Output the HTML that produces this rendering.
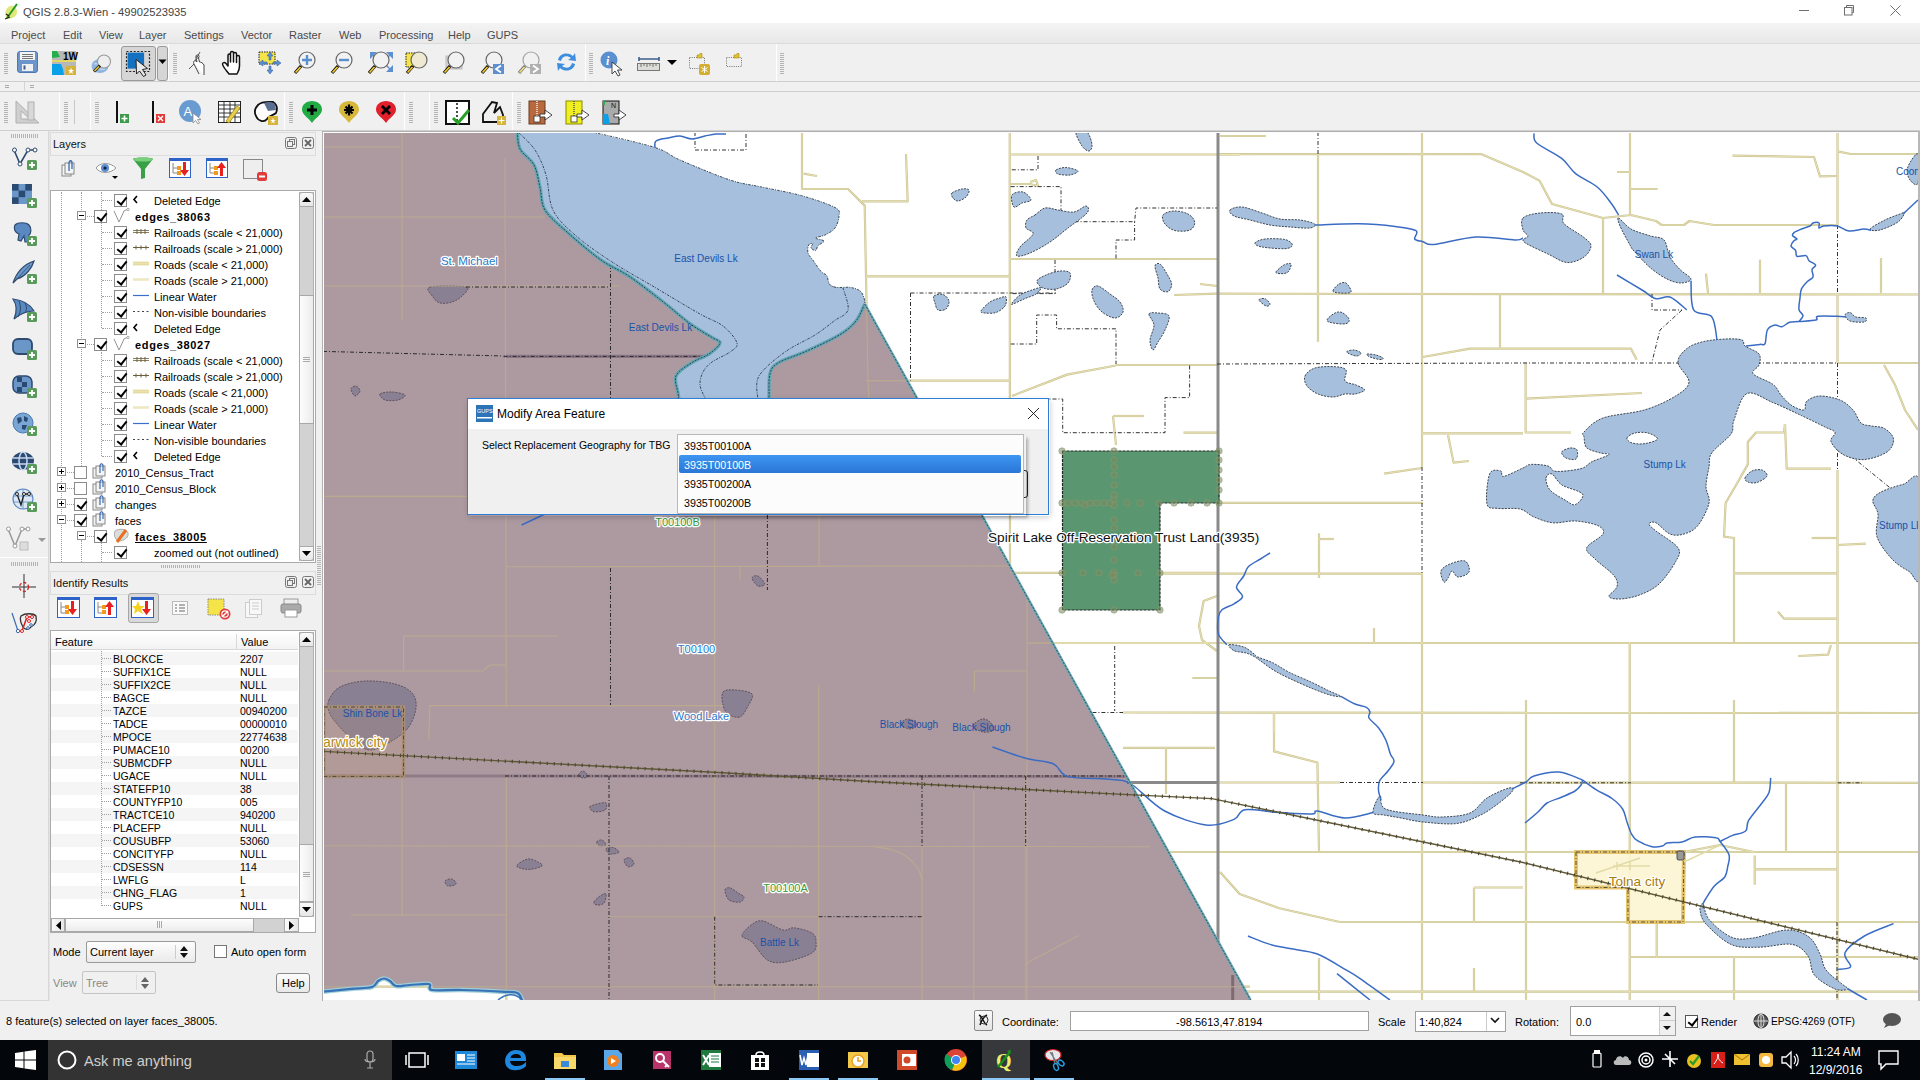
<!DOCTYPE html><html><head><meta charset="utf-8"><title>QGIS</title><style>
*{margin:0;padding:0;box-sizing:border-box}
html,body{width:1920px;height:1080px;overflow:hidden;background:#f0f0f0;font-family:"Liberation Sans",sans-serif;font-size:11px;color:#000}
.a{position:absolute}
.t{position:absolute;white-space:nowrap;line-height:12px}
.grip{position:absolute;width:4px;background:repeating-linear-gradient(to bottom,#b4b4b4 0,#b4b4b4 1px,transparent 1px,transparent 2px)}
.hgrip{position:absolute;height:4px;background:repeating-linear-gradient(to right,#b4b4b4 0,#b4b4b4 1px,transparent 1px,transparent 2px)}
.cb{position:absolute;width:13px;height:13px;border:1px solid #333;background:#fff}
.cb.k::after{content:"";position:absolute;left:3.5px;top:0px;width:4px;height:8px;border:solid #000;border-width:0 2.3px 2.3px 0;transform:rotate(38deg)}
.exp{position:absolute;width:9px;height:9px;border:1px solid #919191;background:#fff}
.exp::before{content:"";position:absolute;left:1px;top:3px;width:5px;height:1px;background:#000}
.exp.p::after{content:"";position:absolute;left:3px;top:1px;width:1px;height:5px;background:#000}
.dv{position:absolute;border-left:1px dotted #a0a0a0;width:0}
.dh{position:absolute;border-top:1px dotted #a0a0a0;height:0}
svg{position:absolute;overflow:visible}
</style></head><body><div class="a" style="left:0px;top:0px;width:1920px;height:23px;background:#fff"></div>
<svg style="left:3px;top:2px;" width="17" height="19" viewBox="0 0 17 19"><path d="M4 17 C1 12 2 6 7 4 C11 3 14 6 14 10 C14 14 10 17 4 17Z" fill="#dfe97a"/><path d="M4 16 L14 2" stroke="#229a22" stroke-width="2"/><path d="M2 17 L7 15 M3 12 L6 14" stroke="#222" stroke-width="1.3"/></svg>
<div class="t" style="left:23px;top:6px;font-size:11.2px;color:#444;">QGIS 2.8.3-Wien - 49902523935</div>
<div class="a" style="left:1799px;top:10px;width:10px;height:1px;background:#6e6e6e"></div>
<svg style="left:1844px;top:5px;" width="11" height="11" viewBox="0 0 11 11"><rect x="0.5" y="2.5" width="7.5" height="7.5" fill="none" stroke="#6e6e6e"/><path d="M2.5 2.5 V0.5 H9.5 V7.5 H8" fill="none" stroke="#6e6e6e"/></svg>
<svg style="left:1890px;top:5px;" width="11" height="11" viewBox="0 0 11 11"><path d="M0.5 0.5 L10.5 10.5 M10.5 0.5 L0.5 10.5" stroke="#6e6e6e" stroke-width="1"/></svg>
<div class="a" style="left:0px;top:23px;width:1920px;height:21px;background:linear-gradient(#f4f4f4,#e8e8e8);border-bottom:1px solid #dadada"></div>
<div class="t" style="left:11px;top:29px;font-size:11px;color:#4a4a4a;">Project</div>
<div class="t" style="left:63px;top:29px;font-size:11px;color:#4a4a4a;">Edit</div>
<div class="t" style="left:99px;top:29px;font-size:11px;color:#4a4a4a;">View</div>
<div class="t" style="left:139px;top:29px;font-size:11px;color:#4a4a4a;">Layer</div>
<div class="t" style="left:184px;top:29px;font-size:11px;color:#4a4a4a;">Settings</div>
<div class="t" style="left:241px;top:29px;font-size:11px;color:#4a4a4a;">Vector</div>
<div class="t" style="left:289px;top:29px;font-size:11px;color:#4a4a4a;">Raster</div>
<div class="t" style="left:339px;top:29px;font-size:11px;color:#4a4a4a;">Web</div>
<div class="t" style="left:379px;top:29px;font-size:11px;color:#4a4a4a;">Processing</div>
<div class="t" style="left:448px;top:29px;font-size:11px;color:#4a4a4a;">Help</div>
<div class="t" style="left:487px;top:29px;font-size:11px;color:#4a4a4a;">GUPS</div>
<div class="a" style="left:0px;top:44px;width:1920px;height:38px;background:#f0f0f0;border-bottom:1px solid #cfcfcf"></div>
<div class="a" style="left:0px;top:82px;width:1920px;height:10px;background:#f0f0f0;border-bottom:1px solid #cfcfcf"></div>
<div class="a" style="left:24px;top:82px;width:1px;height:10px;background:#d4d4d4"></div>
<div class="a" style="left:5px;top:85px;width:4px;height:1px;background:#aaa"></div>
<div class="a" style="left:5px;top:87px;width:4px;height:1px;background:#aaa"></div>
<div class="a" style="left:30px;top:85px;width:4px;height:1px;background:#aaa"></div>
<div class="a" style="left:30px;top:87px;width:4px;height:1px;background:#aaa"></div>
<div class="a" style="left:0px;top:92px;width:1920px;height:39px;background:#f0f0f0;border-bottom:1px solid #cfcfcf"></div>
<div class="grip" style="left:4px;top:53px;height:21px"></div>
<div class="a" style="left:168px;top:44px;width:1px;height:37px;background:#d6d6d6;border-right:1px solid #fff"></div>
<div class="grip" style="left:173px;top:53px;height:21px"></div>
<div class="a" style="left:585px;top:44px;width:1px;height:37px;background:#d6d6d6;border-right:1px solid #fff"></div>
<div class="grip" style="left:589px;top:53px;height:21px"></div>
<div class="a" style="left:776px;top:44px;width:1px;height:37px;background:#d6d6d6;border-right:1px solid #fff"></div>
<div class="grip" style="left:780px;top:53px;height:21px"></div>
<div class="grip" style="left:4px;top:102px;height:22px"></div>
<div class="a" style="left:59px;top:92px;width:1px;height:38px;background:#d6d6d6;border-right:1px solid #fff"></div>
<div class="grip" style="left:64px;top:102px;height:22px"></div>
<div class="a" style="left:74px;top:100px;width:1px;height:24px;background:#c8c8c8"></div>
<div class="a" style="left:90px;top:92px;width:1px;height:38px;background:#d6d6d6;border-right:1px solid #fff"></div>
<div class="grip" style="left:95px;top:102px;height:22px"></div>
<div class="a" style="left:284px;top:92px;width:1px;height:38px;background:#d6d6d6;border-right:1px solid #fff"></div>
<div class="grip" style="left:289px;top:102px;height:22px"></div>
<div class="a" style="left:404px;top:92px;width:1px;height:38px;background:#d6d6d6;border-right:1px solid #fff"></div>
<div class="grip" style="left:409px;top:102px;height:22px"></div>
<div class="a" style="left:429px;top:92px;width:1px;height:38px;background:#d6d6d6;border-right:1px solid #fff"></div>
<div class="grip" style="left:434px;top:102px;height:22px"></div>
<div class="a" style="left:512px;top:92px;width:1px;height:38px;background:#d6d6d6;border-right:1px solid #fff"></div>
<div class="grip" style="left:517px;top:102px;height:22px"></div>
<svg style="left:17px;top:51px;" width="21" height="22" viewBox="0 0 21 22"><rect x="0.5" y="0.5" width="20" height="21" rx="2.5" fill="#6a96cc" stroke="#4e78b0"/><rect x="3" y="1" width="15" height="8" fill="#f4f4f4"/><path d="M5 3.5H16M5 5.5H16M5 7.5H16" stroke="#555" stroke-width="0.8"/><rect x="5" y="13" width="11" height="7" fill="#f0f0f0"/><rect x="6.5" y="14.5" width="2" height="4" fill="#3a5f90"/></svg>
<svg style="left:52px;top:51px;" width="24" height="24" viewBox="0 0 24 24"><rect x="0" y="0" width="24" height="24" fill="#b8b8b8"/><path d="M0 0H5L8 6L0 7Z" fill="#23b04a"/><path d="M0 13H9L11 18L12 24H0Z" fill="#0aa0e8"/><path d="M0 10H24" stroke="#f2e24a" stroke-width="1.5"/><text x="11" y="9" font-size="10" font-family="Liberation Sans" font-weight="bold">1W</text><rect x="14" y="15" width="10" height="9" fill="#d4b33a"/><path d="M19 16.5L19.8 19H22L20.2 20.4L21 23L19 21.5L17 23L17.8 20.4L16 19H18.2Z" fill="#fff"/></svg>
<svg style="left:91px;top:54px;" width="22" height="20" viewBox="0 0 22 20"><ellipse cx="9" cy="12" rx="8.5" ry="7" fill="#8fb4e0"/><path d="M3 10C6 9 9 11 12 10M4 15C7 14 10 16 14 15" stroke="#d8e6f6" stroke-width="1" fill="none"/><circle cx="13" cy="7.5" r="6.5" fill="#eeeeee" stroke="#9a9a9a" stroke-width="1.1"/><path d="M9 11.5L3 17.5" stroke="#222" stroke-width="3"/><path d="M8 12.5L3.5 17" stroke="#f0c828" stroke-width="1.6"/></svg>
<div class="a" style="left:121px;top:46px;width:35px;height:35px;background:#d6d6d6;border:1px solid #9a9a9a;border-radius:3px"></div>
<div class="a" style="left:157px;top:46px;width:11px;height:35px;background:#d6d6d6;border:1px solid #9a9a9a;border-radius:3px"></div>
<svg style="left:158px;top:59px;" width="9" height="6" viewBox="0 0 9 6"><path d="M0.5 0.5H8.5L4.5 5Z" fill="#000"/></svg>
<svg style="left:125px;top:50px;" width="28" height="28" viewBox="0 0 28 28"><rect x="1.5" y="1.5" width="23" height="20" fill="#d4d4d4" stroke="#222" stroke-width="1.2" stroke-dasharray="2 1.6"/><rect x="2.6" y="2.6" width="16.5" height="16" fill="#1470c0"/><path d="M11 9.5L11.5 24L14.5 21L18.5 26.5L21 25L17.5 19.5L22.5 18.5Z" fill="#e8e8e8" stroke="#222" stroke-width="1"/></svg>
<svg style="left:187px;top:50px;" width="20" height="26" viewBox="0 0 20 26"><path d="M13 2L8 11" stroke="#555" stroke-width="1"/><path d="M2 19L7 14" stroke="#555" stroke-width="1"/><path d="M7 14C6 12 7 10 9 11L10 12L9 8C9 6 11 6 11.5 8L12.5 12C14 12 16 13 17 15L17 25" fill="#fff" stroke="#444" stroke-width="1"/><path d="M7 14L12 24" stroke="#444" stroke-width="1"/><circle cx="10.5" cy="6.5" r="1.6" fill="none" stroke="#444" stroke-width="0.9"/></svg>
<svg style="left:221px;top:50px;" width="24" height="26" viewBox="0 0 24 26"><path d="M8 24C5 20 2 17 1.5 14C1.5 12.5 3.5 12 5 13.5L7 16V5.5C7 3.5 9.5 3.5 9.5 5.5V12V3C9.5 1 12.5 1 12.5 3V12V4C12.5 2 15.5 2 15.5 4V12.5V7C15.5 5 18.5 5 18.5 7V16C18.5 20 17 22 16 24Z" fill="#fff" stroke="#111" stroke-width="1.5" stroke-linejoin="round"/></svg>
<svg style="left:258px;top:51px;" width="24" height="24" viewBox="0 0 24 24"><rect x="1" y="1" width="16" height="12" fill="#f4e44a" stroke="#222" stroke-dasharray="1.5 1"/><path d="M12 1L15 5H13V9H11V5H9Z M12 23L15 19H13V15H11V19H9Z M1 12L5 9V11H9V13H5V15Z M23 12L19 9V11H15V13H19V15Z" fill="#5a8ed0" stroke="#3d6aa8" stroke-width="0.6"/></svg>
<svg style="left:293px;top:51px;" width="26" height="25" viewBox="0 0 26 25"><circle cx="14" cy="9" r="8" fill="#f2f2f2" stroke="#666" stroke-width="1.2"/><path d="M14 4V14M9 9H19" stroke="#5b8fd0" stroke-width="2.4"/><path d="M8 15 L2 22" stroke="#111" stroke-width="3.2"/><path d="M7.5 16 L2.5 21.5" stroke="#f0c828" stroke-width="1.8"/></svg>
<svg style="left:330px;top:51px;" width="26" height="25" viewBox="0 0 26 25"><circle cx="14" cy="9" r="8" fill="#f2f2f2" stroke="#666" stroke-width="1.2"/><path d="M9 9H19" stroke="#5b8fd0" stroke-width="2.4"/><path d="M8 15 L2 22" stroke="#111" stroke-width="3.2"/><path d="M7.5 16 L2.5 21.5" stroke="#f0c828" stroke-width="1.8"/></svg>
<svg style="left:369px;top:51px;" width="25" height="25" viewBox="0 0 25 25"><path d="M1 1H8L5 4L8 7L7 8L4 5L1 8Z M24 1H17L20 4L17 7L18 8L21 5L24 8Z M24 21H17L20 18L17 15L18 14L21 17L24 14Z" fill="#5b8fd0"/><circle cx="12" cy="9" r="8" fill="#f2f2f2" stroke="#666" stroke-width="1.2"/><path d="M6 15 L0 22" stroke="#111" stroke-width="3.2"/><path d="M5.5 16 L0.5 21.5" stroke="#f0c828" stroke-width="1.8"/></svg>
<svg style="left:405px;top:51px;" width="26" height="25" viewBox="0 0 26 25"><rect x="1" y="2" width="12" height="14" fill="#f4e44a" stroke="#222" stroke-dasharray="1.5 1"/><circle cx="14" cy="9" r="8" fill="#efe9d2" stroke="#666" stroke-width="1.2"/><path d="M8 15 L2 22" stroke="#111" stroke-width="3.2"/><path d="M7.5 16 L2.5 21.5" stroke="#f0c828" stroke-width="1.8"/></svg>
<svg style="left:442px;top:51px;" width="26" height="25" viewBox="0 0 26 25"><rect x="4" y="5" width="16" height="13" fill="#d9d0dc" stroke="#bbb"/><circle cx="14" cy="9" r="8" fill="#f2f2f2" stroke="#666" stroke-width="1.2"/><path d="M8 15 L2 22" stroke="#111" stroke-width="3.2"/><path d="M7.5 16 L2.5 21.5" stroke="#f0c828" stroke-width="1.8"/></svg>
<svg style="left:480px;top:51px;" width="25" height="25" viewBox="0 0 25 25"><circle cx="14" cy="9" r="8" fill="#f2f2f2" stroke="#666" stroke-width="1.2"/><path d="M8 15 L2 22" stroke="#111" stroke-width="3.2"/><path d="M7.5 16 L2.5 21.5" stroke="#f0c828" stroke-width="1.8"/><rect x="13" y="13" width="11" height="10" fill="#5b8fd0"/><path d="M21 14.5L16 18L21 21.5" fill="none" stroke="#fff" stroke-width="1.8"/></svg>
<svg style="left:517px;top:51px;" width="25" height="25" viewBox="0 0 25 25"><g opacity="0.55"><circle cx="14" cy="9" r="8" fill="#f2f2f2" stroke="#666" stroke-width="1.2"/><path d="M8 15 L2 22" stroke="#111" stroke-width="3.2"/><path d="M7.5 16 L2.5 21.5" stroke="#f0c828" stroke-width="1.8"/></g><rect x="13" y="13" width="11" height="10" fill="#b0b0b0"/><path d="M16 14.5L21 18L16 21.5" fill="none" stroke="#fff" stroke-width="1.8"/></svg>
<svg style="left:555px;top:51px;" width="23" height="22" viewBox="0 0 23 22"><path d="M3 9 C4 3 12 0 18 5 L20 2 L21 10 L13 9 L16 7 C12 4 7 5 6 10Z M20 13 C19 19 11 22 5 17 L3 20 L2 12 L10 13 L7 15 C11 18 16 17 17 12Z" fill="#3d8ede"/></svg>
<svg style="left:600px;top:51px;" width="25" height="25" viewBox="0 0 25 25"><circle cx="9" cy="9" r="8.5" fill="#5a8fd0"/><text x="6" y="14" font-size="12" font-style="italic" font-weight="bold" fill="#fff" font-family="Liberation Serif">i</text><path d="M12 11L12 23L15 20L18 25L20 24L17.5 19L22 19Z" fill="#fff" stroke="#333" stroke-width="0.9"/></svg>
<svg style="left:637px;top:55px;" width="24" height="16" viewBox="0 0 24 16"><path d="M2 2V6M22 2V6M2 4H22" stroke="#3c5f8a" stroke-width="1.6"/><rect x="0.5" y="8.5" width="22" height="7" fill="#dcdcd8" stroke="#777"/><path d="M4 9V12M7 9V11M10 9V12M13 9V11M16 9V12M19 9V11" stroke="#555" stroke-width="0.8"/></svg>
<svg style="left:667px;top:60px;" width="10" height="6" viewBox="0 0 10 6"><path d="M0 0H10L5 5Z" fill="#000"/></svg>
<svg style="left:688px;top:52px;" width="22" height="24" viewBox="0 0 22 24"><rect x="1.5" y="5.5" width="15" height="11" fill="none" stroke="#777" stroke-dasharray="1 1.2"/><path d="M9 3H11L12 1.5H14V6H9Z" fill="#e2c230" stroke="#a88a10" stroke-width="0.6"/><rect x="11" y="12" width="11" height="11" rx="2" fill="#d4ae2e"/><path d="M16.5 14V21M13.5 15.5L19.5 19.5M19.5 15.5L13.5 19.5" stroke="#fff" stroke-width="1"/></svg>
<svg style="left:725px;top:52px;" width="20" height="16" viewBox="0 0 20 16"><rect x="1.5" y="5.5" width="15" height="9" fill="none" stroke="#777" stroke-dasharray="1 1.2"/><path d="M9 3H11L12 1.5H14V6H9Z" fill="#e2c230" stroke="#a88a10" stroke-width="0.6"/></svg>
<svg style="left:15px;top:100px;" width="25" height="25" viewBox="0 0 25 25"><path d="M1 1L24 23H1Z" fill="#cfcfcf" stroke="#b0b0b0"/><path d="M6 11L15 19H6Z" fill="#f0f0f0" stroke="#b0b0b0"/><rect x="13" y="2" width="6" height="18" fill="#d8d8d8" stroke="#b0b0b0"/></svg>
<svg style="left:115px;top:100px;" width="16" height="25" viewBox="0 0 16 25"><path d="M2 1V23" stroke="#111" stroke-width="2"/><rect x="5" y="14" width="9" height="9" fill="#3c9a4a"/><path d="M9.5 15.5V21.5M6.5 18.5H12.5" stroke="#fff" stroke-width="1.6"/></svg>
<svg style="left:151px;top:100px;" width="16" height="25" viewBox="0 0 16 25"><path d="M2 1V23" stroke="#111" stroke-width="2"/><rect x="5" y="14" width="9" height="9" fill="#e03a3a"/><path d="M7 16L12 21M12 16L7 21" stroke="#fff" stroke-width="1.4"/></svg>
<svg style="left:179px;top:99px;" width="25" height="25" viewBox="0 0 25 25"><circle cx="11" cy="12" r="11" fill="#6a9bd0"/><text x="4.5" y="17" font-size="13" fill="#fff" font-family="Liberation Sans">A</text><path d="M14 14L14 24L16.5 21.5L19 25L20.5 24L18.5 20.5L22 20.5Z" fill="#fff" stroke="#888" stroke-width="0.8"/></svg>
<svg style="left:218px;top:101px;" width="24" height="23" viewBox="0 0 24 23"><rect x="0.5" y="0.5" width="22" height="21" fill="#fff" stroke="#222"/><path d="M1 4H22M1 8H22M1 12H22M1 16H22M6 1V22M12 1V22M17 1V22" stroke="#222" stroke-width="0.9"/><path d="M8 20L19 5L22 7L11 22Z" fill="#e8d048" stroke="#9a8420" stroke-width="0.8"/></svg>
<svg style="left:254px;top:100px;" width="25" height="25" viewBox="0 0 25 25"><path d="M4 5C8 1 14 2 19 2C22 4 24 8 22 13C19 16 15 15 13 19C10 23 4 21 2 16C0 12 1 8 4 5Z" fill="#fff" stroke="#111" stroke-width="1.8"/><path d="M10 3C14 1 19 2 21 4L22 10L14 11Z" fill="#5a6e94"/><rect x="14" y="16" width="10" height="9" fill="#d6b43a"/><path d="M19 17.5L19.7 20H22L20 21.2L20.8 23.5L19 22.2L17.2 23.5L18 21.2L16 20H18.3Z" fill="#fff"/></svg>
<svg style="left:302px;top:101px;" width="20" height="22" viewBox="0 0 20 22"><path d="M10 22 C7 17 0 14 0 8.5 C0 3.5 4.5 0 10 0 C15.5 0 20 3.5 20 8.5 C20 14 13 17 10 22Z" fill="#22aa44"/><path d="M10 4V14M5 9H15" stroke="#000" stroke-width="3"/></svg>
<svg style="left:339px;top:101px;" width="20" height="22" viewBox="0 0 20 22"><path d="M10 22 C7 17 0 14 0 8.5 C0 3.5 4.5 0 10 0 C15.5 0 20 3.5 20 8.5 C20 14 13 17 10 22Z" fill="#d8b83a"/><path d="M10 3.5V14.5M5 9H15M6.5 5.5L13.5 12.5M13.5 5.5L6.5 12.5" stroke="#000" stroke-width="2.2"/></svg>
<svg style="left:376px;top:101px;" width="20" height="22" viewBox="0 0 20 22"><path d="M10 22 C7 17 0 14 0 8.5 C0 3.5 4.5 0 10 0 C15.5 0 20 3.5 20 8.5 C20 14 13 17 10 22Z" fill="#e0202a"/><path d="M6 5L14 13M14 5L6 13" stroke="#000" stroke-width="2.8"/></svg>
<svg style="left:445px;top:100px;" width="25" height="25" viewBox="0 0 25 25"><rect x="1" y="1" width="23" height="23" fill="#fff" stroke="#111" stroke-width="2"/><path d="M12 3V23" stroke="#111" stroke-width="1.5" stroke-dasharray="2 2"/><path d="M8 18L13 23L24 10" fill="none" stroke="#28a028" stroke-width="3"/></svg>
<svg style="left:481px;top:100px;" width="26" height="25" viewBox="0 0 26 25"><path d="M2 22L2 14L11 2L16 3L13 13L19 7L22 15L22 22Z" fill="none" stroke="#111" stroke-width="1.8"/><rect x="16" y="16" width="9" height="9" fill="#d6b43a"/><path d="M20.5 17.5V23.5M17.5 20.5H23.5" stroke="#fff" stroke-width="1.2"/></svg>
<svg style="left:528px;top:100px;" width="25" height="25" viewBox="0 0 25 25"><rect x="1" y="1" width="16" height="23" fill="#b86a3e" stroke="#6a3a20"/><path d="M9 1V16" stroke="#eee" stroke-width="1.5" stroke-dasharray="1 1"/><rect x="6" y="16" width="6" height="6" fill="#fff" stroke="#333" stroke-width="0.8"/><path d="M12 14H17V10L24 15L17 20V17H12Z" fill="#fff" stroke="#333" stroke-width="0.9"/></svg>
<svg style="left:565px;top:100px;" width="25" height="25" viewBox="0 0 25 25"><rect x="1" y="1" width="16" height="23" fill="#f0f020" stroke="#8a8a00"/><path d="M9 1V16" stroke="#555" stroke-width="1.5" stroke-dasharray="1 1"/><rect x="6" y="16" width="6" height="6" fill="#fff" stroke="#333" stroke-width="0.8"/><path d="M12 14H17V10L24 15L17 20V17H12Z" fill="#fff" stroke="#333" stroke-width="0.9"/></svg>
<svg style="left:602px;top:100px;" width="25" height="25" viewBox="0 0 25 25"><rect x="1" y="1" width="16" height="23" fill="#aaa" stroke="#111"/><path d="M1 14H6L8 24H1Z" fill="#0aa0e8"/><path d="M1 1H3V5H1Z" fill="#23b04a"/><path d="M12 14H17V10L24 15L17 20V17H12Z" fill="#fff" stroke="#333" stroke-width="0.9"/><text x="9" y="8" font-size="7" fill="#111" font-family="Liberation Sans">N</text></svg>
<svg style="left:323px;top:132px;overflow:hidden" width="1595" height="868" viewBox="323 132 1595 868"><rect x="323" y="132" width="1595" height="868" fill="#fff"/><defs><clipPath id="cpP"><polygon points="323,132 520,132 592.5,140 655,152 680,165 730,185 792,197 825,215 805,250 818,280 855,295 864.7,304 1250.5,1000 524,1000 517.4,993 501,991.7 462,990 434,991.7 431,983 395,986 388,980.5 381,979 375.8,986 350.8,988.9 323,991.7"/></clipPath><clipPath id="cpW"><path clip-rule="evenodd" d="M323,132H1918V1000H323Z M323,132 L520,132 L592.5,140 L655,152 L680,165 L730,185 L792,197 L825,215 L805,250 L818,280 L855,295 L864.7,304 L1250.5,1000 L524,1000 L517.4,993 L501,991.7 L462,990 L434,991.7 L431,983 L395,986 L388,980.5 L381,979 L375.8,986 L350.8,988.9 L323,991.7Z"/></clipPath></defs><g clip-path="url(#cpW)"><polyline points="802,132 802,189 848,189 864.7,205.6 866,276 868,382 870,420" fill="none" stroke="#cbc392" stroke-width="2.2" stroke-linejoin="round"/><polyline points="862,201.4 907.7,201.4 906,154" fill="none" stroke="#cbc392" stroke-width="2.2" stroke-linejoin="round"/><polyline points="803.6,173.7 817,176" fill="none" stroke="#cbc392" stroke-width="2.2" stroke-linejoin="round"/><polyline points="866,276.4 1010,276.4" fill="none" stroke="#cbc392" stroke-width="2.2" stroke-linejoin="round"/><polyline points="1009.7,132 1010,566" fill="none" stroke="#cbc392" stroke-width="2.2" stroke-linejoin="round"/><polyline points="1010,154.5 1240,154.5" fill="none" stroke="#cbc392" stroke-width="2.2" stroke-linejoin="round"/><polyline points="1010.7,184 1030,184 1038,186 1036,180 1030,182" fill="none" stroke="#cbc392" stroke-width="2.2" stroke-linejoin="round"/><polyline points="1174,295 1217,293.6" fill="none" stroke="#cbc392" stroke-width="2.2" stroke-linejoin="round"/><polyline points="1200,284 1217,286" fill="none" stroke="#cbc392" stroke-width="2.2" stroke-linejoin="round"/><polyline points="1113,416 1144,416" fill="none" stroke="#cbc392" stroke-width="2.2" stroke-linejoin="round"/><polyline points="1113,416 1116,445" fill="none" stroke="#cbc392" stroke-width="2.2" stroke-linejoin="round"/><polyline points="1183.5,432.7 1217,432.7" fill="none" stroke="#cbc392" stroke-width="2.2" stroke-linejoin="round"/><polyline points="1010,259 1217,259" fill="none" stroke="#cbc392" stroke-width="2.2" stroke-linejoin="round"/><polyline points="1116,365 1217,365" fill="none" stroke="#cbc392" stroke-width="2.2" stroke-linejoin="round"/><polyline points="866,380.6 1010,380.6" fill="none" stroke="#cbc392" stroke-width="2.2" stroke-linejoin="round"/><polyline points="1012,396 1067,374.6 1116,365.5" fill="none" stroke="#cbc392" stroke-width="2.2" stroke-linejoin="round"/><polyline points="1010,572.8 1218,572.8" fill="none" stroke="#cbc392" stroke-width="2.2" stroke-linejoin="round"/><polyline points="1028.6,643 1218,643" fill="none" stroke="#cbc392" stroke-width="2.2" stroke-linejoin="round"/><polyline points="1218,154.2 1481,154 1523,172 1539.4,180.6 1552,204 1603,218 1631,215 1656,221 1661.7,225 1684,225 1689.4,221 1714,225 1836.7,225" fill="none" stroke="#cbc392" stroke-width="2.2" stroke-linejoin="round"/><polyline points="1318,154 1318,341.7" fill="none" stroke="#cbc392" stroke-width="2.2" stroke-linejoin="round"/><polyline points="1422,132 1422,467" fill="none" stroke="#cbc392" stroke-width="2.2" stroke-linejoin="round"/><polyline points="1422,573 1422,1000" fill="none" stroke="#cbc392" stroke-width="2.2" stroke-linejoin="round"/><polyline points="1218,293.7 1918,294.5" fill="none" stroke="#cbc392" stroke-width="2.2" stroke-linejoin="round"/><polyline points="1500,294 1500,348.7" fill="none" stroke="#cbc392" stroke-width="2.2" stroke-linejoin="round"/><polyline points="1423,357 1470,348.7 1631,348.7 1636.7,359.8" fill="none" stroke="#cbc392" stroke-width="2.2" stroke-linejoin="round"/><polyline points="1220,136 1266,136" fill="none" stroke="#cbc392" stroke-width="2.2" stroke-linejoin="round"/><polyline points="1630,132 1630,215" fill="none" stroke="#cbc392" stroke-width="2.2" stroke-linejoin="round"/><polyline points="1617,172 1630,172" fill="none" stroke="#cbc392" stroke-width="2.2" stroke-linejoin="round"/><polyline points="1630,189 1657.5,189" fill="none" stroke="#cbc392" stroke-width="2.2" stroke-linejoin="round"/><polyline points="1603,218 1603,293" fill="none" stroke="#cbc392" stroke-width="2.2" stroke-linejoin="round"/><polyline points="1837.5,132 1837.5,225" fill="none" stroke="#cbc392" stroke-width="2.2" stroke-linejoin="round"/><polyline points="1837.5,294 1837.5,363" fill="none" stroke="#cbc392" stroke-width="2.2" stroke-linejoin="round"/><polyline points="1732.5,155.6 1814,157 1820,176.4 1837.5,176" fill="none" stroke="#cbc392" stroke-width="2.2" stroke-linejoin="round"/><polyline points="1837.5,151.4 1850.6,154 1918,154" fill="none" stroke="#cbc392" stroke-width="2.2" stroke-linejoin="round"/><polyline points="1760,259.7 1760,293" fill="none" stroke="#cbc392" stroke-width="2.2" stroke-linejoin="round"/><polyline points="1881,258 1881,293" fill="none" stroke="#cbc392" stroke-width="2.2" stroke-linejoin="round"/><polyline points="1706,273.7 1708,293" fill="none" stroke="#cbc392" stroke-width="2.2" stroke-linejoin="round"/><polyline points="1525.6,398.7 1642,393" fill="none" stroke="#cbc392" stroke-width="2.2" stroke-linejoin="round"/><polyline points="1525.6,362.6 1525.6,432.5 1571,432.5" fill="none" stroke="#cbc392" stroke-width="2.2" stroke-linejoin="round"/><polyline points="1837.5,363 1918,363" fill="none" stroke="#cbc392" stroke-width="2.2" stroke-linejoin="round"/><polyline points="1884,365 1895,384.8 1905,410 1918,430" fill="none" stroke="#cbc392" stroke-width="2.2" stroke-linejoin="round"/><polyline points="1218,502.8 1423,502.8" fill="none" stroke="#cbc392" stroke-width="2.2" stroke-linejoin="round"/><polyline points="1160,573.7 1423,573.7" fill="none" stroke="#cbc392" stroke-width="2.2" stroke-linejoin="round"/><polyline points="1027,643 1918,643" fill="none" stroke="#cbc392" stroke-width="2.2" stroke-linejoin="round"/><polyline points="1123,712.5 1918,713" fill="none" stroke="#cbc392" stroke-width="2.2" stroke-linejoin="round"/><polyline points="1448,435 1453.6,462.6 1469,461" fill="none" stroke="#cbc392" stroke-width="2.2" stroke-linejoin="round"/><polyline points="1384,473.7 1422,468" fill="none" stroke="#cbc392" stroke-width="2.2" stroke-linejoin="round"/><polyline points="1422,433.4 1523,433.4" fill="none" stroke="#cbc392" stroke-width="2.2" stroke-linejoin="round"/><polyline points="1319,533.4 1319,578" fill="none" stroke="#cbc392" stroke-width="2.2" stroke-linejoin="round"/><polyline points="1319,539 1334,539" fill="none" stroke="#cbc392" stroke-width="2.2" stroke-linejoin="round"/><polyline points="1374,628 1374,643" fill="none" stroke="#cbc392" stroke-width="2.2" stroke-linejoin="round"/><polyline points="1192.4,678 1217.4,678" fill="none" stroke="#cbc392" stroke-width="2.2" stroke-linejoin="round"/><polyline points="1217,596 1203.6,601 1199,626 1202,640 1217,651" fill="none" stroke="#cbc392" stroke-width="2.2" stroke-linejoin="round"/><polyline points="1274,712.5 1274,732" fill="none" stroke="#cbc392" stroke-width="2.2" stroke-linejoin="round"/><polyline points="1629.7,642 1629.7,1000" fill="none" stroke="#cbc392" stroke-width="2.2" stroke-linejoin="round"/><polyline points="1734,642 1734,538 1724,536.7 1725.6,503 1736.7,484 1747.8,464.4 1747.8,442 1756,432.5 1784,432.5 1785,424" fill="none" stroke="#cbc392" stroke-width="2.2" stroke-linejoin="round"/><polyline points="1785,424 1786.7,468.6 1831,468.6" fill="none" stroke="#cbc392" stroke-width="2.2" stroke-linejoin="round"/><polyline points="1837.5,470 1837.5,1000" fill="none" stroke="#cbc392" stroke-width="2.2" stroke-linejoin="round"/><polyline points="1734,573.3 1837.5,573.3" fill="none" stroke="#cbc392" stroke-width="2.2" stroke-linejoin="round"/><polyline points="1811.7,538 1837.5,538" fill="none" stroke="#cbc392" stroke-width="2.2" stroke-linejoin="round"/><polyline points="1837.5,545 1866,543.6" fill="none" stroke="#cbc392" stroke-width="2.2" stroke-linejoin="round"/><polyline points="1778,611.7 1784,618.6 1836.7,618.6" fill="none" stroke="#cbc392" stroke-width="2.2" stroke-linejoin="round"/><polyline points="1798,656 1828,654.7 1831,645" fill="none" stroke="#cbc392" stroke-width="2.2" stroke-linejoin="round"/><polyline points="1123,747.8 1215,747.8" fill="none" stroke="#cbc392" stroke-width="2.2" stroke-linejoin="round"/><polyline points="1166,747.8 1166,794" fill="none" stroke="#cbc392" stroke-width="2.2" stroke-linejoin="round"/><polyline points="1218,782.5 1340,782.5" fill="none" stroke="#cbc392" stroke-width="2.2" stroke-linejoin="round"/><polyline points="1423,782.5 1918,782.8" fill="none" stroke="#cbc392" stroke-width="2.2" stroke-linejoin="round"/><polyline points="1274,712.5 1274,751.4 1317.4,762.5 1319,851" fill="none" stroke="#cbc392" stroke-width="2.2" stroke-linejoin="round"/><polyline points="1170,852 1918,852" fill="none" stroke="#cbc392" stroke-width="2.2" stroke-linejoin="round"/><polyline points="1340,922 1918,922" fill="none" stroke="#cbc392" stroke-width="2.2" stroke-linejoin="round"/><polyline points="1220,872 1239.7,894 1278.6,908 1339.7,922" fill="none" stroke="#cbc392" stroke-width="2.2" stroke-linejoin="round"/><polyline points="1474,887.5 1474,922" fill="none" stroke="#cbc392" stroke-width="2.2" stroke-linejoin="round"/><polyline points="1474,887.5 1523,887.5" fill="none" stroke="#cbc392" stroke-width="2.2" stroke-linejoin="round"/><polyline points="1246,991.7 1918,991.7" fill="none" stroke="#cbc392" stroke-width="2.2" stroke-linejoin="round"/><polyline points="1319,958 1319,1000" fill="none" stroke="#cbc392" stroke-width="2.2" stroke-linejoin="round"/><polyline points="1474,968 1474,991" fill="none" stroke="#cbc392" stroke-width="2.2" stroke-linejoin="round"/><polyline points="1526,700 1526,1000" fill="none" stroke="#cbc392" stroke-width="2.2" stroke-linejoin="round"/><polyline points="1734,700 1734,782.8" fill="none" stroke="#cbc392" stroke-width="2.2" stroke-linejoin="round"/><polyline points="1786,782.8 1786,852" fill="none" stroke="#cbc392" stroke-width="2.2" stroke-linejoin="round"/><polyline points="1656.7,922 1656.7,957" fill="none" stroke="#cbc392" stroke-width="2.2" stroke-linejoin="round"/><polyline points="1631,957 1918,957" fill="none" stroke="#cbc392" stroke-width="2.2" stroke-linejoin="round"/><polyline points="1734,957 1734,1000" fill="none" stroke="#cbc392" stroke-width="2.2" stroke-linejoin="round"/><polyline points="1754.7,855.6 1754.7,884.7" fill="none" stroke="#cbc392" stroke-width="2.2" stroke-linejoin="round"/><polyline points="1754.7,869.4 1837.5,869.4" fill="none" stroke="#cbc392" stroke-width="2.2" stroke-linejoin="round"/><polyline points="1684,852 1720,845 1754,852" fill="none" stroke="#cbc392" stroke-width="2.2" stroke-linejoin="round"/><polyline points="402,132 402,320" fill="none" stroke="#cbc392" stroke-width="2.2" stroke-linejoin="round"/><polyline points="323,147 400,147" fill="none" stroke="#cbc392" stroke-width="2.2" stroke-linejoin="round"/><polyline points="323,217 545,217" fill="none" stroke="#cbc392" stroke-width="2.2" stroke-linejoin="round"/><polyline points="323,286 620,286" fill="none" stroke="#cbc392" stroke-width="2.2" stroke-linejoin="round"/><polyline points="505,158 506.3,707" fill="none" stroke="#cbc392" stroke-width="2.2" stroke-linejoin="round"/><polyline points="323,496.4 470,496.4" fill="none" stroke="#cbc392" stroke-width="2.2" stroke-linejoin="round"/><polyline points="506,566.7 1010,566" fill="none" stroke="#cbc392" stroke-width="2.2" stroke-linejoin="round"/><polyline points="403.6,636 558,636" fill="none" stroke="#cbc392" stroke-width="2.2" stroke-linejoin="round"/><polyline points="403.6,636 403.6,671" fill="none" stroke="#cbc392" stroke-width="2.2" stroke-linejoin="round"/><polyline points="323,671 483,671 489.7,665 506,665" fill="none" stroke="#cbc392" stroke-width="2.2" stroke-linejoin="round"/><polyline points="429,705.6 723,705.6" fill="none" stroke="#cbc392" stroke-width="2.2" stroke-linejoin="round"/><polyline points="714.7,432 714.7,1000" fill="none" stroke="#cbc392" stroke-width="2.2" stroke-linejoin="round"/><polyline points="430,705.6 428.6,740" fill="none" stroke="#cbc392" stroke-width="2.2" stroke-linejoin="round"/><polyline points="402,776 402,916" fill="none" stroke="#cbc392" stroke-width="2.2" stroke-linejoin="round"/><polyline points="323,845.8 1150,846.7" fill="none" stroke="#cbc392" stroke-width="2.2" stroke-linejoin="round"/><polyline points="506.3,778 506.3,1000" fill="none" stroke="#cbc392" stroke-width="2.2" stroke-linejoin="round"/><polyline points="351,915 506,915" fill="none" stroke="#cbc392" stroke-width="2.2" stroke-linejoin="round"/><polyline points="610,916.7 818,916.7" fill="none" stroke="#cbc392" stroke-width="2.2" stroke-linejoin="round"/><polyline points="819,515 819,566" fill="none" stroke="#cbc392" stroke-width="2.2" stroke-linejoin="round"/><polyline points="818.6,685 818.6,1000" fill="none" stroke="#cbc392" stroke-width="2.2" stroke-linejoin="round"/><polyline points="1027,600 1027,1000" fill="none" stroke="#cbc392" stroke-width="2.2" stroke-linejoin="round"/><polyline points="974.4,671 1027,671" fill="none" stroke="#cbc392" stroke-width="2.2" stroke-linejoin="round"/><polyline points="974.4,671 974.4,691.7" fill="none" stroke="#cbc392" stroke-width="2.2" stroke-linejoin="round"/><polyline points="922,846 922,1000" fill="none" stroke="#cbc392" stroke-width="2.2" stroke-linejoin="round"/><polyline points="973.7,790 973.7,1000" fill="none" stroke="#cbc392" stroke-width="2.2" stroke-linejoin="round"/><polyline points="1025.7,846 1025.7,1000" fill="none" stroke="#cbc392" stroke-width="2.2" stroke-linejoin="round"/><polyline points="323,986.7 1250,986.7" fill="none" stroke="#cbc392" stroke-width="2.2" stroke-linejoin="round"/><polyline points="874,846.7 890,849 903,854 913,862 919,870 922,880" fill="none" stroke="#cbc392" stroke-width="2.2" stroke-linejoin="round"/><polyline points="1025,964 1078.6,935.6" fill="none" stroke="#cbc392" stroke-width="2.2" stroke-linejoin="round"/><polyline points="740,566 740,580" fill="none" stroke="#cbc392" stroke-width="2.2" stroke-linejoin="round"/><polyline points="802,132 802,189 848,189 864.7,205.6 866,276 868,382 870,420" fill="none" stroke="#f0ebc0" stroke-width="0.7" stroke-linejoin="round"/><polyline points="862,201.4 907.7,201.4 906,154" fill="none" stroke="#f0ebc0" stroke-width="0.7" stroke-linejoin="round"/><polyline points="803.6,173.7 817,176" fill="none" stroke="#f0ebc0" stroke-width="0.7" stroke-linejoin="round"/><polyline points="866,276.4 1010,276.4" fill="none" stroke="#f0ebc0" stroke-width="0.7" stroke-linejoin="round"/><polyline points="1009.7,132 1010,566" fill="none" stroke="#f0ebc0" stroke-width="0.7" stroke-linejoin="round"/><polyline points="1010,154.5 1240,154.5" fill="none" stroke="#f0ebc0" stroke-width="0.7" stroke-linejoin="round"/><polyline points="1010.7,184 1030,184 1038,186 1036,180 1030,182" fill="none" stroke="#f0ebc0" stroke-width="0.7" stroke-linejoin="round"/><polyline points="1174,295 1217,293.6" fill="none" stroke="#f0ebc0" stroke-width="0.7" stroke-linejoin="round"/><polyline points="1200,284 1217,286" fill="none" stroke="#f0ebc0" stroke-width="0.7" stroke-linejoin="round"/><polyline points="1113,416 1144,416" fill="none" stroke="#f0ebc0" stroke-width="0.7" stroke-linejoin="round"/><polyline points="1113,416 1116,445" fill="none" stroke="#f0ebc0" stroke-width="0.7" stroke-linejoin="round"/><polyline points="1183.5,432.7 1217,432.7" fill="none" stroke="#f0ebc0" stroke-width="0.7" stroke-linejoin="round"/><polyline points="1010,259 1217,259" fill="none" stroke="#f0ebc0" stroke-width="0.7" stroke-linejoin="round"/><polyline points="1116,365 1217,365" fill="none" stroke="#f0ebc0" stroke-width="0.7" stroke-linejoin="round"/><polyline points="866,380.6 1010,380.6" fill="none" stroke="#f0ebc0" stroke-width="0.7" stroke-linejoin="round"/><polyline points="1012,396 1067,374.6 1116,365.5" fill="none" stroke="#f0ebc0" stroke-width="0.7" stroke-linejoin="round"/><polyline points="1010,572.8 1218,572.8" fill="none" stroke="#f0ebc0" stroke-width="0.7" stroke-linejoin="round"/><polyline points="1028.6,643 1218,643" fill="none" stroke="#f0ebc0" stroke-width="0.7" stroke-linejoin="round"/><polyline points="1218,154.2 1481,154 1523,172 1539.4,180.6 1552,204 1603,218 1631,215 1656,221 1661.7,225 1684,225 1689.4,221 1714,225 1836.7,225" fill="none" stroke="#f0ebc0" stroke-width="0.7" stroke-linejoin="round"/><polyline points="1318,154 1318,341.7" fill="none" stroke="#f0ebc0" stroke-width="0.7" stroke-linejoin="round"/><polyline points="1422,132 1422,467" fill="none" stroke="#f0ebc0" stroke-width="0.7" stroke-linejoin="round"/><polyline points="1422,573 1422,1000" fill="none" stroke="#f0ebc0" stroke-width="0.7" stroke-linejoin="round"/><polyline points="1218,293.7 1918,294.5" fill="none" stroke="#f0ebc0" stroke-width="0.7" stroke-linejoin="round"/><polyline points="1500,294 1500,348.7" fill="none" stroke="#f0ebc0" stroke-width="0.7" stroke-linejoin="round"/><polyline points="1423,357 1470,348.7 1631,348.7 1636.7,359.8" fill="none" stroke="#f0ebc0" stroke-width="0.7" stroke-linejoin="round"/><polyline points="1220,136 1266,136" fill="none" stroke="#f0ebc0" stroke-width="0.7" stroke-linejoin="round"/><polyline points="1630,132 1630,215" fill="none" stroke="#f0ebc0" stroke-width="0.7" stroke-linejoin="round"/><polyline points="1617,172 1630,172" fill="none" stroke="#f0ebc0" stroke-width="0.7" stroke-linejoin="round"/><polyline points="1630,189 1657.5,189" fill="none" stroke="#f0ebc0" stroke-width="0.7" stroke-linejoin="round"/><polyline points="1603,218 1603,293" fill="none" stroke="#f0ebc0" stroke-width="0.7" stroke-linejoin="round"/><polyline points="1837.5,132 1837.5,225" fill="none" stroke="#f0ebc0" stroke-width="0.7" stroke-linejoin="round"/><polyline points="1837.5,294 1837.5,363" fill="none" stroke="#f0ebc0" stroke-width="0.7" stroke-linejoin="round"/><polyline points="1732.5,155.6 1814,157 1820,176.4 1837.5,176" fill="none" stroke="#f0ebc0" stroke-width="0.7" stroke-linejoin="round"/><polyline points="1837.5,151.4 1850.6,154 1918,154" fill="none" stroke="#f0ebc0" stroke-width="0.7" stroke-linejoin="round"/><polyline points="1760,259.7 1760,293" fill="none" stroke="#f0ebc0" stroke-width="0.7" stroke-linejoin="round"/><polyline points="1881,258 1881,293" fill="none" stroke="#f0ebc0" stroke-width="0.7" stroke-linejoin="round"/><polyline points="1706,273.7 1708,293" fill="none" stroke="#f0ebc0" stroke-width="0.7" stroke-linejoin="round"/><polyline points="1525.6,398.7 1642,393" fill="none" stroke="#f0ebc0" stroke-width="0.7" stroke-linejoin="round"/><polyline points="1525.6,362.6 1525.6,432.5 1571,432.5" fill="none" stroke="#f0ebc0" stroke-width="0.7" stroke-linejoin="round"/><polyline points="1837.5,363 1918,363" fill="none" stroke="#f0ebc0" stroke-width="0.7" stroke-linejoin="round"/><polyline points="1884,365 1895,384.8 1905,410 1918,430" fill="none" stroke="#f0ebc0" stroke-width="0.7" stroke-linejoin="round"/><polyline points="1218,502.8 1423,502.8" fill="none" stroke="#f0ebc0" stroke-width="0.7" stroke-linejoin="round"/><polyline points="1160,573.7 1423,573.7" fill="none" stroke="#f0ebc0" stroke-width="0.7" stroke-linejoin="round"/><polyline points="1027,643 1918,643" fill="none" stroke="#f0ebc0" stroke-width="0.7" stroke-linejoin="round"/><polyline points="1123,712.5 1918,713" fill="none" stroke="#f0ebc0" stroke-width="0.7" stroke-linejoin="round"/><polyline points="1448,435 1453.6,462.6 1469,461" fill="none" stroke="#f0ebc0" stroke-width="0.7" stroke-linejoin="round"/><polyline points="1384,473.7 1422,468" fill="none" stroke="#f0ebc0" stroke-width="0.7" stroke-linejoin="round"/><polyline points="1422,433.4 1523,433.4" fill="none" stroke="#f0ebc0" stroke-width="0.7" stroke-linejoin="round"/><polyline points="1319,533.4 1319,578" fill="none" stroke="#f0ebc0" stroke-width="0.7" stroke-linejoin="round"/><polyline points="1319,539 1334,539" fill="none" stroke="#f0ebc0" stroke-width="0.7" stroke-linejoin="round"/><polyline points="1374,628 1374,643" fill="none" stroke="#f0ebc0" stroke-width="0.7" stroke-linejoin="round"/><polyline points="1192.4,678 1217.4,678" fill="none" stroke="#f0ebc0" stroke-width="0.7" stroke-linejoin="round"/><polyline points="1217,596 1203.6,601 1199,626 1202,640 1217,651" fill="none" stroke="#f0ebc0" stroke-width="0.7" stroke-linejoin="round"/><polyline points="1274,712.5 1274,732" fill="none" stroke="#f0ebc0" stroke-width="0.7" stroke-linejoin="round"/><polyline points="1629.7,642 1629.7,1000" fill="none" stroke="#f0ebc0" stroke-width="0.7" stroke-linejoin="round"/><polyline points="1734,642 1734,538 1724,536.7 1725.6,503 1736.7,484 1747.8,464.4 1747.8,442 1756,432.5 1784,432.5 1785,424" fill="none" stroke="#f0ebc0" stroke-width="0.7" stroke-linejoin="round"/><polyline points="1785,424 1786.7,468.6 1831,468.6" fill="none" stroke="#f0ebc0" stroke-width="0.7" stroke-linejoin="round"/><polyline points="1837.5,470 1837.5,1000" fill="none" stroke="#f0ebc0" stroke-width="0.7" stroke-linejoin="round"/><polyline points="1734,573.3 1837.5,573.3" fill="none" stroke="#f0ebc0" stroke-width="0.7" stroke-linejoin="round"/><polyline points="1811.7,538 1837.5,538" fill="none" stroke="#f0ebc0" stroke-width="0.7" stroke-linejoin="round"/><polyline points="1837.5,545 1866,543.6" fill="none" stroke="#f0ebc0" stroke-width="0.7" stroke-linejoin="round"/><polyline points="1778,611.7 1784,618.6 1836.7,618.6" fill="none" stroke="#f0ebc0" stroke-width="0.7" stroke-linejoin="round"/><polyline points="1798,656 1828,654.7 1831,645" fill="none" stroke="#f0ebc0" stroke-width="0.7" stroke-linejoin="round"/><polyline points="1123,747.8 1215,747.8" fill="none" stroke="#f0ebc0" stroke-width="0.7" stroke-linejoin="round"/><polyline points="1166,747.8 1166,794" fill="none" stroke="#f0ebc0" stroke-width="0.7" stroke-linejoin="round"/><polyline points="1218,782.5 1340,782.5" fill="none" stroke="#f0ebc0" stroke-width="0.7" stroke-linejoin="round"/><polyline points="1423,782.5 1918,782.8" fill="none" stroke="#f0ebc0" stroke-width="0.7" stroke-linejoin="round"/><polyline points="1274,712.5 1274,751.4 1317.4,762.5 1319,851" fill="none" stroke="#f0ebc0" stroke-width="0.7" stroke-linejoin="round"/><polyline points="1170,852 1918,852" fill="none" stroke="#f0ebc0" stroke-width="0.7" stroke-linejoin="round"/><polyline points="1340,922 1918,922" fill="none" stroke="#f0ebc0" stroke-width="0.7" stroke-linejoin="round"/><polyline points="1220,872 1239.7,894 1278.6,908 1339.7,922" fill="none" stroke="#f0ebc0" stroke-width="0.7" stroke-linejoin="round"/><polyline points="1474,887.5 1474,922" fill="none" stroke="#f0ebc0" stroke-width="0.7" stroke-linejoin="round"/><polyline points="1474,887.5 1523,887.5" fill="none" stroke="#f0ebc0" stroke-width="0.7" stroke-linejoin="round"/><polyline points="1246,991.7 1918,991.7" fill="none" stroke="#f0ebc0" stroke-width="0.7" stroke-linejoin="round"/><polyline points="1319,958 1319,1000" fill="none" stroke="#f0ebc0" stroke-width="0.7" stroke-linejoin="round"/><polyline points="1474,968 1474,991" fill="none" stroke="#f0ebc0" stroke-width="0.7" stroke-linejoin="round"/><polyline points="1526,700 1526,1000" fill="none" stroke="#f0ebc0" stroke-width="0.7" stroke-linejoin="round"/><polyline points="1734,700 1734,782.8" fill="none" stroke="#f0ebc0" stroke-width="0.7" stroke-linejoin="round"/><polyline points="1786,782.8 1786,852" fill="none" stroke="#f0ebc0" stroke-width="0.7" stroke-linejoin="round"/><polyline points="1656.7,922 1656.7,957" fill="none" stroke="#f0ebc0" stroke-width="0.7" stroke-linejoin="round"/><polyline points="1631,957 1918,957" fill="none" stroke="#f0ebc0" stroke-width="0.7" stroke-linejoin="round"/><polyline points="1734,957 1734,1000" fill="none" stroke="#f0ebc0" stroke-width="0.7" stroke-linejoin="round"/><polyline points="1754.7,855.6 1754.7,884.7" fill="none" stroke="#f0ebc0" stroke-width="0.7" stroke-linejoin="round"/><polyline points="1754.7,869.4 1837.5,869.4" fill="none" stroke="#f0ebc0" stroke-width="0.7" stroke-linejoin="round"/><polyline points="1684,852 1720,845 1754,852" fill="none" stroke="#f0ebc0" stroke-width="0.7" stroke-linejoin="round"/><polyline points="402,132 402,320" fill="none" stroke="#f0ebc0" stroke-width="0.7" stroke-linejoin="round"/><polyline points="323,147 400,147" fill="none" stroke="#f0ebc0" stroke-width="0.7" stroke-linejoin="round"/><polyline points="323,217 545,217" fill="none" stroke="#f0ebc0" stroke-width="0.7" stroke-linejoin="round"/><polyline points="323,286 620,286" fill="none" stroke="#f0ebc0" stroke-width="0.7" stroke-linejoin="round"/><polyline points="505,158 506.3,707" fill="none" stroke="#f0ebc0" stroke-width="0.7" stroke-linejoin="round"/><polyline points="323,496.4 470,496.4" fill="none" stroke="#f0ebc0" stroke-width="0.7" stroke-linejoin="round"/><polyline points="506,566.7 1010,566" fill="none" stroke="#f0ebc0" stroke-width="0.7" stroke-linejoin="round"/><polyline points="403.6,636 558,636" fill="none" stroke="#f0ebc0" stroke-width="0.7" stroke-linejoin="round"/><polyline points="403.6,636 403.6,671" fill="none" stroke="#f0ebc0" stroke-width="0.7" stroke-linejoin="round"/><polyline points="323,671 483,671 489.7,665 506,665" fill="none" stroke="#f0ebc0" stroke-width="0.7" stroke-linejoin="round"/><polyline points="429,705.6 723,705.6" fill="none" stroke="#f0ebc0" stroke-width="0.7" stroke-linejoin="round"/><polyline points="714.7,432 714.7,1000" fill="none" stroke="#f0ebc0" stroke-width="0.7" stroke-linejoin="round"/><polyline points="430,705.6 428.6,740" fill="none" stroke="#f0ebc0" stroke-width="0.7" stroke-linejoin="round"/><polyline points="402,776 402,916" fill="none" stroke="#f0ebc0" stroke-width="0.7" stroke-linejoin="round"/><polyline points="323,845.8 1150,846.7" fill="none" stroke="#f0ebc0" stroke-width="0.7" stroke-linejoin="round"/><polyline points="506.3,778 506.3,1000" fill="none" stroke="#f0ebc0" stroke-width="0.7" stroke-linejoin="round"/><polyline points="351,915 506,915" fill="none" stroke="#f0ebc0" stroke-width="0.7" stroke-linejoin="round"/><polyline points="610,916.7 818,916.7" fill="none" stroke="#f0ebc0" stroke-width="0.7" stroke-linejoin="round"/><polyline points="819,515 819,566" fill="none" stroke="#f0ebc0" stroke-width="0.7" stroke-linejoin="round"/><polyline points="818.6,685 818.6,1000" fill="none" stroke="#f0ebc0" stroke-width="0.7" stroke-linejoin="round"/><polyline points="1027,600 1027,1000" fill="none" stroke="#f0ebc0" stroke-width="0.7" stroke-linejoin="round"/><polyline points="974.4,671 1027,671" fill="none" stroke="#f0ebc0" stroke-width="0.7" stroke-linejoin="round"/><polyline points="974.4,671 974.4,691.7" fill="none" stroke="#f0ebc0" stroke-width="0.7" stroke-linejoin="round"/><polyline points="922,846 922,1000" fill="none" stroke="#f0ebc0" stroke-width="0.7" stroke-linejoin="round"/><polyline points="973.7,790 973.7,1000" fill="none" stroke="#f0ebc0" stroke-width="0.7" stroke-linejoin="round"/><polyline points="1025.7,846 1025.7,1000" fill="none" stroke="#f0ebc0" stroke-width="0.7" stroke-linejoin="round"/><polyline points="323,986.7 1250,986.7" fill="none" stroke="#f0ebc0" stroke-width="0.7" stroke-linejoin="round"/><polyline points="874,846.7 890,849 903,854 913,862 919,870 922,880" fill="none" stroke="#f0ebc0" stroke-width="0.7" stroke-linejoin="round"/><polyline points="1025,964 1078.6,935.6" fill="none" stroke="#f0ebc0" stroke-width="0.7" stroke-linejoin="round"/><polyline points="740,566 740,580" fill="none" stroke="#f0ebc0" stroke-width="0.7" stroke-linejoin="round"/></g><polyline points="1218,132 1218,941.7" fill="none" stroke="#8a8a8a" stroke-width="3"/><polyline points="1232.7,975 1232.7,1000" fill="none" stroke="#8a8a8a" stroke-width="3"/><polyline points="503.6,356.4 712,356.4" fill="none" stroke="#a4a4b8" stroke-width="3.2"/><polyline points="323,776 1127,776.5" fill="none" stroke="#b4b0bc" stroke-width="3"/><polyline points="1127,782.5 1218,782.5" fill="none" stroke="#8a8a8a" stroke-width="3"/><polyline points="910.5,293 910.5,380.6" fill="none" stroke="#333" stroke-width="1" stroke-dasharray="4 2 1 2"/><polyline points="910.5,293 1056,293" fill="none" stroke="#333" stroke-width="1" stroke-dasharray="4 2 1 2"/><polyline points="695,132 695,150 746,150 746,132" fill="none" stroke="#333" stroke-width="1" stroke-dasharray="4 2 1 2"/><polyline points="1038,156 1038,169.8 1010.7,169.8" fill="none" stroke="#333" stroke-width="1" stroke-dasharray="4 2 1 2"/><polyline points="1010.7,186.6 1061,186.6 1061,221.7 1134.6,221.7 1136,208 1217,208" fill="none" stroke="#333" stroke-width="1" stroke-dasharray="4 2 1 2"/><polyline points="1116,258.4 1116,240 1134.6,240 1134.6,221.7" fill="none" stroke="#333" stroke-width="1" stroke-dasharray="4 2 1 2"/><polyline points="1055,260 1055,293.6 1010.7,293.6" fill="none" stroke="#333" stroke-width="1" stroke-dasharray="4 2 1 2"/><polyline points="1010.7,344 1036.7,344 1036.7,315 1056.6,315 1056.6,328.8 1116,328.8 1116,364" fill="none" stroke="#333" stroke-width="1" stroke-dasharray="4 2 1 2"/><polyline points="1189.6,365.5 1189.6,397.6 1165,397.6 1165,432.7 1062.7,432.7 1062.7,399 1049,399" fill="none" stroke="#333" stroke-width="1" stroke-dasharray="4 2 1 2"/><polyline points="1217,364 1520,363 1837.5,363" fill="none" stroke="#333" stroke-width="1" stroke-dasharray="4 2 1 2"/><polyline points="1318,132 1318,154" fill="none" stroke="#333" stroke-width="1" stroke-dasharray="4 2 1 2"/><polyline points="1837.5,225 1837.5,294" fill="none" stroke="#333" stroke-width="1" stroke-dasharray="4 2 1 2"/><polyline points="1837.5,363 1837.5,470" fill="none" stroke="#333" stroke-width="1" stroke-dasharray="4 2 1 2"/><polyline points="1837.5,445 1905,500" fill="none" stroke="#333" stroke-width="1" stroke-dasharray="4 2 1 2"/><polyline points="1652,294 1652,310 1682,310" fill="none" stroke="#333" stroke-width="1" stroke-dasharray="4 2 1 2"/><polyline points="1682,310 1660,330 1652,362" fill="none" stroke="#333" stroke-width="1" stroke-dasharray="4 2 1 2"/><polyline points="1422,467 1422,573" fill="none" stroke="#333" stroke-width="1" stroke-dasharray="4 2 1 2"/><polyline points="1340,782.5 1423,782.5" fill="none" stroke="#333" stroke-width="1" stroke-dasharray="4 2 1 2"/><polyline points="1520,782.8 1631,782.8" fill="none" stroke="#333" stroke-width="1" stroke-dasharray="4 2 1 2"/><polyline points="1837.5,782.8 1862,782.8" fill="none" stroke="#333" stroke-width="1" stroke-dasharray="4 2 1 2"/><polyline points="1114.7,646 1114.7,711" fill="none" stroke="#333" stroke-width="1" stroke-dasharray="4 2 1 2"/><polyline points="1092.4,712.5 1123,712.5" fill="none" stroke="#333" stroke-width="1" stroke-dasharray="4 2 1 2"/><polyline points="1837,922 1837,1000" fill="none" stroke="#333" stroke-width="1" stroke-dasharray="4 2 1 2"/><path d="M952,193 C953.5,191.5 959.2,189.5 962,189 C964.8,188.5 968.3,188.7 969,190 C969.7,191.3 967.8,195.2 966,197 C964.2,198.8 960.2,200.8 958,201 C955.8,201.2 954.0,199.3 953,198 C952.0,196.7 950.5,194.5 952,193 Z" fill="#a5bfdd" stroke="#2e3640" stroke-width="0.9" stroke-dasharray="2 1.2"/><path d="M934,296 C935.3,294.6 940.5,293.7 943,294.5 C945.5,295.3 948.5,298.6 949,301 C949.5,303.4 947.8,307.5 946,309 C944.2,310.5 939.8,311.0 938,310 C936.2,309.0 935.7,305.3 935,303 C934.3,300.7 932.7,297.4 934,296 Z" fill="#a5bfdd" stroke="#2e3640" stroke-width="0.9" stroke-dasharray="2 1.2"/><path d="M981,311 C981.8,309.2 986.8,304.2 990,302 C993.2,299.8 997.3,298.8 1000,298 C1002.7,297.2 1005.2,295.7 1006,297 C1006.8,298.3 1006.7,303.4 1005,306 C1003.3,308.6 999.3,311.3 996,312.5 C992.7,313.7 987.5,313.2 985,313 C982.5,312.8 980.2,312.8 981,311 Z" fill="#a5bfdd" stroke="#2e3640" stroke-width="0.9" stroke-dasharray="2 1.2"/><path d="M1012,303 C1013.2,301.5 1016.7,297.2 1020,295 C1023.3,292.8 1028.5,291.2 1032,290 C1035.5,288.8 1040.3,286.9 1041,287.6 C1041.7,288.3 1038.8,292.1 1036,294 C1033.2,295.9 1027.8,297.3 1024,299 C1020.2,300.7 1015.0,303.3 1013,304 C1011.0,304.7 1010.8,304.5 1012,303 Z" fill="#a5bfdd" stroke="#2e3640" stroke-width="0.9" stroke-dasharray="2 1.2"/><path d="M1037,281 C1037.5,278.8 1042.2,276.7 1046,275 C1049.8,273.3 1056.0,271.3 1060,271 C1064.0,270.7 1068.7,271.0 1070,273 C1071.3,275.0 1070.3,280.3 1068,283 C1065.7,285.7 1060.2,288.2 1056,289 C1051.8,289.8 1046.2,289.3 1043,288 C1039.8,286.7 1036.5,283.2 1037,281 Z" fill="#a5bfdd" stroke="#2e3640" stroke-width="0.9" stroke-dasharray="2 1.2"/><path d="M1092,290 C1092.7,287.5 1095.0,285.3 1098,286 C1101.0,286.7 1106.3,291.3 1110,294 C1113.7,296.7 1117.8,299.0 1120,302 C1122.2,305.0 1123.8,309.3 1123,312 C1122.2,314.7 1118.5,318.0 1115,318 C1111.5,318.0 1105.5,314.8 1102,312 C1098.5,309.2 1095.7,304.7 1094,301 C1092.3,297.3 1091.3,292.5 1092,290 Z" fill="#a5bfdd" stroke="#2e3640" stroke-width="0.9" stroke-dasharray="2 1.2"/><path d="M1012,195 C1013.5,192.5 1019.8,191.2 1023,192 C1026.2,192.8 1031.2,198.2 1031,200 C1030.8,201.8 1024.8,201.8 1022,203 C1019.2,204.2 1015.7,208.3 1014,207 C1012.3,205.7 1010.5,197.5 1012,195 Z" fill="#a5bfdd" stroke="#2e3640" stroke-width="0.9" stroke-dasharray="2 1.2"/><path d="M1035,215 C1038.0,213.0 1041.2,208.8 1045,208 C1048.8,207.2 1053.2,209.3 1058,210 C1062.8,210.7 1069.3,212.7 1074,212 C1078.7,211.3 1083.8,205.8 1086,206 C1088.2,206.2 1090.0,209.3 1087,213 C1084.0,216.7 1074.2,223.2 1068,228 C1061.8,232.8 1056.3,237.8 1050,242 C1043.7,246.2 1035.5,250.7 1030,253 C1024.5,255.3 1018.7,257.0 1017,256 C1015.3,255.0 1017.3,250.7 1020,247 C1022.7,243.3 1032.0,237.2 1033,234 C1034.0,230.8 1027.0,230.3 1026,228 C1025.0,225.7 1025.5,222.2 1027,220 C1028.5,217.8 1032.0,217.0 1035,215 Z" fill="#a5bfdd" stroke="#2e3640" stroke-width="0.9" stroke-dasharray="2 1.2"/><path d="M1056,170 C1057.3,168.9 1062.3,167.3 1066,167.5 C1069.7,167.7 1077.3,169.8 1078,171 C1078.7,172.2 1073.3,174.5 1070,175 C1066.7,175.5 1060.3,174.8 1058,174 C1055.7,173.2 1054.7,171.1 1056,170 Z" fill="#a5bfdd" stroke="#2e3640" stroke-width="0.9" stroke-dasharray="2 1.2"/><path d="M1076,132 C1076.8,129.7 1084.3,129.8 1087,132 C1089.7,134.2 1091.7,141.8 1092,145 C1092.3,148.2 1090.7,150.8 1089,151 C1087.3,151.2 1084.2,149.2 1082,146 C1079.8,142.8 1075.2,134.3 1076,132 Z" fill="#a5bfdd" stroke="#2e3640" stroke-width="0.9" stroke-dasharray="2 1.2"/><path d="M1163,215 C1164.5,212.8 1169.8,211.2 1174,211 C1178.2,210.8 1184.5,212.2 1188,214 C1191.5,215.8 1194.4,219.3 1194.7,222 C1195.0,224.7 1193.3,228.6 1190,230 C1186.7,231.4 1179.2,231.6 1175,230.6 C1170.8,229.6 1167.0,226.6 1165,224 C1163.0,221.4 1161.5,217.2 1163,215 Z" fill="#a5bfdd" stroke="#2e3640" stroke-width="0.9" stroke-dasharray="2 1.2"/><path d="M1230,210 C1231.3,208.5 1236.7,206.5 1242,207 C1247.3,207.5 1255.7,211.0 1262,213 C1268.3,215.0 1273.7,217.8 1280,219 C1286.3,220.2 1294.2,219.2 1300,220 C1305.8,220.8 1313.0,222.7 1314.7,224 C1316.4,225.3 1314.1,227.5 1310,228 C1305.9,228.5 1296.7,227.5 1290,227 C1283.3,226.5 1276.7,226.2 1270,225 C1263.3,223.8 1256.0,221.5 1250,220 C1244.0,218.5 1237.3,217.7 1234,216 C1230.7,214.3 1228.7,211.5 1230,210 Z" fill="#a5bfdd" stroke="#2e3640" stroke-width="0.9" stroke-dasharray="2 1.2"/><path d="M1255,243 C1255.5,241.7 1260.0,239.6 1265,239 C1270.0,238.4 1280.4,238.5 1285,239.5 C1289.6,240.5 1292.4,243.5 1292.4,245 C1292.4,246.5 1290.1,248.4 1285,248.7 C1279.9,249.0 1267.0,247.9 1262,247 C1257.0,246.1 1254.5,244.3 1255,243 Z" fill="#a5bfdd" stroke="#2e3640" stroke-width="0.9" stroke-dasharray="2 1.2"/><path d="M1276,272 C1276.5,270.6 1281.5,266.3 1284,265 C1286.5,263.7 1290.3,262.8 1291,264 C1291.7,265.2 1289.7,270.4 1288,272 C1286.3,273.6 1283.0,273.7 1281,273.7 C1279.0,273.7 1275.5,273.4 1276,272 Z" fill="#a5bfdd" stroke="#2e3640" stroke-width="0.9" stroke-dasharray="2 1.2"/><path d="M1333,291 C1332.8,289.5 1336.8,285.3 1339,284 C1341.2,282.7 1344.0,281.7 1346,283 C1348.0,284.3 1352.0,290.3 1351,292 C1350.0,293.7 1343.0,293.2 1340,293 C1337.0,292.8 1333.2,292.5 1333,291 Z" fill="#a5bfdd" stroke="#2e3640" stroke-width="0.9" stroke-dasharray="2 1.2"/><path d="M1259,300 C1258.8,298.8 1263.2,298.0 1265,298.7 C1266.8,299.4 1269.8,302.8 1270,304 C1270.2,305.2 1267.8,306.7 1266,306 C1264.2,305.3 1259.2,301.2 1259,300 Z" fill="#a5bfdd" stroke="#2e3640" stroke-width="0.9" stroke-dasharray="2 1.2"/><path d="M1327,320 C1327.3,318.3 1332.5,314.2 1335,313 C1337.5,311.8 1339.7,311.5 1342,312.5 C1344.3,313.5 1348.3,317.1 1349,319 C1349.7,320.9 1348.7,323.0 1346,323.7 C1343.3,324.4 1336.2,323.6 1333,323 C1329.8,322.4 1326.7,321.7 1327,320 Z" fill="#a5bfdd" stroke="#2e3640" stroke-width="0.9" stroke-dasharray="2 1.2"/><path d="M1346.6,352 C1346.3,351.0 1351.6,349.8 1354,350 C1356.4,350.2 1360.7,352.0 1361,353 C1361.3,354.0 1358.4,356.2 1356,356 C1353.6,355.8 1346.9,353.0 1346.6,352 Z" fill="#a5bfdd" stroke="#2e3640" stroke-width="0.9" stroke-dasharray="2 1.2"/><path d="M1367,354 C1368.0,353.7 1373.3,354.3 1376,355 C1378.7,355.7 1382.3,357.2 1383,358 C1383.7,358.8 1382.2,359.7 1380,359.5 C1377.8,359.3 1372.2,357.9 1370,357 C1367.8,356.1 1366.0,354.3 1367,354 Z" fill="#a5bfdd" stroke="#2e3640" stroke-width="0.9" stroke-dasharray="2 1.2"/><path d="M1305,376 C1306.3,373.0 1310.0,369.6 1315,368 C1320.0,366.4 1329.8,366.4 1335,366.7 C1340.2,367.0 1344.3,367.6 1346,370 C1347.7,372.4 1343.3,378.5 1345,381 C1346.7,383.5 1352.7,383.5 1356,385 C1359.3,386.5 1364.9,388.5 1364.7,390 C1364.5,391.5 1358.3,393.3 1355,394 C1351.7,394.7 1348.7,393.5 1345,394 C1341.3,394.5 1337.5,397.0 1333,397 C1328.5,397.0 1322.3,395.8 1318,394 C1313.7,392.2 1309.2,389.0 1307,386 C1304.8,383.0 1303.7,379.0 1305,376 Z" fill="#a5bfdd" stroke="#2e3640" stroke-width="0.9" stroke-dasharray="2 1.2"/><path d="M1155,266 C1155.3,263.7 1158.0,262.7 1160,264 C1162.0,265.3 1165.1,270.7 1167,274 C1168.9,277.3 1171.4,281.1 1171.6,284 C1171.8,286.9 1169.9,290.9 1168,291.7 C1166.1,292.5 1161.7,291.3 1160,289 C1158.3,286.7 1158.8,281.8 1158,278 C1157.2,274.2 1154.7,268.3 1155,266 Z" fill="#a5bfdd" stroke="#2e3640" stroke-width="0.9" stroke-dasharray="2 1.2"/><path d="M1149,314 C1149.7,312.0 1154.7,312.7 1158,313 C1161.3,313.3 1167.8,313.2 1169,316 C1170.2,318.8 1166.8,325.7 1165,330 C1163.2,334.3 1160.0,338.7 1158,342 C1156.0,345.3 1154.3,350.3 1153,350 C1151.7,349.7 1149.8,344.2 1150,340 C1150.2,335.8 1154.2,329.3 1154,325 C1153.8,320.7 1148.3,316.0 1149,314 Z" fill="#a5bfdd" stroke="#2e3640" stroke-width="0.9" stroke-dasharray="2 1.2"/><path d="M1523,218 C1525.8,215.2 1533.5,213.7 1540,213 C1546.5,212.3 1557.7,212.2 1561.7,214 C1565.7,215.8 1560.3,219.8 1564,223.7 C1567.7,227.6 1579.5,233.8 1584,237.5 C1588.5,241.2 1591.0,242.8 1591,246 C1591.0,249.2 1588.0,254.2 1584,257 C1580.0,259.8 1573.0,263.0 1567,262.5 C1561.0,262.0 1554.5,257.0 1548,254 C1541.5,251.0 1532.2,246.8 1528,244.5 C1523.8,242.2 1523.0,241.4 1523,240 C1523.0,238.6 1528.0,237.7 1528,236 C1528.0,234.3 1523.8,233.0 1523,230 C1522.2,227.0 1520.2,220.8 1523,218 Z" fill="#a5bfdd" stroke="#2e3640" stroke-width="0.9" stroke-dasharray="2 1.2"/><path d="M1907.5,168 C1908.8,163.7 1916.2,151.5 1918,154 C1919.8,156.5 1919.3,178.7 1918,183 C1916.7,187.3 1911.8,182.5 1910,180 C1908.2,177.5 1906.2,172.3 1907.5,168 Z" fill="#a5bfdd" stroke="#2e3640" stroke-width="0.9" stroke-dasharray="2 1.2"/><path d="M1845,315 C1845.0,313.6 1848.2,312.2 1850,312.5 C1851.8,312.8 1853.3,316.1 1856,317 C1858.7,317.9 1864.7,317.2 1866,318 C1867.3,318.8 1866.7,321.5 1864,322 C1861.3,322.5 1853.2,322.2 1850,321 C1846.8,319.8 1845.0,316.4 1845,315 Z" fill="#a5bfdd" stroke="#2e3640" stroke-width="0.9" stroke-dasharray="2 1.2"/><path d="M1870,229 C1870.8,227.3 1880.0,222.5 1885,220 C1890.0,217.5 1896.7,215.2 1900,214 C1903.3,212.8 1905.0,211.2 1904.7,212.5 C1904.4,213.8 1902.1,219.1 1898,222 C1893.9,224.9 1884.7,228.8 1880,230 C1875.3,231.2 1869.2,230.7 1870,229 Z" fill="#a5bfdd" stroke="#2e3640" stroke-width="0.9" stroke-dasharray="2 1.2"/><path d="M1618.6,218 C1620.4,218.5 1625.7,226.0 1631,229 C1636.3,232.0 1645.1,234.2 1650.6,236 C1656.1,237.8 1660.8,236.5 1664,240 C1667.2,243.5 1667.3,252.1 1670,257 C1672.7,261.9 1676.5,265.8 1680,269.5 C1683.5,273.2 1690.8,276.8 1691,279 C1691.2,281.2 1685.0,283.0 1681,283 C1677.0,283.0 1672.1,281.5 1667,279 C1661.9,276.5 1656.1,272.7 1650.6,268 C1645.1,263.3 1637.5,254.9 1634,251 C1630.5,247.1 1632.0,248.7 1629.7,244.5 C1627.4,240.3 1621.8,230.4 1620,226 C1618.2,221.6 1616.8,217.5 1618.6,218 Z" fill="#a5bfdd" stroke="#2e3640" stroke-width="0.9" stroke-dasharray="2 1.2"/><path d="M1745,478 C1745.7,476.2 1749.2,472.3 1752,471 C1754.8,469.7 1759.5,469.2 1762,470 C1764.5,470.8 1767.8,473.9 1767,476 C1766.2,478.1 1760.2,481.5 1757,482.5 C1753.8,483.5 1750.0,482.8 1748,482 C1746.0,481.2 1744.3,479.8 1745,478 Z" fill="#a5bfdd" stroke="#2e3640" stroke-width="0.9" stroke-dasharray="2 1.2"/><path d="M1441,571 C1442.0,568.0 1446.0,565.7 1450,564 C1454.0,562.3 1461.8,559.7 1465,561 C1468.2,562.3 1470.2,569.3 1469,572 C1467.8,574.7 1460.8,577.2 1458,577 C1455.2,576.8 1453.7,570.8 1452,571 C1450.3,571.2 1449.3,576.2 1448,578 C1446.7,579.8 1445.2,583.2 1444,582 C1442.8,580.8 1440.0,574.0 1441,571 Z" fill="#a5bfdd" stroke="#2e3640" stroke-width="0.9" stroke-dasharray="2 1.2"/><path d="M1678,362.5 C1677.6,356.9 1682.5,352.2 1686.7,348.7 C1690.9,345.2 1696.5,343.3 1703,341.7 C1709.5,340.1 1719.1,339.3 1725.6,339 C1732.1,338.7 1738.8,338.8 1742,340 C1745.2,341.2 1742.2,343.7 1745,346 C1747.8,348.3 1756.7,350.8 1759,354 C1761.3,357.2 1760.0,361.7 1759,365 C1758.0,368.3 1750.7,370.5 1753,373.7 C1755.3,376.9 1768.3,380.8 1773,384.4 C1777.7,387.9 1778.0,391.6 1781,395 C1784.0,398.4 1787.2,402.5 1791,405 C1794.8,407.5 1801.4,410.6 1804,410 C1806.6,409.4 1804.1,403.6 1806.7,401.3 C1809.3,399.0 1814.0,396.2 1819.6,396 C1825.1,395.8 1834.4,397.7 1840,400 C1845.6,402.3 1849.5,406.2 1853,410 C1856.5,413.8 1857.9,420.3 1861,423 C1864.1,425.7 1867.6,425.1 1871.5,426 C1875.4,426.9 1880.8,426.3 1884.5,428.5 C1888.2,430.7 1893.1,435.1 1893.5,439 C1893.9,442.9 1892.0,448.6 1887,452 C1882.0,455.4 1871.0,459.2 1863.7,459.6 C1856.4,460.0 1848.5,457.4 1843,454.4 C1837.5,451.4 1832.3,445.2 1831,441.5 C1829.7,437.8 1836.0,434.8 1835,432.4 C1834.0,430.0 1830.6,429.8 1825,427 C1819.4,424.2 1810.2,419.7 1801.5,415.6 C1792.8,411.5 1782.1,406.3 1773,402.6 C1763.9,398.9 1753.5,390.6 1747,393.5 C1740.5,396.4 1736.7,413.2 1734,420 C1731.3,426.8 1734.7,428.5 1731,434 C1727.3,439.5 1715.4,447.5 1711.7,453 C1708.0,458.5 1710.0,461.4 1709,467 C1708.0,472.6 1706.0,480.7 1706,486.7 C1706.0,492.7 1710.4,496.5 1709,503 C1707.6,509.5 1702.0,520.4 1697.8,525.6 C1693.6,530.8 1688.6,532.6 1684,534 C1679.4,535.4 1674.7,535.9 1670,534 C1665.3,532.1 1659.5,524.5 1656,522.8 C1652.5,521.1 1649.0,522.6 1649,524 C1649.0,525.4 1651.2,527.0 1656,531 C1660.8,535.0 1674.7,542.7 1678,547.8 C1681.3,552.9 1678.8,555.7 1675.6,561.7 C1672.4,567.7 1665.0,578.5 1659,584 C1653.0,589.5 1645.9,592.5 1639.4,595 C1632.9,597.5 1625.1,598.8 1620,599 C1614.9,599.2 1609.5,598.4 1609,596.4 C1608.5,594.4 1616.2,590.2 1617,586.7 C1617.8,583.2 1617.7,580.2 1614,575.6 C1610.3,571.0 1599.5,563.6 1595,559 C1590.5,554.4 1585.4,552.0 1586.7,547.8 C1588.0,543.6 1601.2,537.7 1603,534 C1604.8,530.3 1602.4,527.8 1597.8,525.6 C1593.2,523.4 1583.1,521.5 1575.6,521 C1568.1,520.5 1559.9,523.5 1553,522.8 C1546.1,522.1 1539.5,519.3 1534,517 C1528.5,514.7 1526.0,510.4 1520,509 C1514.0,507.6 1503.5,509.2 1498,508.4 C1492.5,507.6 1488.4,509.8 1487,504 C1485.6,498.2 1487.4,479.2 1489.7,473.7 C1492.0,468.2 1498.5,470.6 1500.8,471 C1503.1,471.4 1499.9,476.9 1503.6,476.4 C1507.3,475.9 1518.4,470.0 1523,468 C1527.6,466.0 1526.8,464.7 1531,464.4 C1535.2,464.1 1543.8,464.8 1548,466 C1552.2,467.2 1550.5,471.0 1556,471.4 C1561.5,471.8 1575.0,470.2 1581,468.6 C1587.0,467.0 1587.3,464.0 1592,461.7 C1596.7,459.4 1607.6,456.1 1609,454.7 C1610.4,453.2 1604.3,454.1 1600.6,453 C1596.9,451.9 1589.5,450.5 1586.7,447.8 C1583.9,445.1 1584.5,439.3 1584,436.7 C1583.5,434.1 1580.8,435.1 1584,432 C1587.2,428.9 1592.8,421.7 1603,418 C1613.2,414.3 1632.9,413.5 1645,409.8 C1657.1,406.1 1668.3,400.6 1675.6,396 C1682.9,391.4 1688.6,387.6 1689,382 C1689.4,376.4 1678.4,368.1 1678,362.5 Z" fill="#a5bfdd" stroke="#2e3640" stroke-width="0.9" stroke-dasharray="2 1.2"/><path d="M1627,438 C1627.5,436.3 1631.5,433.8 1635,433 C1638.5,432.2 1644.2,432.0 1648,433 C1651.8,434.0 1658.0,437.2 1657.5,439 C1657.0,440.8 1649.2,442.9 1645,443.6 C1640.8,444.3 1635.0,443.9 1632,443 C1629.0,442.1 1626.5,439.7 1627,438 Z" fill="#fff" stroke="#2e3640" stroke-width="0.9" stroke-dasharray="2 1.2"/><path d="M1546,478 C1546.3,475.3 1549.3,472.8 1552,474 C1554.7,475.2 1556.9,481.7 1562,485 C1567.1,488.3 1580.3,490.7 1582.5,494 C1584.7,497.3 1577.9,503.7 1575,504.7 C1572.1,505.7 1569.2,502.4 1565,500 C1560.8,497.6 1553.2,493.7 1550,490 C1546.8,486.3 1545.7,480.7 1546,478 Z" fill="#fff" stroke="#2e3640" stroke-width="0.9" stroke-dasharray="2 1.2"/><path d="M1561.7,452 C1562.4,450.3 1567.5,448.3 1570,448 C1572.5,447.7 1576.0,448.2 1577,450 C1578.0,451.8 1577.8,457.7 1576,459 C1574.2,460.3 1568.4,459.2 1566,458 C1563.6,456.8 1561.0,453.7 1561.7,452 Z" fill="#a5bfdd" stroke="#2e3640" stroke-width="0.9" stroke-dasharray="2 1.2"/><path d="M1920,482.5 C1917.2,467.3 1909.5,482.8 1903,484.4 C1896.5,486.0 1886.0,489.3 1881,492 C1876.0,494.7 1873.3,496.9 1872.8,500.6 C1872.3,504.3 1877.3,508.0 1878,514 C1878.7,520.0 1874.7,529.2 1877,536.7 C1879.3,544.2 1886.7,553.2 1892,559 C1897.3,564.8 1904.3,568.6 1909,571.4 C1913.7,574.2 1918.2,590.4 1920,575.6 C1921.8,560.8 1922.8,497.7 1920,482.5 Z" fill="#a5bfdd" stroke="#2e3640" stroke-width="0.9" stroke-dasharray="2 1.2"/><path d="M1229,644.7 C1230.6,644.1 1239.5,645.4 1243.7,647 C1248.0,648.6 1252.3,652.7 1254.5,654.3 C1256.7,655.9 1254.0,655.3 1257,656.7 C1260.0,658.1 1267.2,660.1 1272.6,662.7 C1278.0,665.3 1283.0,669.2 1289.4,672.4 C1295.8,675.6 1304.6,679.0 1311,682 C1317.4,685.0 1323.0,688.0 1328,690.4 C1333.0,692.8 1340.7,695.6 1341,696.4 C1341.3,697.2 1335.0,696.4 1330,695 C1325.0,693.6 1317.8,690.8 1311,688 C1304.2,685.2 1295.4,681.2 1289.4,678.4 C1283.4,675.6 1279.4,673.6 1275,671 C1270.6,668.4 1266.4,665.1 1263,662.7 C1259.6,660.3 1257.3,658.3 1254.5,656.7 C1251.7,655.1 1249.4,654.0 1246,653 C1242.6,652.0 1236.8,652.1 1234,650.7 C1231.2,649.3 1227.4,645.3 1229,644.7 Z" fill="#a5bfdd" stroke="#2e3640" stroke-width="0.9" stroke-dasharray="2 1.2"/><path d="M1373,812.5 C1372.3,809.3 1377.9,796.4 1380,795.8 C1382.1,795.2 1378.3,805.8 1385.5,809 C1392.7,812.2 1413.6,813.7 1423,815 C1432.4,816.3 1434.2,817.3 1442,817 C1449.8,816.7 1462.5,816.2 1470,813 C1477.5,809.8 1480.5,802.2 1487,798 C1493.5,793.8 1504.8,789.0 1509,788 C1513.2,787.0 1514.3,788.7 1512,791.7 C1509.7,794.7 1500.6,802.0 1495,806 C1489.4,810.0 1485.1,813.1 1478.6,816 C1472.1,818.9 1465.3,822.6 1456,823.6 C1446.7,824.6 1432.2,822.9 1423,822 C1413.8,821.1 1407.5,819.2 1401,818 C1394.5,816.8 1388.7,815.9 1384,815 C1379.3,814.1 1373.7,815.7 1373,812.5 Z" fill="#a5bfdd" stroke="#2e3640" stroke-width="0.9" stroke-dasharray="2 1.2"/><path d="M1703,904 C1704.5,905.6 1704.3,913.9 1709,919.4 C1713.7,924.9 1723.7,933.9 1731,937 C1738.3,940.1 1743.7,939.2 1753,938 C1762.3,936.8 1777.4,930.2 1786.7,930 C1796.0,929.8 1803.5,933.0 1809,937 C1814.5,941.0 1817.2,948.5 1820,954 C1822.8,959.5 1822.3,965.0 1826,970 C1829.7,975.0 1838.3,980.8 1842,984 C1845.7,987.2 1849.2,988.2 1848,989 C1846.8,989.8 1840.6,991.3 1835,989 C1829.4,986.7 1818.9,980.5 1814.4,975 C1809.9,969.5 1811.7,961.1 1808,956 C1804.3,950.9 1800.2,945.9 1792,944.4 C1783.8,942.9 1769.2,947.2 1759,947.2 C1748.8,947.2 1739.8,948.3 1731,944.4 C1722.2,940.5 1711.2,929.7 1706,924 C1700.8,918.3 1700.5,913.3 1700,910 C1699.5,906.7 1701.5,902.4 1703,904 Z" fill="#a5bfdd" stroke="#2e3640" stroke-width="0.9" stroke-dasharray="2 1.2"/><path d="M430,287 C435.5,285.3 460.7,285.5 466,287 C471.3,288.5 464.3,293.5 462,296 C459.7,298.5 455.7,300.8 452,302 C448.3,303.2 443.2,303.8 440,303 C436.8,302.2 434.7,299.7 433,297 C431.3,294.3 424.5,288.7 430,287 Z" fill="#a5bfdd" stroke="#2e3640" stroke-width="0.9" stroke-dasharray="2 1.2"/><path d="M351,389 C351.2,387.3 354.5,385.7 356,386 C357.5,386.3 360.2,389.3 360,391 C359.8,392.7 356.5,396.3 355,396 C353.5,395.7 350.8,390.7 351,389 Z" fill="#a5bfdd" stroke="#2e3640" stroke-width="0.9" stroke-dasharray="2 1.2"/><path d="M380,394 C381.2,392.7 387.8,391.8 392,392 C396.2,392.2 404.0,393.7 405,395 C406.0,396.3 401.3,399.2 398,400 C394.7,400.8 388.0,401.0 385,400 C382.0,399.0 378.8,395.3 380,394 Z" fill="#a5bfdd" stroke="#2e3640" stroke-width="0.9" stroke-dasharray="2 1.2"/><path d="M329,700 C330.8,695.8 334.0,690.2 340,687 C346.0,683.8 355.8,681.5 365,681 C374.2,680.5 387.2,682.0 395,684 C402.8,686.0 408.5,689.0 412,693 C415.5,697.0 416.7,702.2 416,708 C415.3,713.8 412.3,722.3 408,728 C403.7,733.7 396.3,738.3 390,742 C383.7,745.7 375.8,750.0 370,750 C364.2,750.0 360.3,746.2 355,742 C349.7,737.8 342.3,730.0 338,725 C333.7,720.0 330.5,716.2 329,712 C327.5,707.8 327.2,704.2 329,700 Z" fill="#a5bfdd" stroke="#2e3640" stroke-width="0.9" stroke-dasharray="2 1.2"/><path d="M578.6,775 C578.6,773.8 581.4,770.8 583,771 C584.6,771.2 588.0,774.8 588,776 C588.0,777.2 584.6,778.2 583,778 C581.4,777.8 578.6,776.2 578.6,775 Z" fill="#a5bfdd" stroke="#2e3640" stroke-width="0.9" stroke-dasharray="2 1.2"/><path d="M589.7,807 C590.2,805.7 594.3,804.7 597,804 C599.7,803.3 604.7,802.0 606,803 C607.3,804.0 607.0,808.5 605,810 C603.0,811.5 596.5,812.2 594,811.7 C591.5,811.2 589.2,808.3 589.7,807 Z" fill="#a5bfdd" stroke="#2e3640" stroke-width="0.9" stroke-dasharray="2 1.2"/><path d="M596.6,842 C596.9,841.0 600.4,839.5 602,840 C603.6,840.5 606.3,844.0 606,845 C605.7,846.0 601.6,846.5 600,846 C598.4,845.5 596.3,843.0 596.6,842 Z" fill="#a5bfdd" stroke="#2e3640" stroke-width="0.9" stroke-dasharray="2 1.2"/><path d="M606,849 C606.3,847.8 609.8,846.5 612,847 C614.2,847.5 619.3,850.8 619,852 C618.7,853.2 612.2,854.5 610,854 C607.8,853.5 605.7,850.2 606,849 Z" fill="#a5bfdd" stroke="#2e3640" stroke-width="0.9" stroke-dasharray="2 1.2"/><path d="M624,860 C624.3,858.5 628.3,857.3 630,858 C631.7,858.7 634.3,862.5 634,864 C633.7,865.5 629.7,867.4 628,866.7 C626.3,866.0 623.7,861.5 624,860 Z" fill="#a5bfdd" stroke="#2e3640" stroke-width="0.9" stroke-dasharray="2 1.2"/><path d="M517,865 C518.3,863.5 524.5,859.5 528,859 C531.5,858.5 535.7,860.8 538,862 C540.3,863.2 543.3,864.8 542,866 C540.7,867.2 533.7,869.1 530,869.4 C526.3,869.7 522.2,868.7 520,868 C517.8,867.3 515.7,866.5 517,865 Z" fill="#a5bfdd" stroke="#2e3640" stroke-width="0.9" stroke-dasharray="2 1.2"/><path d="M445,881 C445.7,879.8 450.2,878.5 452,879 C453.8,879.5 456.7,882.8 456,884 C455.3,885.2 449.8,886.5 448,886 C446.2,885.5 444.3,882.2 445,881 Z" fill="#a5bfdd" stroke="#2e3640" stroke-width="0.9" stroke-dasharray="2 1.2"/><path d="M594,902 C594.5,900.5 598.0,897.3 600,896 C602.0,894.7 605.3,892.8 606,894 C606.7,895.2 605.5,901.2 604,903 C602.5,904.8 598.7,905.2 597,905 C595.3,904.8 593.5,903.5 594,902 Z" fill="#a5bfdd" stroke="#2e3640" stroke-width="0.9" stroke-dasharray="2 1.2"/><path d="M752,578 C752.0,576.3 755.9,575.0 758,576 C760.1,577.0 764.7,582.3 764.7,584 C764.7,585.7 760.1,587.0 758,586 C755.9,585.0 752.0,579.7 752,578 Z" fill="#a5bfdd" stroke="#2e3640" stroke-width="0.9" stroke-dasharray="2 1.2"/><path d="M723,692 C725.0,689.5 730.2,689.7 735,690 C739.8,690.3 749.8,691.3 752,694 C754.2,696.7 750.0,702.2 748,706 C746.0,709.8 743.3,715.7 740,717 C736.7,718.3 730.8,716.0 728,714 C725.2,712.0 723.8,708.7 723,705 C722.2,701.3 721.0,694.5 723,692 Z" fill="#a5bfdd" stroke="#2e3640" stroke-width="0.9" stroke-dasharray="2 1.2"/><path d="M900.8,724 C900.5,722.3 905.2,719.0 908,719 C910.8,719.0 917.1,722.3 917.4,724 C917.7,725.7 912.8,729.0 910,729 C907.2,729.0 901.1,725.7 900.8,724 Z" fill="#a5bfdd" stroke="#2e3640" stroke-width="0.9" stroke-dasharray="2 1.2"/><path d="M973,726 C972.8,723.8 979.2,719.7 982,719 C984.8,718.3 988.0,720.2 990,722 C992.0,723.8 995.2,728.3 994,730 C992.8,731.7 986.5,732.7 983,732 C979.5,731.3 973.2,728.2 973,726 Z" fill="#a5bfdd" stroke="#2e3640" stroke-width="0.9" stroke-dasharray="2 1.2"/><path d="M742,935.6 C742.0,932.7 748.5,926.8 752,924.4 C755.5,922.0 757.8,920.1 763,921 C768.2,921.9 777.8,928.9 783,930 C788.2,931.1 789.2,927.3 794,927.8 C798.8,928.3 808.3,930.6 812,933 C815.7,935.4 816.0,938.7 816,942 C816.0,945.3 817.2,949.7 812,953 C806.8,956.3 792.4,960.8 785,962 C777.6,963.2 772.9,963.3 767.4,960 C761.9,956.7 756.2,946.1 752,942 C747.8,937.9 742.0,938.5 742,935.6 Z" fill="#a5bfdd" stroke="#2e3640" stroke-width="0.9" stroke-dasharray="2 1.2"/><path d="M725,890 C725.2,888.0 727.8,887.3 730,887.8 C732.2,888.3 735.7,891.5 738,893 C740.3,894.5 743.7,895.5 744,897 C744.3,898.5 742.5,901.5 740,902 C737.5,902.5 731.5,902.0 729,900 C726.5,898.0 724.8,892.0 725,890 Z" fill="#a5bfdd" stroke="#2e3640" stroke-width="0.9" stroke-dasharray="2 1.2"/><polygon points="323,132 520,132 592.5,140 655,152 680,165 730,185 792,197 825,215 805,250 818,280 855,295 864.7,304 1250.5,1000 524,1000 517.4,993 501,991.7 462,990 434,991.7 431,983 395,986 388,980.5 381,979 375.8,986 350.8,988.9 323,991.7" fill="rgb(118,86,98)" fill-opacity="0.6"/><g clip-path="url(#cpP)"><polyline points="802,132 802,189 848,189 864.7,205.6 866,276 868,382 870,420" fill="none" stroke="#bba98f" stroke-width="1.1" stroke-linejoin="round"/><polyline points="862,201.4 907.7,201.4 906,154" fill="none" stroke="#bba98f" stroke-width="1.1" stroke-linejoin="round"/><polyline points="803.6,173.7 817,176" fill="none" stroke="#bba98f" stroke-width="1.1" stroke-linejoin="round"/><polyline points="866,276.4 1010,276.4" fill="none" stroke="#bba98f" stroke-width="1.1" stroke-linejoin="round"/><polyline points="1009.7,132 1010,566" fill="none" stroke="#bba98f" stroke-width="1.1" stroke-linejoin="round"/><polyline points="1010,154.5 1240,154.5" fill="none" stroke="#bba98f" stroke-width="1.1" stroke-linejoin="round"/><polyline points="1010.7,184 1030,184 1038,186 1036,180 1030,182" fill="none" stroke="#bba98f" stroke-width="1.1" stroke-linejoin="round"/><polyline points="1174,295 1217,293.6" fill="none" stroke="#bba98f" stroke-width="1.1" stroke-linejoin="round"/><polyline points="1200,284 1217,286" fill="none" stroke="#bba98f" stroke-width="1.1" stroke-linejoin="round"/><polyline points="1113,416 1144,416" fill="none" stroke="#bba98f" stroke-width="1.1" stroke-linejoin="round"/><polyline points="1113,416 1116,445" fill="none" stroke="#bba98f" stroke-width="1.1" stroke-linejoin="round"/><polyline points="1183.5,432.7 1217,432.7" fill="none" stroke="#bba98f" stroke-width="1.1" stroke-linejoin="round"/><polyline points="1010,259 1217,259" fill="none" stroke="#bba98f" stroke-width="1.1" stroke-linejoin="round"/><polyline points="1116,365 1217,365" fill="none" stroke="#bba98f" stroke-width="1.1" stroke-linejoin="round"/><polyline points="866,380.6 1010,380.6" fill="none" stroke="#bba98f" stroke-width="1.1" stroke-linejoin="round"/><polyline points="1012,396 1067,374.6 1116,365.5" fill="none" stroke="#bba98f" stroke-width="1.1" stroke-linejoin="round"/><polyline points="1010,572.8 1218,572.8" fill="none" stroke="#bba98f" stroke-width="1.1" stroke-linejoin="round"/><polyline points="1028.6,643 1218,643" fill="none" stroke="#bba98f" stroke-width="1.1" stroke-linejoin="round"/><polyline points="1218,154.2 1481,154 1523,172 1539.4,180.6 1552,204 1603,218 1631,215 1656,221 1661.7,225 1684,225 1689.4,221 1714,225 1836.7,225" fill="none" stroke="#bba98f" stroke-width="1.1" stroke-linejoin="round"/><polyline points="1318,154 1318,341.7" fill="none" stroke="#bba98f" stroke-width="1.1" stroke-linejoin="round"/><polyline points="1422,132 1422,467" fill="none" stroke="#bba98f" stroke-width="1.1" stroke-linejoin="round"/><polyline points="1422,573 1422,1000" fill="none" stroke="#bba98f" stroke-width="1.1" stroke-linejoin="round"/><polyline points="1218,293.7 1918,294.5" fill="none" stroke="#bba98f" stroke-width="1.1" stroke-linejoin="round"/><polyline points="1500,294 1500,348.7" fill="none" stroke="#bba98f" stroke-width="1.1" stroke-linejoin="round"/><polyline points="1423,357 1470,348.7 1631,348.7 1636.7,359.8" fill="none" stroke="#bba98f" stroke-width="1.1" stroke-linejoin="round"/><polyline points="1220,136 1266,136" fill="none" stroke="#bba98f" stroke-width="1.1" stroke-linejoin="round"/><polyline points="1630,132 1630,215" fill="none" stroke="#bba98f" stroke-width="1.1" stroke-linejoin="round"/><polyline points="1617,172 1630,172" fill="none" stroke="#bba98f" stroke-width="1.1" stroke-linejoin="round"/><polyline points="1630,189 1657.5,189" fill="none" stroke="#bba98f" stroke-width="1.1" stroke-linejoin="round"/><polyline points="1603,218 1603,293" fill="none" stroke="#bba98f" stroke-width="1.1" stroke-linejoin="round"/><polyline points="1837.5,132 1837.5,225" fill="none" stroke="#bba98f" stroke-width="1.1" stroke-linejoin="round"/><polyline points="1837.5,294 1837.5,363" fill="none" stroke="#bba98f" stroke-width="1.1" stroke-linejoin="round"/><polyline points="1732.5,155.6 1814,157 1820,176.4 1837.5,176" fill="none" stroke="#bba98f" stroke-width="1.1" stroke-linejoin="round"/><polyline points="1837.5,151.4 1850.6,154 1918,154" fill="none" stroke="#bba98f" stroke-width="1.1" stroke-linejoin="round"/><polyline points="1760,259.7 1760,293" fill="none" stroke="#bba98f" stroke-width="1.1" stroke-linejoin="round"/><polyline points="1881,258 1881,293" fill="none" stroke="#bba98f" stroke-width="1.1" stroke-linejoin="round"/><polyline points="1706,273.7 1708,293" fill="none" stroke="#bba98f" stroke-width="1.1" stroke-linejoin="round"/><polyline points="1525.6,398.7 1642,393" fill="none" stroke="#bba98f" stroke-width="1.1" stroke-linejoin="round"/><polyline points="1525.6,362.6 1525.6,432.5 1571,432.5" fill="none" stroke="#bba98f" stroke-width="1.1" stroke-linejoin="round"/><polyline points="1837.5,363 1918,363" fill="none" stroke="#bba98f" stroke-width="1.1" stroke-linejoin="round"/><polyline points="1884,365 1895,384.8 1905,410 1918,430" fill="none" stroke="#bba98f" stroke-width="1.1" stroke-linejoin="round"/><polyline points="1218,502.8 1423,502.8" fill="none" stroke="#bba98f" stroke-width="1.1" stroke-linejoin="round"/><polyline points="1160,573.7 1423,573.7" fill="none" stroke="#bba98f" stroke-width="1.1" stroke-linejoin="round"/><polyline points="1027,643 1918,643" fill="none" stroke="#bba98f" stroke-width="1.1" stroke-linejoin="round"/><polyline points="1123,712.5 1918,713" fill="none" stroke="#bba98f" stroke-width="1.1" stroke-linejoin="round"/><polyline points="1448,435 1453.6,462.6 1469,461" fill="none" stroke="#bba98f" stroke-width="1.1" stroke-linejoin="round"/><polyline points="1384,473.7 1422,468" fill="none" stroke="#bba98f" stroke-width="1.1" stroke-linejoin="round"/><polyline points="1422,433.4 1523,433.4" fill="none" stroke="#bba98f" stroke-width="1.1" stroke-linejoin="round"/><polyline points="1319,533.4 1319,578" fill="none" stroke="#bba98f" stroke-width="1.1" stroke-linejoin="round"/><polyline points="1319,539 1334,539" fill="none" stroke="#bba98f" stroke-width="1.1" stroke-linejoin="round"/><polyline points="1374,628 1374,643" fill="none" stroke="#bba98f" stroke-width="1.1" stroke-linejoin="round"/><polyline points="1192.4,678 1217.4,678" fill="none" stroke="#bba98f" stroke-width="1.1" stroke-linejoin="round"/><polyline points="1217,596 1203.6,601 1199,626 1202,640 1217,651" fill="none" stroke="#bba98f" stroke-width="1.1" stroke-linejoin="round"/><polyline points="1274,712.5 1274,732" fill="none" stroke="#bba98f" stroke-width="1.1" stroke-linejoin="round"/><polyline points="1629.7,642 1629.7,1000" fill="none" stroke="#bba98f" stroke-width="1.1" stroke-linejoin="round"/><polyline points="1734,642 1734,538 1724,536.7 1725.6,503 1736.7,484 1747.8,464.4 1747.8,442 1756,432.5 1784,432.5 1785,424" fill="none" stroke="#bba98f" stroke-width="1.1" stroke-linejoin="round"/><polyline points="1785,424 1786.7,468.6 1831,468.6" fill="none" stroke="#bba98f" stroke-width="1.1" stroke-linejoin="round"/><polyline points="1837.5,470 1837.5,1000" fill="none" stroke="#bba98f" stroke-width="1.1" stroke-linejoin="round"/><polyline points="1734,573.3 1837.5,573.3" fill="none" stroke="#bba98f" stroke-width="1.1" stroke-linejoin="round"/><polyline points="1811.7,538 1837.5,538" fill="none" stroke="#bba98f" stroke-width="1.1" stroke-linejoin="round"/><polyline points="1837.5,545 1866,543.6" fill="none" stroke="#bba98f" stroke-width="1.1" stroke-linejoin="round"/><polyline points="1778,611.7 1784,618.6 1836.7,618.6" fill="none" stroke="#bba98f" stroke-width="1.1" stroke-linejoin="round"/><polyline points="1798,656 1828,654.7 1831,645" fill="none" stroke="#bba98f" stroke-width="1.1" stroke-linejoin="round"/><polyline points="1123,747.8 1215,747.8" fill="none" stroke="#bba98f" stroke-width="1.1" stroke-linejoin="round"/><polyline points="1166,747.8 1166,794" fill="none" stroke="#bba98f" stroke-width="1.1" stroke-linejoin="round"/><polyline points="1218,782.5 1340,782.5" fill="none" stroke="#bba98f" stroke-width="1.1" stroke-linejoin="round"/><polyline points="1423,782.5 1918,782.8" fill="none" stroke="#bba98f" stroke-width="1.1" stroke-linejoin="round"/><polyline points="1274,712.5 1274,751.4 1317.4,762.5 1319,851" fill="none" stroke="#bba98f" stroke-width="1.1" stroke-linejoin="round"/><polyline points="1170,852 1918,852" fill="none" stroke="#bba98f" stroke-width="1.1" stroke-linejoin="round"/><polyline points="1340,922 1918,922" fill="none" stroke="#bba98f" stroke-width="1.1" stroke-linejoin="round"/><polyline points="1220,872 1239.7,894 1278.6,908 1339.7,922" fill="none" stroke="#bba98f" stroke-width="1.1" stroke-linejoin="round"/><polyline points="1474,887.5 1474,922" fill="none" stroke="#bba98f" stroke-width="1.1" stroke-linejoin="round"/><polyline points="1474,887.5 1523,887.5" fill="none" stroke="#bba98f" stroke-width="1.1" stroke-linejoin="round"/><polyline points="1246,991.7 1918,991.7" fill="none" stroke="#bba98f" stroke-width="1.1" stroke-linejoin="round"/><polyline points="1319,958 1319,1000" fill="none" stroke="#bba98f" stroke-width="1.1" stroke-linejoin="round"/><polyline points="1474,968 1474,991" fill="none" stroke="#bba98f" stroke-width="1.1" stroke-linejoin="round"/><polyline points="1526,700 1526,1000" fill="none" stroke="#bba98f" stroke-width="1.1" stroke-linejoin="round"/><polyline points="1734,700 1734,782.8" fill="none" stroke="#bba98f" stroke-width="1.1" stroke-linejoin="round"/><polyline points="1786,782.8 1786,852" fill="none" stroke="#bba98f" stroke-width="1.1" stroke-linejoin="round"/><polyline points="1656.7,922 1656.7,957" fill="none" stroke="#bba98f" stroke-width="1.1" stroke-linejoin="round"/><polyline points="1631,957 1918,957" fill="none" stroke="#bba98f" stroke-width="1.1" stroke-linejoin="round"/><polyline points="1734,957 1734,1000" fill="none" stroke="#bba98f" stroke-width="1.1" stroke-linejoin="round"/><polyline points="1754.7,855.6 1754.7,884.7" fill="none" stroke="#bba98f" stroke-width="1.1" stroke-linejoin="round"/><polyline points="1754.7,869.4 1837.5,869.4" fill="none" stroke="#bba98f" stroke-width="1.1" stroke-linejoin="round"/><polyline points="1684,852 1720,845 1754,852" fill="none" stroke="#bba98f" stroke-width="1.1" stroke-linejoin="round"/><polyline points="402,132 402,320" fill="none" stroke="#bba98f" stroke-width="1.1" stroke-linejoin="round"/><polyline points="323,147 400,147" fill="none" stroke="#bba98f" stroke-width="1.1" stroke-linejoin="round"/><polyline points="323,217 545,217" fill="none" stroke="#bba98f" stroke-width="1.1" stroke-linejoin="round"/><polyline points="323,286 620,286" fill="none" stroke="#bba98f" stroke-width="1.1" stroke-linejoin="round"/><polyline points="505,158 506.3,707" fill="none" stroke="#bba98f" stroke-width="1.1" stroke-linejoin="round"/><polyline points="323,496.4 470,496.4" fill="none" stroke="#bba98f" stroke-width="1.1" stroke-linejoin="round"/><polyline points="506,566.7 1010,566" fill="none" stroke="#bba98f" stroke-width="1.1" stroke-linejoin="round"/><polyline points="403.6,636 558,636" fill="none" stroke="#bba98f" stroke-width="1.1" stroke-linejoin="round"/><polyline points="403.6,636 403.6,671" fill="none" stroke="#bba98f" stroke-width="1.1" stroke-linejoin="round"/><polyline points="323,671 483,671 489.7,665 506,665" fill="none" stroke="#bba98f" stroke-width="1.1" stroke-linejoin="round"/><polyline points="429,705.6 723,705.6" fill="none" stroke="#bba98f" stroke-width="1.1" stroke-linejoin="round"/><polyline points="714.7,432 714.7,1000" fill="none" stroke="#bba98f" stroke-width="1.1" stroke-linejoin="round"/><polyline points="430,705.6 428.6,740" fill="none" stroke="#bba98f" stroke-width="1.1" stroke-linejoin="round"/><polyline points="402,776 402,916" fill="none" stroke="#bba98f" stroke-width="1.1" stroke-linejoin="round"/><polyline points="323,845.8 1150,846.7" fill="none" stroke="#bba98f" stroke-width="1.1" stroke-linejoin="round"/><polyline points="506.3,778 506.3,1000" fill="none" stroke="#bba98f" stroke-width="1.1" stroke-linejoin="round"/><polyline points="351,915 506,915" fill="none" stroke="#bba98f" stroke-width="1.1" stroke-linejoin="round"/><polyline points="610,916.7 818,916.7" fill="none" stroke="#bba98f" stroke-width="1.1" stroke-linejoin="round"/><polyline points="819,515 819,566" fill="none" stroke="#bba98f" stroke-width="1.1" stroke-linejoin="round"/><polyline points="818.6,685 818.6,1000" fill="none" stroke="#bba98f" stroke-width="1.1" stroke-linejoin="round"/><polyline points="1027,600 1027,1000" fill="none" stroke="#bba98f" stroke-width="1.1" stroke-linejoin="round"/><polyline points="974.4,671 1027,671" fill="none" stroke="#bba98f" stroke-width="1.1" stroke-linejoin="round"/><polyline points="974.4,671 974.4,691.7" fill="none" stroke="#bba98f" stroke-width="1.1" stroke-linejoin="round"/><polyline points="922,846 922,1000" fill="none" stroke="#bba98f" stroke-width="1.1" stroke-linejoin="round"/><polyline points="973.7,790 973.7,1000" fill="none" stroke="#bba98f" stroke-width="1.1" stroke-linejoin="round"/><polyline points="1025.7,846 1025.7,1000" fill="none" stroke="#bba98f" stroke-width="1.1" stroke-linejoin="round"/><polyline points="323,986.7 1250,986.7" fill="none" stroke="#bba98f" stroke-width="1.1" stroke-linejoin="round"/><polyline points="874,846.7 890,849 903,854 913,862 919,870 922,880" fill="none" stroke="#bba98f" stroke-width="1.1" stroke-linejoin="round"/><polyline points="1025,964 1078.6,935.6" fill="none" stroke="#bba98f" stroke-width="1.1" stroke-linejoin="round"/><polyline points="740,566 740,580" fill="none" stroke="#bba98f" stroke-width="1.1" stroke-linejoin="round"/></g><polyline points="610.5,265 610.5,400" fill="none" stroke="#2a2a2a" stroke-width="1" stroke-dasharray="4 2 1 2"/><polyline points="610.5,568 610.5,705" fill="none" stroke="#2a2a2a" stroke-width="1" stroke-dasharray="4 2 1 2"/><polyline points="714.7,916.7 714.7,985 818,985" fill="none" stroke="#2a2a2a" stroke-width="1" stroke-dasharray="4 2 1 2"/><polyline points="323,351.4 503,356" fill="none" stroke="#2a2a2a" stroke-width="1" stroke-dasharray="4 2 1 2"/><polyline points="503.6,356.4 712,356.4" fill="none" stroke="#2a2a2a" stroke-width="1" stroke-dasharray="4 2 1 2"/><polyline points="767.4,515 767.4,590" fill="none" stroke="#2a2a2a" stroke-width="1" stroke-dasharray="4 2 1 2"/><polyline points="609,776 609,1000" fill="none" stroke="#2a2a2a" stroke-width="1" stroke-dasharray="4 2 1 2"/><polyline points="922,776 922,846" fill="none" stroke="#2a2a2a" stroke-width="1" stroke-dasharray="4 2 1 2"/><polyline points="1025.7,776 1025.7,846" fill="none" stroke="#2a2a2a" stroke-width="1" stroke-dasharray="4 2 1 2"/><polyline points="818.6,916.7 922,916.7" fill="none" stroke="#2a2a2a" stroke-width="1" stroke-dasharray="4 2 1 2"/><polyline points="505,776 1127,776" fill="none" stroke="#2a2a2a" stroke-width="1" stroke-dasharray="4 2 1 2"/><polyline points="323,776.4 403.5,776.4" fill="none" stroke="#2a2a2a" stroke-width="1" stroke-dasharray="4 2 1 2"/><polyline points="466,287 610,287" fill="none" stroke="#2a2a2a" stroke-width="1" stroke-dasharray="4 2 1 2"/><path d="M1314.7,225 C1322.1,224.8 1345.6,223.5 1359,223.7 C1372.4,223.9 1385.5,225.2 1395,226.4 C1404.5,227.6 1412.7,228.5 1416,230.6 C1419.3,232.7 1413.5,237.2 1414.7,239 C1415.9,240.8 1419.8,240.8 1423,241.7 C1426.2,242.6 1425.2,245.3 1434,244.5 C1442.8,243.7 1462.3,237.8 1475.8,237 C1489.2,236.2 1506.8,239.8 1514.7,240 C1522.6,240.2 1521.6,238.3 1523,238 " fill="none" stroke="#3a6cc4" stroke-width="1.5"/><path d="M1534,133.4 C1534.5,135.0 1532.1,138.8 1536.7,143 C1541.3,147.2 1555.2,153.3 1561.7,158.4 C1568.2,163.5 1569.6,168.8 1575.6,173.7 C1581.6,178.5 1591.8,182.4 1597.8,187.5 C1603.8,192.6 1608.2,199.4 1611.7,204 C1615.2,208.6 1617.4,213.2 1618.6,215 " fill="none" stroke="#3a6cc4" stroke-width="1.5"/><path d="M1691,280.6 C1691.4,285.5 1690.1,303.8 1693.6,309.8 C1697.0,315.8 1707.8,311.7 1711.7,316.7 C1715.6,321.7 1716.1,336.1 1717,340 " fill="none" stroke="#3a6cc4" stroke-width="1.5"/><path d="M1617,275 C1621.2,277.5 1635.5,286.1 1642,290 C1648.5,293.9 1651.3,297.5 1656,298.7 C1660.7,299.9 1664.9,295.1 1670,297 C1675.1,298.9 1683.9,307.7 1686.7,309.8 " fill="none" stroke="#3a6cc4" stroke-width="1.5"/><path d="M1746,346 C1748.3,345.7 1756.8,344.8 1760,344.4 C1763.2,344.0 1763.8,346.1 1765,343.7 C1766.2,341.3 1765.8,333.1 1767.4,330 C1769.0,326.9 1772.4,325.6 1774.8,325 C1777.2,324.4 1779.5,327.2 1782,326.7 C1784.5,326.2 1786.8,323.1 1789.6,322.2 C1792.4,321.3 1794.6,321.9 1799,321.5 C1803.4,321.1 1812.9,320.9 1816,320 C1819.1,319.1 1814.3,316.9 1817.8,316.3 C1821.3,315.7 1832.3,316.2 1837,316.3 C1841.7,316.4 1844.5,316.9 1846,317 " fill="none" stroke="#3a6cc4" stroke-width="1.5"/><path d="M1799,321.5 C1799.7,320.5 1803.0,317.6 1803,315.6 C1803.0,313.6 1799.5,312.6 1799,309.6 C1798.5,306.6 1799.6,301.2 1800,297.8 C1800.4,294.4 1800.3,291.6 1801.5,288.9 C1802.7,286.2 1805.5,283.5 1807.4,281.5 C1809.3,279.5 1812.2,279.0 1813,277 C1813.8,275.0 1811.6,271.6 1812,269.6 C1812.4,267.6 1816.1,266.5 1815.6,265 C1815.1,263.5 1810.6,262.3 1809,260.7 C1807.4,259.1 1808.0,256.3 1806,255.6 C1804.0,254.9 1798.7,257.2 1797,256.3 C1795.3,255.4 1796.6,252.1 1795.6,250.4 C1794.6,248.7 1791.3,247.6 1791,246 C1790.7,244.4 1793.0,241.9 1794,240.7 C1795.0,239.5 1797.2,239.8 1797,239 C1796.8,238.2 1793.1,236.7 1792.6,235.6 C1792.1,234.5 1792.8,233.6 1794,232.6 C1795.2,231.6 1797.3,230.7 1800,229.6 C1802.7,228.5 1807.8,227.1 1810,226 C1812.2,224.9 1811.5,223.5 1813,223 C1814.5,222.5 1818.0,222.2 1819,223 C1820.0,223.8 1818.2,227.5 1819,228 C1819.8,228.5 1820.7,226.3 1823.7,226 C1826.7,225.7 1832.8,225.2 1837,226 C1841.2,226.8 1844.5,230.5 1849,231 C1853.5,231.5 1860.0,229.1 1863.7,229 C1867.4,228.9 1869.8,230.2 1871,230.4 " fill="none" stroke="#3a6cc4" stroke-width="1.5"/><path d="M1903,214 C1905.5,211.7 1915.5,202.3 1918,200 " fill="none" stroke="#3a6cc4" stroke-width="1.5"/><path d="M655,148 C655.2,146.8 653.8,142.7 656,141 C658.2,139.3 664.0,138.8 668,138 C672.0,137.2 676.0,135.8 680,136 C684.0,136.2 687.8,139.0 692,139 C696.2,139.0 701.0,136.8 705,136 C709.0,135.2 712.5,134.3 716,134 C719.5,133.7 724.3,134.0 726,134 " fill="none" stroke="#3a6cc4" stroke-width="1.5"/><path d="M1270,553 C1268.4,554.0 1264.1,556.8 1260.5,559 C1256.9,561.2 1251.3,563.7 1248.5,566.5 C1245.7,569.3 1245.7,572.6 1243.7,576 C1241.7,579.4 1236.7,583.6 1236.5,587 C1236.3,590.4 1242.9,593.8 1242.5,596.6 C1242.1,599.4 1237.4,601.6 1234,603.8 C1230.6,606.0 1224.6,607.6 1222,609.8 C1219.4,612.0 1219.0,613.0 1218.4,617 C1217.8,621.0 1217.0,629.3 1218.4,633.9 C1219.8,638.5 1225.4,642.9 1226.8,644.7 " fill="none" stroke="#3a6cc4" stroke-width="1.5"/><path d="M1341,696.4 C1343.2,697.6 1350.2,701.9 1354.4,703.7 C1358.6,705.5 1363.8,705.9 1366.4,707.3 C1369.0,708.7 1369.6,710.2 1370,712 C1370.4,713.8 1367.6,715.4 1369,718 C1370.4,720.6 1375.7,724.1 1378.5,727.7 C1381.3,731.3 1383.7,735.4 1385.7,739.8 C1387.7,744.2 1389.1,750.6 1390.5,754.2 C1391.9,757.8 1394.4,758.6 1394,761.4 C1393.6,764.2 1390.4,767.8 1388,771 C1385.6,774.2 1381.3,777.5 1379.7,780.7 C1378.1,783.9 1378.3,787.1 1378.5,790.3 C1378.7,793.5 1380.6,798.4 1381,800 " fill="none" stroke="#3a6cc4" stroke-width="1.5"/><path d="M1123,780.5 C1124.8,781.4 1127.0,780.9 1134,786 C1141.0,791.1 1152.7,804.5 1164.7,811 C1176.7,817.5 1194.5,823.6 1206,825 C1217.5,826.4 1227.5,821.9 1234,819.4 C1240.5,816.9 1237.6,810.9 1245,809.7 C1252.4,808.6 1267.4,811.8 1278.6,812.5 C1289.8,813.2 1305.5,814.2 1312,814 C1318.5,813.8 1311.9,810.3 1317.4,811 C1322.9,811.7 1335.7,817.8 1345,818 C1354.3,818.2 1368.3,813.4 1373,812.5 " fill="none" stroke="#3a6cc4" stroke-width="1.5"/><path d="M992.4,747 C998.0,748.9 1015.6,755.5 1025.8,758.3 C1036.0,761.1 1046.7,761.0 1053.6,764 C1060.5,767.0 1058.7,773.9 1067.4,776.4 C1076.1,778.9 1096.7,778.3 1106,779 C1115.3,779.7 1120.2,780.2 1123,780.5 " fill="none" stroke="#3a6cc4" stroke-width="1.5"/><path d="M1512,789 C1514.3,787.8 1522.3,784.2 1526,782 C1529.7,779.8 1528.5,777.7 1534,776 C1539.5,774.3 1550.9,771.3 1559,772 C1567.1,772.7 1578.7,778.7 1582.6,780 " fill="none" stroke="#3a6cc4" stroke-width="1.5"/><path d="M1525,823 C1527.2,821.2 1534.3,815.3 1538,812 C1541.7,808.7 1543.0,805.5 1547,803 C1551.0,800.5 1557.3,799.0 1562,797 C1566.7,795.0 1571.8,793.0 1575,791 C1578.2,789.0 1579.7,786.8 1581,785 C1582.3,783.2 1582.3,780.8 1582.6,780 " fill="none" stroke="#3a6cc4" stroke-width="1.5"/><path d="M1582.6,780 C1584.8,781.6 1591.1,786.5 1596,789.6 C1600.9,792.7 1607.6,795.3 1612,798.5 C1616.4,801.7 1620.1,805.1 1622.6,809 C1625.1,812.9 1625.5,817.8 1627,822 C1628.5,826.2 1629.8,830.9 1631.5,834 C1633.2,837.1 1634.0,838.6 1637.4,840.7 C1640.8,842.8 1647.8,845.8 1652,846.7 C1656.2,847.6 1660.1,846.6 1662.6,846 C1665.1,845.4 1663.8,843.7 1667,843 C1670.2,842.3 1677.3,843.0 1682,842 C1686.7,841.0 1689.3,837.7 1695,837 C1700.7,836.3 1711.8,837.0 1716,837.8 C1720.2,838.5 1717.8,838.7 1720,841.5 C1722.2,844.3 1727.7,850.6 1729,854.8 C1730.3,859.0 1728.4,863.0 1727.7,866.7 C1727.0,870.4 1727.0,873.8 1724.8,877 C1722.6,880.2 1717.6,882.3 1714.4,886 C1711.2,889.7 1707.5,896.0 1705.6,899 C1703.7,902.0 1703.4,903.2 1703,904 " fill="none" stroke="#3a6cc4" stroke-width="1.5"/><path d="M1720,841.5 C1722.0,840.5 1727.7,837.4 1732,835.6 C1736.3,833.9 1742.8,833.5 1745.6,831 C1748.3,828.5 1745.8,825.4 1748.5,820.7 C1751.2,816.0 1758.6,807.7 1762,803 C1765.4,798.3 1767.5,796.8 1769,792.6 C1770.5,788.4 1770.4,780.3 1770.7,777.8 " fill="none" stroke="#3a6cc4" stroke-width="1.5"/><path d="M1848,989 C1851.2,990.8 1863.8,998.2 1867,1000 " fill="none" stroke="#3a6cc4" stroke-width="1.5"/><path d="M1837,969.4 C1839.3,969.0 1849.3,969.5 1850.6,966.7 C1851.9,963.9 1842.7,957.9 1845,952.8 C1847.3,947.7 1856.3,940.9 1864.4,936 C1872.5,931.1 1888.7,925.7 1893.6,923.6 " fill="none" stroke="#3a6cc4" stroke-width="1.5"/><path d="M1248,936 C1251.7,937.4 1263.0,942.3 1270,944.4 C1277.0,946.5 1281.8,947.0 1289.7,948.6 C1297.6,950.2 1308.2,950.5 1317.4,954 C1326.6,957.5 1338.1,965.4 1345,969.4 C1351.9,973.4 1351.5,972.7 1359,977.8 C1366.5,982.9 1384.8,996.3 1390,1000 " fill="none" stroke="#3a6cc4" stroke-width="1.5"/><path d="M1337,973.6 C1342.5,978.0 1364.5,995.6 1370,1000 " fill="none" stroke="#3a6cc4" stroke-width="1.5"/><path d="M521.6,525 C525.5,523.2 541.1,515.8 545,514 " fill="none" stroke="#3a6cc4" stroke-width="1.5"/><path d="M323,991.7 C327.6,991.2 342.6,989.7 350.8,988.9 C359.0,988.1 367.5,988.3 372,987 C376.5,985.7 376.0,982.4 378,981 C380.0,979.6 382.0,978.5 384,978.5 C386.0,978.5 388.0,979.8 390,981 C392.0,982.2 392.7,985.3 396,986 C399.3,986.7 404.5,985.3 410,985 C415.5,984.7 425.3,983.2 429,984 C432.7,984.8 426.5,989.0 432,990 C437.5,991.0 450.5,989.7 462,990 C473.5,990.3 491.8,991.2 501,991.7 C510.2,992.2 513.9,991.6 517.4,993 C520.9,994.4 520.7,997.8 522,1000 C523.3,1002.2 524.5,1005.0 525,1006 " fill="none" stroke="#9fd0d8" stroke-width="4.5"/><path d="M323,991.7 C327.6,991.2 342.6,989.7 350.8,988.9 C359.0,988.1 367.5,988.3 372,987 C376.5,985.7 376.0,982.4 378,981 C380.0,979.6 382.0,978.5 384,978.5 C386.0,978.5 388.0,979.8 390,981 C392.0,982.2 392.7,985.3 396,986 C399.3,986.7 404.5,985.3 410,985 C415.5,984.7 425.3,983.2 429,984 C432.7,984.8 426.5,989.0 432,990 C437.5,991.0 450.5,989.7 462,990 C473.5,990.3 491.8,991.2 501,991.7 C510.2,992.2 513.9,991.6 517.4,993 C520.9,994.4 520.7,997.8 522,1000 C523.3,1002.2 524.5,1005.0 525,1006 " fill="none" stroke="#3a72b8" stroke-width="2.2"/><path d="M498,1000 C505,994 515,992 522,1000" fill="none" stroke="#3a72b8" stroke-width="1.5"/><path d="M517.4,132 C516.9,128.0 504.6,126.2 517,125 C529.4,123.8 579.4,123.8 592,125 C604.6,126.2 582.0,128.2 592.5,132 C603.0,135.8 640.4,142.8 655,147.5 C669.6,152.2 667.5,154.6 680,160 C692.5,165.4 716.7,175.6 730,180 C743.3,184.4 748.0,184.1 760,186.7 C772.0,189.3 789.2,192.2 801.7,195.7 C814.2,199.2 828.8,204.2 835,207.5 C841.2,210.8 839.0,212.4 839,215.8 C839.0,219.2 837.3,224.8 835,228 C832.7,231.2 828.2,233.3 825,235 C821.8,236.7 815.8,237.0 815.6,238 C815.4,239.0 823.6,239.7 824,241 C824.4,242.3 819.4,244.1 818,245.7 C816.6,247.3 816.8,250.2 815.6,250.5 C814.4,250.8 811.5,249.0 811,247.8 C810.5,246.7 813.2,244.1 812.8,243.6 C812.4,243.1 809.4,243.4 808.6,245 C807.8,246.6 807.3,250.5 808,253 C808.7,255.5 810.6,256.9 812.8,260 C815.0,263.1 818.7,268.8 821,271.4 C823.3,274.0 825.3,273.5 826.7,275.6 C828.1,277.7 827.9,282.0 829.4,284 C830.9,286.0 832.6,286.8 836,287.4 C839.4,288.0 846.0,286.8 850,287.4 C854.0,288.0 857.7,289.1 860,290.8 C862.3,292.5 863.2,295.5 864,297.8 C864.8,300.1 866.3,300.8 865,304.7 C863.7,308.6 860.2,316.0 856,321 C851.8,326.0 848.0,329.7 839.7,334.8 C831.4,339.9 816.2,346.8 806,351.4 C795.8,356.0 784.6,358.9 778.6,362.6 C772.6,366.3 771.6,367.7 770,373.7 C768.4,379.7 769.3,391.0 769,398.7 C768.7,406.4 772.8,414.4 768,420 C763.2,425.6 751.3,430.3 740,432 C728.7,433.7 710.2,436.0 700,430 C689.8,424.0 682.5,405.0 678.5,396 C674.5,387.0 673.8,381.6 676,376 C678.2,370.4 686.5,366.2 692,362.5 C697.5,358.8 704.3,357.2 709,354 C713.7,350.8 719.5,345.8 720,343 C720.5,340.2 717.0,340.7 712,337.5 C707.0,334.3 698.3,329.8 690,323.7 C681.7,317.6 672.2,308.9 662,301 C651.8,293.1 638.8,282.8 628.6,276 C618.4,269.2 611.3,267.3 601,260 C590.7,252.7 576.3,240.3 567,232 C557.7,223.7 549.5,217.4 545,210 C540.5,202.6 541.8,195.0 540,187.5 C538.2,180.0 537.3,171.4 534,165 C530.7,158.6 522.8,154.5 520,149 C517.2,143.5 517.9,136.0 517.4,132 Z" fill="#a5bfdd"/><path d="M517.4,132 C517.8,134.8 517.2,143.5 520,149 C522.8,154.5 530.7,158.6 534,165 C537.3,171.4 538.2,180.0 540,187.5 C541.8,195.0 540.5,202.6 545,210 C549.5,217.4 557.7,223.7 567,232 C576.3,240.3 590.7,252.7 601,260 C611.3,267.3 618.4,269.2 628.6,276 C638.8,282.8 651.8,293.1 662,301 C672.2,308.9 681.7,317.6 690,323.7 C698.3,329.8 707.0,334.3 712,337.5 C717.0,340.7 720.5,340.2 720,343 C719.5,345.8 713.7,350.8 709,354 C704.3,357.2 697.5,358.8 692,362.5 C686.5,366.2 678.2,370.4 676,376 C673.8,381.6 677.8,388.7 678.5,396 C679.2,403.3 679.8,416.0 680,420 " fill="none" stroke="#62a6b4" stroke-width="3.4"/><path d="M517.4,132 C517.8,134.8 517.2,143.5 520,149 C522.8,154.5 530.7,158.6 534,165 C537.3,171.4 538.2,180.0 540,187.5 C541.8,195.0 540.5,202.6 545,210 C549.5,217.4 557.7,223.7 567,232 C576.3,240.3 590.7,252.7 601,260 C611.3,267.3 618.4,269.2 628.6,276 C638.8,282.8 651.8,293.1 662,301 C672.2,308.9 681.7,317.6 690,323.7 C698.3,329.8 707.0,334.3 712,337.5 C717.0,340.7 720.5,340.2 720,343 C719.5,345.8 713.7,350.8 709,354 C704.3,357.2 697.5,358.8 692,362.5 C686.5,366.2 678.2,370.4 676,376 C673.8,381.6 677.8,388.7 678.5,396 C679.2,403.3 679.8,416.0 680,420 " fill="none" stroke="#2a3a48" stroke-width="0.9" stroke-dasharray="2 1.2"/><path d="M864.7,304 C863.2,306.8 860.2,315.9 856,321 C851.8,326.1 848.0,329.7 839.7,334.8 C831.4,339.9 816.2,346.8 806,351.4 C795.8,356.0 784.6,358.9 778.6,362.6 C772.6,366.3 771.6,367.7 770,373.7 C768.4,379.7 769.3,391.0 769,398.7 C768.7,406.4 768.2,416.4 768,420 " fill="none" stroke="#62a6b4" stroke-width="3.4"/><path d="M864.7,304 C863.2,306.8 860.2,315.9 856,321 C851.8,326.1 848.0,329.7 839.7,334.8 C831.4,339.9 816.2,346.8 806,351.4 C795.8,356.0 784.6,358.9 778.6,362.6 C772.6,366.3 771.6,367.7 770,373.7 C768.4,379.7 769.3,391.0 769,398.7 C768.7,406.4 768.2,416.4 768,420 " fill="none" stroke="#2a3a48" stroke-width="0.9" stroke-dasharray="2 1.2"/><path d="M592.5,132 C602.9,134.6 640.4,142.8 655,147.5 C669.6,152.2 667.5,154.6 680,160 C692.5,165.4 716.7,175.6 730,180 C743.3,184.4 748.0,184.1 760,186.7 C772.0,189.3 789.2,192.2 801.7,195.7 C814.2,199.2 828.8,204.2 835,207.5 C841.2,210.8 839.0,212.4 839,215.8 C839.0,219.2 837.3,224.8 835,228 C832.7,231.2 828.2,233.3 825,235 C821.8,236.7 815.8,237.0 815.6,238 C815.4,239.0 823.6,239.7 824,241 C824.4,242.3 819.4,244.1 818,245.7 C816.6,247.3 816.8,250.2 815.6,250.5 C814.4,250.8 811.5,249.0 811,247.8 C810.5,246.7 813.2,244.1 812.8,243.6 C812.4,243.1 809.4,243.4 808.6,245 C807.8,246.6 807.3,250.5 808,253 C808.7,255.5 810.6,256.9 812.8,260 C815.0,263.1 818.7,268.8 821,271.4 C823.3,274.0 825.3,273.5 826.7,275.6 C828.1,277.7 827.9,282.0 829.4,284 C830.9,286.0 832.6,286.8 836,287.4 C839.4,288.0 846.0,286.8 850,287.4 C854.0,288.0 857.7,289.1 860,290.8 C862.3,292.5 863.2,295.5 864,297.8 C864.8,300.1 864.8,303.6 865,304.7 " fill="none" stroke="#2a3a48" stroke-width="0.9" stroke-dasharray="2.5 1.2 1 1.2"/><path d="M519,133 C521.7,135.8 530.5,143.0 535,150 C539.5,157.0 543.0,165.0 546,175 C549.0,185.0 548.2,200.0 553,210 C557.8,220.0 565.2,226.3 575,235 C584.8,243.7 598.5,253.2 612,262 C625.5,270.8 641.3,279.3 656,288 C670.7,296.7 688.8,307.7 700,314 C711.2,320.3 716.8,321.2 723,326 C729.2,330.8 735.8,338.7 737,343 C738.2,347.3 734.2,348.8 730,352 C725.8,355.2 716.5,358.7 712,362 C707.5,365.3 705.0,368.2 703,372 C701.0,375.8 699.7,380.7 700,385 C700.3,389.3 704.2,395.8 705,398 " fill="none" stroke="#2a3a48" stroke-width="0.9" stroke-dasharray="2.5 1.2 1 1.2"/><path d="M843,288 C843.8,291.7 849.5,304.5 848,310 C846.5,315.5 839.5,316.8 834,321 C828.5,325.2 823.2,329.8 815,335 C806.8,340.2 794.3,345.2 785,352 C775.7,358.8 763.5,368.2 759,376 C754.5,383.8 757.9,394.9 757.7,398.7 " fill="none" stroke="#2a3a48" stroke-width="0.9" stroke-dasharray="2.5 1.2 1 1.2"/><polyline points="864.7,304 1250.5,1000" fill="none" stroke="#6aaab6" stroke-width="2.6"/><polyline points="864.7,304 1250.5,1000" fill="none" stroke="#2a3a48" stroke-width="0.8" stroke-dasharray="2 1.5"/><polygon points="1062.5,451 1219,451 1219,503 1160,503 1160,610 1062.5,610" fill="#5a9670" stroke="#1e2a22" stroke-width="1.2" stroke-dasharray="3 1"/><circle cx="1114" cy="451" r="3.2" fill="#7a8a60" fill-opacity="0.55" stroke="#8a9a70" stroke-width="0.6"/><circle cx="1114" cy="460" r="3.2" fill="#7a8a60" fill-opacity="0.55" stroke="#8a9a70" stroke-width="0.6"/><circle cx="1114" cy="467" r="3.2" fill="#7a8a60" fill-opacity="0.55" stroke="#8a9a70" stroke-width="0.6"/><circle cx="1114" cy="475" r="3.2" fill="#7a8a60" fill-opacity="0.55" stroke="#8a9a70" stroke-width="0.6"/><circle cx="1114" cy="485" r="3.2" fill="#7a8a60" fill-opacity="0.55" stroke="#8a9a70" stroke-width="0.6"/><circle cx="1114" cy="495" r="3.2" fill="#7a8a60" fill-opacity="0.55" stroke="#8a9a70" stroke-width="0.6"/><circle cx="1114" cy="500" r="3.2" fill="#7a8a60" fill-opacity="0.55" stroke="#8a9a70" stroke-width="0.6"/><circle cx="1114" cy="505" r="3.2" fill="#7a8a60" fill-opacity="0.55" stroke="#8a9a70" stroke-width="0.6"/><circle cx="1114" cy="520" r="3.2" fill="#7a8a60" fill-opacity="0.55" stroke="#8a9a70" stroke-width="0.6"/><circle cx="1114" cy="528" r="3.2" fill="#7a8a60" fill-opacity="0.55" stroke="#8a9a70" stroke-width="0.6"/><circle cx="1114" cy="540" r="3.2" fill="#7a8a60" fill-opacity="0.55" stroke="#8a9a70" stroke-width="0.6"/><circle cx="1114" cy="547" r="3.2" fill="#7a8a60" fill-opacity="0.55" stroke="#8a9a70" stroke-width="0.6"/><circle cx="1114" cy="560" r="3.2" fill="#7a8a60" fill-opacity="0.55" stroke="#8a9a70" stroke-width="0.6"/><circle cx="1114" cy="572" r="3.2" fill="#7a8a60" fill-opacity="0.55" stroke="#8a9a70" stroke-width="0.6"/><circle cx="1114" cy="575" r="3.2" fill="#7a8a60" fill-opacity="0.55" stroke="#8a9a70" stroke-width="0.6"/><circle cx="1114" cy="580" r="3.2" fill="#7a8a60" fill-opacity="0.55" stroke="#8a9a70" stroke-width="0.6"/><circle cx="1068" cy="503" r="3.2" fill="#7a8a60" fill-opacity="0.55" stroke="#8a9a70" stroke-width="0.6"/><circle cx="1075" cy="503" r="3.2" fill="#7a8a60" fill-opacity="0.55" stroke="#8a9a70" stroke-width="0.6"/><circle cx="1082" cy="503" r="3.2" fill="#7a8a60" fill-opacity="0.55" stroke="#8a9a70" stroke-width="0.6"/><circle cx="1085" cy="505" r="3.2" fill="#7a8a60" fill-opacity="0.55" stroke="#8a9a70" stroke-width="0.6"/><circle cx="1090" cy="503" r="3.2" fill="#7a8a60" fill-opacity="0.55" stroke="#8a9a70" stroke-width="0.6"/><circle cx="1097" cy="503" r="3.2" fill="#7a8a60" fill-opacity="0.55" stroke="#8a9a70" stroke-width="0.6"/><circle cx="1104" cy="503" r="3.2" fill="#7a8a60" fill-opacity="0.55" stroke="#8a9a70" stroke-width="0.6"/><circle cx="1110" cy="503" r="3.2" fill="#7a8a60" fill-opacity="0.55" stroke="#8a9a70" stroke-width="0.6"/><circle cx="1127" cy="503" r="3.2" fill="#7a8a60" fill-opacity="0.55" stroke="#8a9a70" stroke-width="0.6"/><circle cx="1140" cy="503" r="3.2" fill="#7a8a60" fill-opacity="0.55" stroke="#8a9a70" stroke-width="0.6"/><circle cx="1159" cy="503" r="3.2" fill="#7a8a60" fill-opacity="0.55" stroke="#8a9a70" stroke-width="0.6"/><circle cx="1174" cy="503" r="3.2" fill="#7a8a60" fill-opacity="0.55" stroke="#8a9a70" stroke-width="0.6"/><circle cx="1191" cy="503" r="3.2" fill="#7a8a60" fill-opacity="0.55" stroke="#8a9a70" stroke-width="0.6"/><circle cx="1207" cy="503" r="3.2" fill="#7a8a60" fill-opacity="0.55" stroke="#8a9a70" stroke-width="0.6"/><circle cx="1219" cy="503" r="3.2" fill="#7a8a60" fill-opacity="0.55" stroke="#8a9a70" stroke-width="0.6"/><circle cx="1219" cy="451" r="3.2" fill="#7a8a60" fill-opacity="0.55" stroke="#8a9a70" stroke-width="0.6"/><circle cx="1219" cy="460" r="3.2" fill="#7a8a60" fill-opacity="0.55" stroke="#8a9a70" stroke-width="0.6"/><circle cx="1219" cy="470" r="3.2" fill="#7a8a60" fill-opacity="0.55" stroke="#8a9a70" stroke-width="0.6"/><circle cx="1219" cy="480" r="3.2" fill="#7a8a60" fill-opacity="0.55" stroke="#8a9a70" stroke-width="0.6"/><circle cx="1219" cy="490" r="3.2" fill="#7a8a60" fill-opacity="0.55" stroke="#8a9a70" stroke-width="0.6"/><circle cx="1062" cy="503" r="3.2" fill="#7a8a60" fill-opacity="0.55" stroke="#8a9a70" stroke-width="0.6"/><circle cx="1062" cy="573" r="3.2" fill="#7a8a60" fill-opacity="0.55" stroke="#8a9a70" stroke-width="0.6"/><circle cx="1083" cy="573" r="3.2" fill="#7a8a60" fill-opacity="0.55" stroke="#8a9a70" stroke-width="0.6"/><circle cx="1099" cy="573" r="3.2" fill="#7a8a60" fill-opacity="0.55" stroke="#8a9a70" stroke-width="0.6"/><circle cx="1112" cy="575" r="3.2" fill="#7a8a60" fill-opacity="0.55" stroke="#8a9a70" stroke-width="0.6"/><circle cx="1138" cy="573" r="3.2" fill="#7a8a60" fill-opacity="0.55" stroke="#8a9a70" stroke-width="0.6"/><circle cx="1160" cy="573" r="3.2" fill="#7a8a60" fill-opacity="0.55" stroke="#8a9a70" stroke-width="0.6"/><circle cx="1062" cy="610" r="3.2" fill="#7a8a60" fill-opacity="0.55" stroke="#8a9a70" stroke-width="0.6"/><circle cx="1114" cy="610" r="3.2" fill="#7a8a60" fill-opacity="0.55" stroke="#8a9a70" stroke-width="0.6"/><circle cx="1160" cy="610" r="3.2" fill="#7a8a60" fill-opacity="0.55" stroke="#8a9a70" stroke-width="0.6"/><circle cx="1062" cy="451" r="3.2" fill="#7a8a60" fill-opacity="0.55" stroke="#8a9a70" stroke-width="0.6"/><polygon points="324,707 403.5,707 403.5,776.4 324,776.4" fill="#d8a060" fill-opacity="0.12" stroke="#a88e74" stroke-width="3.5"/><polygon points="324,707 403.5,707 403.5,776.4 324,776.4" fill="none" stroke="#333" stroke-width="0.8" stroke-dasharray="4 2 1 2"/><polygon points="1576,852 1684,852 1683,922 1628,922 1628,887.5 1576,887.5" fill="#fdf5d2" fill-opacity="0.9" stroke="#e4c46c" stroke-width="4"/><polygon points="1576,852 1684,852 1683,922 1628,922 1628,887.5 1576,887.5" fill="none" stroke="#333" stroke-width="0.8" stroke-dasharray="4 2 1 2"/><rect x="1677" y="851" width="7" height="9" rx="1.5" fill="#999" stroke="#333" stroke-width="0.8"/><path d="M1596,873 L1640,858 M1613,866 H1650 M1617,862 V870 M1630,862 V870 M1684,862 L1720,845" stroke="#e2dba8" stroke-width="1.5" fill="none"/><polyline points="323,751.4 723,772.8 878.6,782 1123,794.4 1212,798.6 1523,862.5 1920,959.7" fill="none" stroke="#5e5838" stroke-width="1.4"/><polyline points="323,751.4 723,772.8 878.6,782 1123,794.4 1212,798.6 1523,862.5 1920,959.7" fill="none" stroke="#4e4628" stroke-width="3.4" stroke-dasharray="1.1 5.9"/><text x="469.4" y="264.5" font-family="Liberation Sans" font-size="11.5" fill="#2a78c8" text-anchor="middle" font-weight="normal" stroke="#fff" stroke-width="2.5" paint-order="stroke" stroke-linejoin="round">St. Michael</text><text x="706" y="262" font-family="Liberation Sans" font-size="10" fill="#1a52a8" text-anchor="middle" font-weight="normal" >East Devils Lk</text><text x="660.5" y="331" font-family="Liberation Sans" font-size="10" fill="#1a52a8" text-anchor="middle" font-weight="normal" >East Devils Lk</text><text x="1654" y="258" font-family="Liberation Sans" font-size="10" fill="#1a52a8" text-anchor="middle" font-weight="normal" >Swan Lk</text><text x="1896" y="175" font-family="Liberation Sans" font-size="10" fill="#1a52a8" text-anchor="start" font-weight="normal" >Coon</text><text x="1664.7" y="468.4" font-family="Liberation Sans" font-size="10" fill="#1a52a8" text-anchor="middle" font-weight="normal" >Stump Lk</text><text x="1879" y="528.5" font-family="Liberation Sans" font-size="10" fill="#1a52a8" text-anchor="start" font-weight="normal" >Stump Lk</text><text x="988" y="542" font-family="Liberation Sans" font-size="13.65" fill="#111" text-anchor="start" font-weight="normal" stroke="#fff" stroke-width="2.5" paint-order="stroke" stroke-linejoin="round">Spirit Lake Off-Reservation Trust Land(3935)</text><text x="677.5" y="526" font-family="Liberation Sans" font-size="11" fill="#3a9a3a" text-anchor="middle" font-weight="normal" stroke="#fff" stroke-width="2.5" paint-order="stroke" stroke-linejoin="round">T00100B</text><text x="696.5" y="652.5" font-family="Liberation Sans" font-size="11" fill="#2a78c8" text-anchor="middle" font-weight="normal" stroke="#fff" stroke-width="2.5" paint-order="stroke" stroke-linejoin="round">T00100</text><text x="701.5" y="720" font-family="Liberation Sans" font-size="11" fill="#2a78c8" text-anchor="middle" font-weight="normal" stroke="#fff" stroke-width="2.5" paint-order="stroke" stroke-linejoin="round">Wood Lake</text><text x="372.5" y="716.5" font-family="Liberation Sans" font-size="10" fill="#1a52a8" text-anchor="middle" font-weight="normal" >Shin Bone Lk</text><text x="323" y="747" font-family="Liberation Sans" font-size="14" fill="#b08a18" text-anchor="start" font-weight="normal" stroke="#fff" stroke-width="2.5" paint-order="stroke" stroke-linejoin="round">arwick city</text><text x="909" y="728" font-family="Liberation Sans" font-size="10" fill="#1a52a8" text-anchor="middle" font-weight="normal" >Black Slough</text><text x="981.5" y="731" font-family="Liberation Sans" font-size="10" fill="#1a52a8" text-anchor="middle" font-weight="normal" >Black Slough</text><text x="785.5" y="892" font-family="Liberation Sans" font-size="11" fill="#3a9a3a" text-anchor="middle" font-weight="normal" stroke="#fff" stroke-width="2.5" paint-order="stroke" stroke-linejoin="round">T00100A</text><text x="779.5" y="946" font-family="Liberation Sans" font-size="10" fill="#1a52a8" text-anchor="middle" font-weight="normal" >Battle Lk</text><text x="1637" y="886" font-family="Liberation Sans" font-size="13.5" fill="#a87c10" text-anchor="middle" font-weight="normal" stroke="#fff" stroke-width="2.5" paint-order="stroke" stroke-linejoin="round">Tolna city</text></svg>
<div class="a" style="left:322px;top:131px;width:1598px;height:1px;background:#b0b0b0"></div>
<div class="a" style="left:322px;top:131px;width:1px;height:870px;background:#b0b0b0"></div>
<div class="a" style="left:323px;top:132px;width:1595px;height:1px;background:#fdfdfd"></div>
<div class="a" style="left:323px;top:132px;width:1px;height:868px;background:#fdfdfd"></div>
<div class="a" style="left:1918px;top:131px;width:2px;height:870px;background:#b8b8b8"></div>
<div class="grip" style="left:317px;top:546px;height:39px"></div>
<div class="a" style="left:48px;top:131px;width:1px;height:870px;background:#d8d8d8"></div>
<div class="a" style="left:0px;top:1000px;width:49px;height:1px;background:#d8d8d8"></div>
<div class="hgrip" style="left:11px;top:134px;width:28px"></div>
<div class="hgrip" style="left:11px;top:562px;width:28px"></div>
<div class="a" style="left:0px;top:557px;width:48px;height:1px;background:#d0d0d0;border-bottom:1px solid #fff"></div>
<svg style="left:12px;top:146px;" width="26" height="26" viewBox="0 0 26 26"><path d="M2 4L8 18L16 4L24 4" fill="none" stroke="#2e4a6e" stroke-width="1.6"/><circle cx="2.5" cy="4" r="2" fill="#fff" stroke="#2e4a6e"/><circle cx="16" cy="4" r="2" fill="#fff" stroke="#2e4a6e"/><circle cx="23" cy="4" r="2" fill="#fff" stroke="#2e4a6e"/><circle cx="8" cy="18" r="2" fill="#fff" stroke="#2e4a6e"/><rect x="15" y="14" width="10" height="10" rx="1.5" fill="#5a9a5a"/><path d="M20 16V22M17 19H23" stroke="#fff" stroke-width="1.8"/></svg>
<svg style="left:12px;top:184px;" width="26" height="26" viewBox="0 0 26 26"><rect x="0" y="0" width="20" height="20" fill="#6a96c8"/><rect x="0" y="0" width="6.6" height="6.6" fill="#2a4a72"/><rect x="13.3" y="0" width="6.6" height="6.6" fill="#2a4a72"/><rect x="6.6" y="6.6" width="6.6" height="6.6" fill="#2a4a72"/><rect x="0" y="13.3" width="6.6" height="6.6" fill="#2a4a72"/><rect x="15" y="14" width="10" height="10" rx="1.5" fill="#5a9a5a"/><path d="M20 16V22M17 19H23" stroke="#fff" stroke-width="1.8"/></svg>
<svg style="left:12px;top:222px;" width="26" height="26" viewBox="0 0 26 26"><path d="M3 3C6 0 14 0 17 3C20 6 19 12 17 13L16 20H13L12 14L9 19L6 18L7 12C3 11 1 6 3 3Z" fill="#5a88c0" stroke="#2e4a6e" stroke-width="1.2"/><rect x="15" y="14" width="10" height="10" rx="1.5" fill="#5a9a5a"/><path d="M20 16V22M17 19H23" stroke="#fff" stroke-width="1.8"/></svg>
<svg style="left:12px;top:260px;" width="26" height="26" viewBox="0 0 26 26"><path d="M1 23C4 14 10 5 22 1C20 8 14 16 5 19Z" fill="#6a96c8" stroke="#2e4a6e" stroke-width="1.2"/><path d="M2 22L18 5" stroke="#2e4a6e" stroke-width="0.8"/><rect x="15" y="14" width="10" height="10" rx="1.5" fill="#5a9a5a"/><path d="M20 16V22M17 19H23" stroke="#fff" stroke-width="1.8"/></svg>
<svg style="left:12px;top:298px;" width="26" height="26" viewBox="0 0 26 26"><path d="M1 1C10 2 18 6 22 13C16 13 8 16 2 21C5 14 5 7 1 1Z" fill="#5a88c0" stroke="#2e4a6e" stroke-width="1.2"/><path d="M7 3C9 8 9 14 6 19M13 5C15 9 15 12 13 15" stroke="#2e4a6e" fill="none"/><rect x="15" y="14" width="10" height="10" rx="1.5" fill="#5a9a5a"/><path d="M20 16V22M17 19H23" stroke="#fff" stroke-width="1.8"/></svg>
<svg style="left:12px;top:336px;" width="26" height="26" viewBox="0 0 26 26"><rect x="1" y="3" width="19" height="15" rx="5" fill="#6a96c8" stroke="#2e4a6e" stroke-width="1.8"/><rect x="15" y="14" width="10" height="10" rx="1.5" fill="#5a9a5a"/><path d="M20 16V22M17 19H23" stroke="#fff" stroke-width="1.8"/></svg>
<svg style="left:12px;top:374px;" width="26" height="26" viewBox="0 0 26 26"><rect x="1" y="2" width="19" height="17" rx="6" fill="#6a96c8" stroke="#2e4a6e" stroke-width="1.5"/><rect x="5" y="3" width="5" height="5" fill="#2a4a72"/><rect x="10" y="8" width="5" height="5" fill="#2a4a72"/><rect x="5" y="13" width="5" height="5" fill="#2a4a72"/><rect x="15" y="14" width="10" height="10" rx="1.5" fill="#5a9a5a"/><path d="M20 16V22M17 19H23" stroke="#fff" stroke-width="1.8"/></svg>
<svg style="left:12px;top:412px;" width="26" height="26" viewBox="0 0 26 26"><circle cx="11" cy="11" r="10" fill="#7aa6d6" stroke="#4a78b0"/><path d="M5 6L9 5L10 9L6 12Z M12 4L16 6L15 10L12 9Z M10 13L15 13L13 18L10 17Z" fill="#2a4a72"/><rect x="15" y="14" width="10" height="10" rx="1.5" fill="#5a9a5a"/><path d="M20 16V22M17 19H23" stroke="#fff" stroke-width="1.8"/></svg>
<svg style="left:12px;top:450px;" width="26" height="26" viewBox="0 0 26 26"><ellipse cx="11" cy="11" rx="11" ry="9" fill="#2a4a72"/><path d="M1 8H21M1 14H21" stroke="#c8d8f0" stroke-width="1.5"/><ellipse cx="11" cy="11" rx="4" ry="9" fill="none" stroke="#c8d8f0" stroke-width="1.5"/><rect x="15" y="14" width="10" height="10" rx="1.5" fill="#5a9a5a"/><path d="M20 16V22M17 19H23" stroke="#fff" stroke-width="1.8"/></svg>
<svg style="left:12px;top:488px;" width="26" height="26" viewBox="0 0 26 26"><circle cx="11" cy="11" r="10" fill="#dce8f6" stroke="#5a88c0" stroke-width="1.2"/><path d="M1 8H21M1 14H21M11 1V21" stroke="#5a88c0" stroke-width="0.8"/><path d="M5 6L9 17L12 6L17 6" fill="none" stroke="#222" stroke-width="1.3"/><circle cx="5" cy="6" r="1.5" fill="#fff" stroke="#222"/><circle cx="12" cy="6" r="1.5" fill="#fff" stroke="#222"/><circle cx="17" cy="6" r="1.5" fill="#fff" stroke="#222"/><rect x="15" y="14" width="10" height="10" rx="1.5" fill="#5a9a5a"/><path d="M20 16V22M17 19H23" stroke="#fff" stroke-width="1.8"/></svg>
<svg style="left:6px;top:526px;" width="42" height="26" viewBox="0 0 42 26"><path d="M2 3L9 20L16 3L22 3" fill="none" stroke="#999" stroke-width="1.5"/><circle cx="2.5" cy="3" r="2" fill="#fff" stroke="#999"/><circle cx="16" cy="3" r="2" fill="#fff" stroke="#999"/><circle cx="22" cy="3" r="2" fill="#fff" stroke="#999"/><circle cx="9" cy="20" r="2" fill="#fff" stroke="#999"/><rect x="14" y="16" width="8" height="8" fill="#ddd" stroke="#bbb"/><path d="M32 12H40L36 16Z" fill="#999"/></svg>
<svg style="left:12px;top:574px;" width="24" height="24" viewBox="0 0 24 24"><path d="M12 0V24M0 13H24" stroke="#333" stroke-width="1"/><circle cx="12" cy="13" r="4.5" fill="none" stroke="#c82828" stroke-width="1.3" stroke-dasharray="3 2"/></svg>
<svg style="left:11px;top:611px;" width="27" height="27" viewBox="0 0 27 27"><path d="M1 2L7 20" stroke="#3a6ab0" stroke-width="1.2"/><circle cx="7" cy="20" r="1.7" fill="#fff" stroke="#3a6ab0"/><path d="M10 5C14 2 22 2 25 5C26 10 24 14 20 16C18 19 14 19 12 16C10 12 8 9 10 5Z" fill="#eee" stroke="#333" stroke-width="1.3"/><path d="M11 20L16 6H21" fill="none" stroke="#e02020" stroke-width="1.5"/><circle cx="16" cy="6" r="1.5" fill="#fff" stroke="#e02020"/><circle cx="21" cy="6" r="1.5" fill="#fff" stroke="#e02020"/><circle cx="18" cy="10" r="1.5" fill="#fff" stroke="#e02020"/><circle cx="11" cy="20" r="1.5" fill="#fff" stroke="#e02020"/><circle cx="17" cy="17" r="1.3" fill="#fff" stroke="#3a6ab0"/><circle cx="20" cy="14" r="1.3" fill="#fff" stroke="#3a6ab0"/></svg>
<div class="a" style="left:316px;top:131px;width:6px;height:870px;background:#f0f0f0"></div>
<div class="grip" style="left:317px;top:546px;height:39px"></div>
<div class="a" style="left:49px;top:131px;width:1px;height:870px;background:#e4e4e4"></div>
<div class="a" style="left:50px;top:132px;width:266px;height:24px;background:#f0f0f0;border:1px solid #dcdcdc"></div>
<div class="t" style="left:53px;top:138px;font-size:11px;color:#111;">Layers</div>
<svg style="left:285px;top:137px;" width="12" height="12" viewBox="0 0 12 12"><rect x="0.5" y="0.5" width="11" height="11" rx="2" fill="none" stroke="#777"/><rect x="4.5" y="2.5" width="5" height="5" fill="none" stroke="#777"/><rect x="2.5" y="4.5" width="5" height="5" fill="#f0f0f0" stroke="#777"/></svg>
<svg style="left:302px;top:137px;" width="12" height="12" viewBox="0 0 12 12"><rect x="0.5" y="0.5" width="11" height="11" rx="2" fill="none" stroke="#777"/><path d="M3 3L9 9M9 3L3 9" stroke="#666" stroke-width="1.8"/></svg>
<svg style="left:61px;top:160px;" width="16" height="17" viewBox="0 0 16 17"><rect x="1" y="5" width="9" height="11" fill="#f4f4f4" stroke="#888"/><rect x="4" y="3" width="9" height="11" fill="#f4f4f4" stroke="#888"/><path d="M8 11V3C8 0 11 0 11 3V9" fill="none" stroke="#3a6ab0" stroke-width="1.3"/></svg>
<svg style="left:95px;top:159px;" width="24" height="20" viewBox="0 0 24 20"><path d="M1 9C5 3 15 3 21 9C15 15 5 15 1 9Z" fill="#fff" stroke="#999"/><circle cx="10" cy="9" r="4" fill="#5a8ed0"/><circle cx="10" cy="9" r="1.6" fill="#123"/><path d="M17 17H23L20 20Z" fill="#000"/></svg>
<svg style="left:132px;top:157px;" width="22" height="23" viewBox="0 0 22 23"><path d="M1 2C1 0 21 0 21 2L13 12V21L9 22V12Z" fill="#3aa048"/><ellipse cx="11" cy="2.5" rx="10" ry="2" fill="#7ad07a"/></svg>
<svg style="left:169px;top:158px;" width="23" height="20" viewBox="0 0 23 20"><rect x="0.5" y="0.5" width="21" height="19" fill="#fff" stroke="#2d62c8"/><rect x="1" y="1" width="20" height="2" fill="#2d62c8"/><path d="M4 5V15H8M4 10H8" fill="none" stroke="#888"/><rect x="8" y="8" width="4" height="4" fill="#f39a1a"/><rect x="8" y="13" width="4" height="4" fill="#f39a1a"/><path d="M14 4H17V12H20L15.5 18L11 12H14Z" fill="#e82020"/></svg>
<svg style="left:206px;top:158px;" width="23" height="20" viewBox="0 0 23 20"><rect x="0.5" y="0.5" width="21" height="19" fill="#fff" stroke="#2d62c8"/><rect x="1" y="1" width="20" height="2" fill="#2d62c8"/><path d="M4 5V15H8M4 10H8" fill="none" stroke="#888"/><rect x="8" y="8" width="4" height="4" fill="#f39a1a"/><rect x="8" y="13" width="4" height="4" fill="#f39a1a"/><path d="M14 18H17V10H20L15.5 4L11 10H14Z" fill="#e82020"/></svg>
<svg style="left:243px;top:159px;" width="24" height="22" viewBox="0 0 24 22"><rect x="0.5" y="0.5" width="19" height="19" fill="#eee" stroke="#888"/><rect x="14" y="13" width="10" height="9" rx="2.5" fill="#e23b3b"/><path d="M16 17.5H22" stroke="#fff" stroke-width="2"/></svg>
<div class="a" style="left:50px;top:190px;width:266px;height:373px;background:#fff;border:1px solid #aaa"></div>
<div class="a" style="left:299px;top:192px;width:15px;height:369px;background:#d2d2d2;border-left:1px solid #b0b0b0;border-right:1px solid #b0b0b0"></div>
<div class="a" style="left:299px;top:192px;width:15px;height:15px;background:linear-gradient(#fafafa,#e6e6e6);border:1px solid #a8a8a8;border-radius:3px 3px 0 0"></div>
<svg style="left:302px;top:197px;" width="9" height="5" viewBox="0 0 9 5"><path d="M0 5L4.5 0L9 5Z" fill="#000"/></svg>
<div class="a" style="left:299px;top:295px;width:15px;height:129px;background:linear-gradient(to right,#fdfdfd,#ececec);border:1px solid #a8a8a8"></div>
<div class="a" style="left:303px;top:357px;width:7px;height:1px;background:#aaa"></div>
<div class="a" style="left:303px;top:359px;width:7px;height:1px;background:#aaa"></div>
<div class="a" style="left:303px;top:361px;width:7px;height:1px;background:#aaa"></div>
<div class="a" style="left:299px;top:546px;width:15px;height:15px;background:linear-gradient(#fafafa,#e6e6e6);border:1px solid #a8a8a8;border-radius:0 0 3px 3px"></div>
<svg style="left:302px;top:551px;" width="9" height="5" viewBox="0 0 9 5"><path d="M0 0L4.5 5L9 0Z" fill="#000"/></svg>
<div class="dv" style="left:61px;top:192px;height:370px"></div>
<div class="dv" style="left:81px;top:192px;height:280px"></div>
<div class="dv" style="left:101px;top:192px;height:136px"></div>
<div class="dv" style="left:101px;top:352px;height:104px"></div>
<div class="dv" style="left:81px;top:540px;height:22px"></div>
<div class="dv" style="left:101px;top:540px;height:22px"></div>
<div class="dh" style="left:102px;top:200px;width:10px"></div>
<div class="cb k" style="left:114px;top:194px;border-color:#8c8c8c"></div>
<svg style="left:133px;top:193px;" width="16" height="13" viewBox="0 0 16 13"><path d="M4 3L1 6.5L4 10" fill="none" stroke="#000" stroke-width="1.6"/></svg>
<div class="t" style="left:154px;top:195px;font-size:11px;color:#000;">Deleted Edge</div>
<div class="dh" style="left:82px;top:216px;width:12px"></div>
<div class="exp" style="left:77px;top:211px"></div>
<div class="cb k" style="left:94px;top:210px;border-color:#8c8c8c"></div>
<svg style="left:113px;top:208px;" width="17" height="16" viewBox="0 0 17 16"><path d="M1 3L6 14L11 3L15 1" fill="none" stroke="#888" stroke-width="0.9"/><circle cx="15" cy="1.5" r="1.2" fill="#fff" stroke="#888" stroke-width="0.7"/></svg>
<div class="t" style="left:135px;top:211px;font-size:11px;color:#000;font-weight:bold;letter-spacing:0.65px">edges_38063</div>
<div class="dh" style="left:102px;top:232px;width:10px"></div>
<div class="cb k" style="left:114px;top:226px;border-color:#8c8c8c"></div>
<svg style="left:133px;top:225px;" width="16" height="13" viewBox="0 0 16 13"><path d="M0 5.5H16M0 7.5H16" stroke="#8a8060" stroke-width="1"/><path d="M4 4V9M8 4V9M12 4V9" stroke="#6a6040" stroke-width="1"/></svg>
<div class="t" style="left:154px;top:227px;font-size:11px;color:#000;">Railroads (scale &lt; 21,000)</div>
<div class="dh" style="left:102px;top:248px;width:10px"></div>
<div class="cb k" style="left:114px;top:242px;border-color:#8c8c8c"></div>
<svg style="left:133px;top:241px;" width="16" height="13" viewBox="0 0 16 13"><path d="M0 6.5H16" stroke="#6a6040" stroke-width="1"/><path d="M3 4.5V8.5M8 4.5V8.5M13 4.5V8.5" stroke="#6a6040" stroke-width="1"/></svg>
<div class="t" style="left:154px;top:243px;font-size:11px;color:#000;">Railroads (scale &gt; 21,000)</div>
<div class="dh" style="left:102px;top:264px;width:10px"></div>
<div class="cb k" style="left:114px;top:258px;border-color:#8c8c8c"></div>
<svg style="left:133px;top:257px;" width="16" height="13" viewBox="0 0 16 13"><path d="M0 6.5H16" stroke="#eae2a8" stroke-width="3"/><path d="M0 5H16M0 8H16" stroke="#d8cc88" stroke-width="0.6"/></svg>
<div class="t" style="left:154px;top:259px;font-size:11px;color:#000;">Roads (scale &lt; 21,000)</div>
<div class="dh" style="left:102px;top:280px;width:10px"></div>
<div class="cb k" style="left:114px;top:274px;border-color:#8c8c8c"></div>
<svg style="left:133px;top:273px;" width="16" height="13" viewBox="0 0 16 13"><path d="M0 6.5H16" stroke="#eee8c4" stroke-width="2.6"/></svg>
<div class="t" style="left:154px;top:275px;font-size:11px;color:#000;">Roads (scale &gt; 21,000)</div>
<div class="dh" style="left:102px;top:296px;width:10px"></div>
<div class="cb k" style="left:114px;top:290px;border-color:#8c8c8c"></div>
<svg style="left:133px;top:289px;" width="16" height="13" viewBox="0 0 16 13"><path d="M0 6.5H16" stroke="#3a6ec8" stroke-width="1.2"/></svg>
<div class="t" style="left:154px;top:291px;font-size:11px;color:#000;">Linear Water</div>
<div class="dh" style="left:102px;top:312px;width:10px"></div>
<div class="cb k" style="left:114px;top:306px;border-color:#8c8c8c"></div>
<svg style="left:133px;top:305px;" width="16" height="13" viewBox="0 0 16 13"><path d="M0 6.5H16" stroke="#444" stroke-width="1" stroke-dasharray="2 2.5"/></svg>
<div class="t" style="left:154px;top:307px;font-size:11px;color:#000;">Non-visible boundaries</div>
<div class="dh" style="left:102px;top:328px;width:10px"></div>
<div class="cb k" style="left:114px;top:322px;border-color:#8c8c8c"></div>
<svg style="left:133px;top:321px;" width="16" height="13" viewBox="0 0 16 13"><path d="M4 3L1 6.5L4 10" fill="none" stroke="#000" stroke-width="1.6"/></svg>
<div class="t" style="left:154px;top:323px;font-size:11px;color:#000;">Deleted Edge</div>
<div class="dh" style="left:82px;top:344px;width:12px"></div>
<div class="exp" style="left:77px;top:339px"></div>
<div class="cb k" style="left:94px;top:338px;border-color:#8c8c8c"></div>
<svg style="left:113px;top:336px;" width="17" height="16" viewBox="0 0 17 16"><path d="M1 3L6 14L11 3L15 1" fill="none" stroke="#888" stroke-width="0.9"/><circle cx="15" cy="1.5" r="1.2" fill="#fff" stroke="#888" stroke-width="0.7"/></svg>
<div class="t" style="left:135px;top:339px;font-size:11px;color:#000;font-weight:bold;letter-spacing:0.65px">edges_38027</div>
<div class="dh" style="left:102px;top:360px;width:10px"></div>
<div class="cb k" style="left:114px;top:354px;border-color:#8c8c8c"></div>
<svg style="left:133px;top:353px;" width="16" height="13" viewBox="0 0 16 13"><path d="M0 5.5H16M0 7.5H16" stroke="#8a8060" stroke-width="1"/><path d="M4 4V9M8 4V9M12 4V9" stroke="#6a6040" stroke-width="1"/></svg>
<div class="t" style="left:154px;top:355px;font-size:11px;color:#000;">Railroads (scale &lt; 21,000)</div>
<div class="dh" style="left:102px;top:376px;width:10px"></div>
<div class="cb k" style="left:114px;top:370px;border-color:#8c8c8c"></div>
<svg style="left:133px;top:369px;" width="16" height="13" viewBox="0 0 16 13"><path d="M0 6.5H16" stroke="#6a6040" stroke-width="1"/><path d="M3 4.5V8.5M8 4.5V8.5M13 4.5V8.5" stroke="#6a6040" stroke-width="1"/></svg>
<div class="t" style="left:154px;top:371px;font-size:11px;color:#000;">Railroads (scale &gt; 21,000)</div>
<div class="dh" style="left:102px;top:392px;width:10px"></div>
<div class="cb k" style="left:114px;top:386px;border-color:#8c8c8c"></div>
<svg style="left:133px;top:385px;" width="16" height="13" viewBox="0 0 16 13"><path d="M0 6.5H16" stroke="#eae2a8" stroke-width="3"/><path d="M0 5H16M0 8H16" stroke="#d8cc88" stroke-width="0.6"/></svg>
<div class="t" style="left:154px;top:387px;font-size:11px;color:#000;">Roads (scale &lt; 21,000)</div>
<div class="dh" style="left:102px;top:408px;width:10px"></div>
<div class="cb k" style="left:114px;top:402px;border-color:#8c8c8c"></div>
<svg style="left:133px;top:401px;" width="16" height="13" viewBox="0 0 16 13"><path d="M0 6.5H16" stroke="#eee8c4" stroke-width="2.6"/></svg>
<div class="t" style="left:154px;top:403px;font-size:11px;color:#000;">Roads (scale &gt; 21,000)</div>
<div class="dh" style="left:102px;top:424px;width:10px"></div>
<div class="cb k" style="left:114px;top:418px;border-color:#8c8c8c"></div>
<svg style="left:133px;top:417px;" width="16" height="13" viewBox="0 0 16 13"><path d="M0 6.5H16" stroke="#3a6ec8" stroke-width="1.2"/></svg>
<div class="t" style="left:154px;top:419px;font-size:11px;color:#000;">Linear Water</div>
<div class="dh" style="left:102px;top:440px;width:10px"></div>
<div class="cb k" style="left:114px;top:434px;border-color:#8c8c8c"></div>
<svg style="left:133px;top:433px;" width="16" height="13" viewBox="0 0 16 13"><path d="M0 6.5H16" stroke="#444" stroke-width="1" stroke-dasharray="2 2.5"/></svg>
<div class="t" style="left:154px;top:435px;font-size:11px;color:#000;">Non-visible boundaries</div>
<div class="dh" style="left:102px;top:456px;width:10px"></div>
<div class="cb k" style="left:114px;top:450px;border-color:#8c8c8c"></div>
<svg style="left:133px;top:449px;" width="16" height="13" viewBox="0 0 16 13"><path d="M4 3L1 6.5L4 10" fill="none" stroke="#000" stroke-width="1.6"/></svg>
<div class="t" style="left:154px;top:451px;font-size:11px;color:#000;">Deleted Edge</div>
<div class="dh" style="left:62px;top:472px;width:12px"></div>
<div class="exp p" style="left:57px;top:467px"></div>
<div class="cb" style="left:74px;top:466px;border-color:#8c8c8c"></div>
<svg style="left:92px;top:464px;" width="15" height="16" viewBox="0 0 15 16"><rect x="1" y="4" width="9" height="10" fill="#f4f4f4" stroke="#888"/><rect x="4" y="2" width="9" height="10" fill="#f4f4f4" stroke="#888"/><path d="M8 9V2C8 -1 11 -1 11 2V7" fill="none" stroke="#3a6ab0" stroke-width="1.2"/></svg>
<div class="t" style="left:115px;top:467px;font-size:11px;color:#000;">2010_Census_Tract</div>
<div class="dh" style="left:62px;top:488px;width:12px"></div>
<div class="exp p" style="left:57px;top:483px"></div>
<div class="cb" style="left:74px;top:482px;border-color:#8c8c8c"></div>
<svg style="left:92px;top:480px;" width="15" height="16" viewBox="0 0 15 16"><rect x="1" y="4" width="9" height="10" fill="#f4f4f4" stroke="#888"/><rect x="4" y="2" width="9" height="10" fill="#f4f4f4" stroke="#888"/><path d="M8 9V2C8 -1 11 -1 11 2V7" fill="none" stroke="#3a6ab0" stroke-width="1.2"/></svg>
<div class="t" style="left:115px;top:483px;font-size:11px;color:#000;">2010_Census_Block</div>
<div class="dh" style="left:62px;top:504px;width:12px"></div>
<div class="exp p" style="left:57px;top:499px"></div>
<div class="cb k" style="left:74px;top:498px;border-color:#8c8c8c"></div>
<svg style="left:92px;top:496px;" width="15" height="16" viewBox="0 0 15 16"><rect x="1" y="4" width="9" height="10" fill="#f4f4f4" stroke="#888"/><rect x="4" y="2" width="9" height="10" fill="#f4f4f4" stroke="#888"/><path d="M8 9V2C8 -1 11 -1 11 2V7" fill="none" stroke="#3a6ab0" stroke-width="1.2"/></svg>
<div class="t" style="left:115px;top:499px;font-size:11px;color:#000;">changes</div>
<div class="dh" style="left:62px;top:520px;width:12px"></div>
<div class="exp" style="left:57px;top:515px"></div>
<div class="cb k" style="left:74px;top:514px;border-color:#8c8c8c"></div>
<svg style="left:92px;top:512px;" width="15" height="16" viewBox="0 0 15 16"><rect x="1" y="4" width="9" height="10" fill="#f4f4f4" stroke="#888"/><rect x="4" y="2" width="9" height="10" fill="#f4f4f4" stroke="#888"/><path d="M8 9V2C8 -1 11 -1 11 2V7" fill="none" stroke="#3a6ab0" stroke-width="1.2"/></svg>
<div class="t" style="left:115px;top:515px;font-size:11px;color:#000;">faces</div>
<div class="dh" style="left:82px;top:536px;width:12px"></div>
<div class="exp" style="left:77px;top:531px"></div>
<div class="cb k" style="left:94px;top:530px;border-color:#8c8c8c"></div>
<svg style="left:113px;top:528px;" width="17" height="16" viewBox="0 0 17 16"><path d="M2 3C6 0 14 1 15 5C16 9 12 12 7 13C3 13 0 8 2 3Z" fill="#ddd" stroke="#999" stroke-width="0.8"/><path d="M4 14L13 2" stroke="#e87020" stroke-width="3"/></svg>
<div class="t" style="left:135px;top:531px;font-size:11px;color:#000;font-weight:bold;text-decoration:underline;letter-spacing:0.63px">faces_38005</div>
<div class="dh" style="left:102px;top:552px;width:10px"></div>
<div class="cb k" style="left:114px;top:546px;border-color:#8c8c8c"></div>
<svg style="left:133px;top:545px;" width="16" height="13" viewBox="0 0 16 13"></svg>
<div class="t" style="left:154px;top:547px;font-size:11px;color:#000;">zoomed out (not outlined)</div>
<div class="hgrip" style="left:161px;top:565px;width:40px;height:3px"></div>
<div class="a" style="left:50px;top:571px;width:266px;height:24px;background:#f0f0f0;border:1px solid #dcdcdc"></div>
<div class="t" style="left:53px;top:577px;font-size:11px;color:#111;">Identify Results</div>
<svg style="left:285px;top:576px;" width="12" height="12" viewBox="0 0 12 12"><rect x="0.5" y="0.5" width="11" height="11" rx="2" fill="none" stroke="#777"/><rect x="4.5" y="2.5" width="5" height="5" fill="none" stroke="#777"/><rect x="2.5" y="4.5" width="5" height="5" fill="#f0f0f0" stroke="#777"/></svg>
<svg style="left:302px;top:576px;" width="12" height="12" viewBox="0 0 12 12"><rect x="0.5" y="0.5" width="11" height="11" rx="2" fill="none" stroke="#777"/><path d="M3 3L9 9M9 3L3 9" stroke="#666" stroke-width="1.8"/></svg>
<svg style="left:57px;top:597px;" width="24" height="22" viewBox="0 0 24 22"><rect x="0.5" y="0.5" width="22" height="20" fill="#fff" stroke="#2d62c8"/><rect x="1" y="1" width="21" height="2" fill="#2d62c8"/><path d="M4 5V16H8M4 10H8" fill="none" stroke="#888"/><rect x="8" y="8" width="4" height="4" fill="#f39a1a"/><rect x="8" y="13" width="4" height="4" fill="#f39a1a"/><path d="M14 4H17V12H20L15.5 18L11 12H14Z" fill="#e82020"/></svg>
<svg style="left:94px;top:597px;" width="24" height="22" viewBox="0 0 24 22"><rect x="0.5" y="0.5" width="22" height="20" fill="#fff" stroke="#2d62c8"/><rect x="1" y="1" width="21" height="2" fill="#2d62c8"/><path d="M4 5V16H8M4 10H8" fill="none" stroke="#888"/><rect x="8" y="8" width="4" height="4" fill="#f39a1a"/><rect x="8" y="13" width="4" height="4" fill="#f39a1a"/><path d="M14 18H17V10H20L15.5 4L11 10H14Z" fill="#e82020"/></svg>
<div class="a" style="left:128px;top:593px;width:31px;height:30px;background:#d9d9d9;border:1px solid #a6a6a6;border-radius:3px"></div>
<svg style="left:131px;top:597px;" width="24" height="22" viewBox="0 0 24 22"><rect x="0.5" y="0.5" width="22" height="20" fill="#fff" stroke="#2d62c8"/><rect x="1" y="1" width="21" height="2" fill="#2d62c8"/><path d="M7 4L9 9L14 9L10 12L12 17L7 14L3 17L4 12L1 9L5 9Z" fill="#f8d020"/><path d="M14 4H17V12H20L15.5 18L11 12H14Z" fill="#e82020"/></svg>
<svg style="left:172px;top:601px;" width="16" height="14" viewBox="0 0 16 14"><rect x="0.5" y="0.5" width="15" height="13" fill="#fafafa" stroke="#bbb"/><path d="M3 4H5M7 4H13M3 7H5M7 7H13M3 10H5M7 10H13" stroke="#666"/></svg>
<svg style="left:207px;top:598px;" width="24" height="22" viewBox="0 0 24 22"><rect x="1" y="1" width="16" height="16" fill="#f4e44a" stroke="#888" stroke-dasharray="1.5 1"/><circle cx="18" cy="16" r="5.5" fill="#e23b3b"/><path d="M15 19L21 13" stroke="#fff" stroke-width="1.5"/><circle cx="18" cy="16" r="3.2" fill="none" stroke="#fff" stroke-width="1.2"/></svg>
<svg style="left:245px;top:599px;" width="18" height="20" viewBox="0 0 18 20"><rect x="0.5" y="3.5" width="12" height="15" fill="#f8f8f8" stroke="#ccc"/><rect x="4.5" y="0.5" width="12" height="15" fill="#f8f8f8" stroke="#ccc"/><path d="M7 4H14M7 7H14M7 10H14" stroke="#ccc"/></svg>
<svg style="left:280px;top:598px;" width="22" height="20" viewBox="0 0 22 20"><rect x="4" y="1" width="14" height="6" fill="#eee" stroke="#999"/><rect x="1" y="6" width="20" height="9" rx="2" fill="#aaa" stroke="#888"/><rect x="5" y="12" width="12" height="7" fill="#fff" stroke="#999"/></svg>
<div class="a" style="left:50px;top:630px;width:266px;height:303px;background:#fff;border:1px solid #aaa"></div>
<div class="a" style="left:51px;top:632px;width:247px;height:18px;background:linear-gradient(#fff,#f2f2f2);border-bottom:1px solid #d8d8d8"></div>
<div class="a" style="left:236px;top:634px;width:1px;height:15px;background:#d8d8d8"></div>
<div class="t" style="left:55px;top:636px;font-size:11px;color:#000;">Feature</div>
<div class="t" style="left:241px;top:636px;font-size:11px;color:#000;">Value</div>
<div class="dv" style="left:101px;top:651px;height:255px"></div>
<div class="a" style="left:51px;top:652px;width:247px;height:13px;background:#f5f5f5"></div>
<div class="dh" style="left:102px;top:658px;width:9px"></div>
<div class="t" style="left:113px;top:653px;font-size:10.5px;color:#000;">BLOCKCE</div>
<div class="t" style="left:240px;top:653px;font-size:10.5px;color:#000;">2207</div>
<div class="dh" style="left:102px;top:671px;width:9px"></div>
<div class="t" style="left:113px;top:666px;font-size:10.5px;color:#000;">SUFFIX1CE</div>
<div class="t" style="left:240px;top:666px;font-size:10.5px;color:#000;">NULL</div>
<div class="a" style="left:51px;top:678px;width:247px;height:13px;background:#f5f5f5"></div>
<div class="dh" style="left:102px;top:684px;width:9px"></div>
<div class="t" style="left:113px;top:679px;font-size:10.5px;color:#000;">SUFFIX2CE</div>
<div class="t" style="left:240px;top:679px;font-size:10.5px;color:#000;">NULL</div>
<div class="dh" style="left:102px;top:697px;width:9px"></div>
<div class="t" style="left:113px;top:692px;font-size:10.5px;color:#000;">BAGCE</div>
<div class="t" style="left:240px;top:692px;font-size:10.5px;color:#000;">NULL</div>
<div class="a" style="left:51px;top:704px;width:247px;height:13px;background:#f5f5f5"></div>
<div class="dh" style="left:102px;top:710px;width:9px"></div>
<div class="t" style="left:113px;top:705px;font-size:10.5px;color:#000;">TAZCE</div>
<div class="t" style="left:240px;top:705px;font-size:10.5px;color:#000;">00940200</div>
<div class="dh" style="left:102px;top:723px;width:9px"></div>
<div class="t" style="left:113px;top:718px;font-size:10.5px;color:#000;">TADCE</div>
<div class="t" style="left:240px;top:718px;font-size:10.5px;color:#000;">00000010</div>
<div class="a" style="left:51px;top:730px;width:247px;height:13px;background:#f5f5f5"></div>
<div class="dh" style="left:102px;top:736px;width:9px"></div>
<div class="t" style="left:113px;top:731px;font-size:10.5px;color:#000;">MPOCE</div>
<div class="t" style="left:240px;top:731px;font-size:10.5px;color:#000;">22774638</div>
<div class="dh" style="left:102px;top:749px;width:9px"></div>
<div class="t" style="left:113px;top:744px;font-size:10.5px;color:#000;">PUMACE10</div>
<div class="t" style="left:240px;top:744px;font-size:10.5px;color:#000;">00200</div>
<div class="a" style="left:51px;top:756px;width:247px;height:13px;background:#f5f5f5"></div>
<div class="dh" style="left:102px;top:762px;width:9px"></div>
<div class="t" style="left:113px;top:757px;font-size:10.5px;color:#000;">SUBMCDFP</div>
<div class="t" style="left:240px;top:757px;font-size:10.5px;color:#000;">NULL</div>
<div class="dh" style="left:102px;top:775px;width:9px"></div>
<div class="t" style="left:113px;top:770px;font-size:10.5px;color:#000;">UGACE</div>
<div class="t" style="left:240px;top:770px;font-size:10.5px;color:#000;">NULL</div>
<div class="a" style="left:51px;top:782px;width:247px;height:13px;background:#f5f5f5"></div>
<div class="dh" style="left:102px;top:788px;width:9px"></div>
<div class="t" style="left:113px;top:783px;font-size:10.5px;color:#000;">STATEFP10</div>
<div class="t" style="left:240px;top:783px;font-size:10.5px;color:#000;">38</div>
<div class="dh" style="left:102px;top:801px;width:9px"></div>
<div class="t" style="left:113px;top:796px;font-size:10.5px;color:#000;">COUNTYFP10</div>
<div class="t" style="left:240px;top:796px;font-size:10.5px;color:#000;">005</div>
<div class="a" style="left:51px;top:808px;width:247px;height:13px;background:#f5f5f5"></div>
<div class="dh" style="left:102px;top:814px;width:9px"></div>
<div class="t" style="left:113px;top:809px;font-size:10.5px;color:#000;">TRACTCE10</div>
<div class="t" style="left:240px;top:809px;font-size:10.5px;color:#000;">940200</div>
<div class="dh" style="left:102px;top:827px;width:9px"></div>
<div class="t" style="left:113px;top:822px;font-size:10.5px;color:#000;">PLACEFP</div>
<div class="t" style="left:240px;top:822px;font-size:10.5px;color:#000;">NULL</div>
<div class="a" style="left:51px;top:834px;width:247px;height:13px;background:#f5f5f5"></div>
<div class="dh" style="left:102px;top:840px;width:9px"></div>
<div class="t" style="left:113px;top:835px;font-size:10.5px;color:#000;">COUSUBFP</div>
<div class="t" style="left:240px;top:835px;font-size:10.5px;color:#000;">53060</div>
<div class="dh" style="left:102px;top:853px;width:9px"></div>
<div class="t" style="left:113px;top:848px;font-size:10.5px;color:#000;">CONCITYFP</div>
<div class="t" style="left:240px;top:848px;font-size:10.5px;color:#000;">NULL</div>
<div class="a" style="left:51px;top:860px;width:247px;height:13px;background:#f5f5f5"></div>
<div class="dh" style="left:102px;top:866px;width:9px"></div>
<div class="t" style="left:113px;top:861px;font-size:10.5px;color:#000;">CDSESSN</div>
<div class="t" style="left:240px;top:861px;font-size:10.5px;color:#000;">114</div>
<div class="dh" style="left:102px;top:879px;width:9px"></div>
<div class="t" style="left:113px;top:874px;font-size:10.5px;color:#000;">LWFLG</div>
<div class="t" style="left:240px;top:874px;font-size:10.5px;color:#000;">L</div>
<div class="a" style="left:51px;top:886px;width:247px;height:13px;background:#f5f5f5"></div>
<div class="dh" style="left:102px;top:892px;width:9px"></div>
<div class="t" style="left:113px;top:887px;font-size:10.5px;color:#000;">CHNG_FLAG</div>
<div class="t" style="left:240px;top:887px;font-size:10.5px;color:#000;">1</div>
<div class="dh" style="left:102px;top:905px;width:9px"></div>
<div class="t" style="left:113px;top:900px;font-size:10.5px;color:#000;">GUPS</div>
<div class="t" style="left:240px;top:900px;font-size:10.5px;color:#000;">NULL</div>
<div class="dv" style="left:101px;top:651px;height:255px"></div>
<div class="a" style="left:299px;top:632px;width:15px;height:285px;background:#d2d2d2;border-left:1px solid #b0b0b0;border-right:1px solid #b0b0b0"></div>
<div class="a" style="left:299px;top:632px;width:15px;height:15px;background:linear-gradient(#fafafa,#e6e6e6);border:1px solid #a8a8a8;border-radius:3px 3px 0 0"></div>
<svg style="left:302px;top:637px;" width="9" height="5" viewBox="0 0 9 5"><path d="M0 5L4.5 0L9 5Z" fill="#000"/></svg>
<div class="a" style="left:299px;top:844px;width:15px;height:58px;background:linear-gradient(to right,#fdfdfd,#ececec);border:1px solid #a8a8a8"></div>
<div class="a" style="left:303px;top:872px;width:7px;height:1px;background:#aaa"></div>
<div class="a" style="left:303px;top:874px;width:7px;height:1px;background:#aaa"></div>
<div class="a" style="left:303px;top:876px;width:7px;height:1px;background:#aaa"></div>
<div class="a" style="left:299px;top:902px;width:15px;height:15px;background:linear-gradient(#fafafa,#e6e6e6);border:1px solid #a8a8a8;border-radius:0 0 3px 3px"></div>
<svg style="left:302px;top:907px;" width="9" height="5" viewBox="0 0 9 5"><path d="M0 0L4.5 5L9 0Z" fill="#000"/></svg>
<div class="a" style="left:51px;top:918px;width:248px;height:14px;background:#d2d2d2;border-top:1px solid #b0b0b0"></div>
<div class="a" style="left:51px;top:918px;width:14px;height:14px;background:linear-gradient(to right,#fafafa,#e6e6e6);border:1px solid #a8a8a8"></div>
<svg style="left:56px;top:921px;" width="5" height="9" viewBox="0 0 5 9"><path d="M5 0L0 4.5L5 9Z" fill="#000"/></svg>
<div class="a" style="left:65px;top:918px;width:189px;height:14px;background:linear-gradient(#fdfdfd,#ececec);border:1px solid #a8a8a8"></div>
<div class="a" style="left:157px;top:921px;width:1px;height:7px;background:#aaa"></div>
<div class="a" style="left:159px;top:921px;width:1px;height:7px;background:#aaa"></div>
<div class="a" style="left:161px;top:921px;width:1px;height:7px;background:#aaa"></div>
<div class="a" style="left:284px;top:918px;width:15px;height:14px;background:linear-gradient(to right,#fafafa,#e6e6e6);border:1px solid #a8a8a8"></div>
<svg style="left:289px;top:921px;" width="5" height="9" viewBox="0 0 5 9"><path d="M0 0L5 4.5L0 9Z" fill="#000"/></svg>
<div class="t" style="left:53px;top:946px;font-size:11px;color:#000;">Mode</div>
<div class="a" style="left:86px;top:941px;width:110px;height:22px;background:linear-gradient(#fdfdfd,#eaeaea);border:1px solid #9a9a9a;border-radius:2px"></div>
<div class="t" style="left:90px;top:946px;font-size:11px;color:#000;">Current layer</div>
<div class="a" style="left:175px;top:945px;width:1px;height:14px;background:#ccc"></div>
<svg style="left:179px;top:945px;" width="10" height="14" viewBox="0 0 10 14"><path d="M1 6L5 1L9 6Z M1 8L5 13L9 8Z" fill="#111"/></svg>
<div class="cb" style="left:214px;top:945px;border-color:#777"></div>
<div class="t" style="left:231px;top:946px;font-size:11px;color:#000;">Auto open form</div>
<div class="t" style="left:53px;top:977px;font-size:11px;color:#888;">View</div>
<div class="a" style="left:82px;top:971px;width:74px;height:23px;background:#f0f0f0;border:1px solid #c4c4c4;border-radius:2px"></div>
<div class="t" style="left:86px;top:977px;font-size:11px;color:#888;">Tree</div>
<div class="a" style="left:136px;top:975px;width:1px;height:15px;background:#ddd"></div>
<svg style="left:140px;top:976px;" width="10" height="14" viewBox="0 0 10 14"><path d="M1 6L5 1L9 6Z M1 8L5 13L9 8Z" fill="#666"/></svg>
<div class="a" style="left:276px;top:973px;width:34px;height:20px;background:linear-gradient(#fdfdfd,#e8e8e8);border:1px solid #8a8a8a;border-radius:3px"></div>
<div class="t" style="left:282px;top:977px;font-size:11px;color:#000;">Help</div>
<div class="a" style="left:0px;top:1001px;width:1920px;height:39px;background:#f0f0f0"></div>
<div class="t" style="left:6px;top:1015px;font-size:11px;color:#000;">8 feature(s) selected on layer faces_38005.</div>
<div class="a" style="left:974px;top:1010px;width:19px;height:21px;background:linear-gradient(#fafafa,#e4e4e4);border:1px solid #888;border-radius:2px"></div>
<svg style="left:977px;top:1013px;" width="13" height="15" viewBox="0 0 13 15"><path d="M2 2C6 4 6 10 10 12M10 2C6 4 4 9 3 12" stroke="#111" stroke-width="1.5" fill="none"/><circle cx="7" cy="7" r="4" fill="none" stroke="#333"/></svg>
<div class="t" style="left:1002px;top:1016px;font-size:11px;color:#000;">Coordinate:</div>
<div class="a" style="left:1070px;top:1011px;width:299px;height:20px;background:#fff;border:1px solid #a0a0a0"></div>
<div class="t" style="left:1176px;top:1016px;font-size:11px;color:#000;">-98.5613,47.8194</div>
<div class="t" style="left:1378px;top:1016px;font-size:11px;color:#000;">Scale</div>
<div class="a" style="left:1415px;top:1011px;width:91px;height:21px;background:#fff;border:1px solid #a0a0a0"></div>
<div class="t" style="left:1419px;top:1016px;font-size:11px;color:#000;">1:40,824</div>
<div class="a" style="left:1486px;top:1012px;width:1px;height:19px;background:#ccc"></div>
<svg style="left:1490px;top:1017px;" width="10" height="8" viewBox="0 0 10 8"><path d="M1 1L5 5L9 1" fill="none" stroke="#111" stroke-width="1.6"/></svg>
<div class="t" style="left:1515px;top:1016px;font-size:11px;color:#000;">Rotation:</div>
<div class="a" style="left:1570px;top:1006px;width:106px;height:30px;background:#fff;border:1px solid #a0a0a0"></div>
<div class="t" style="left:1576px;top:1016px;font-size:11px;color:#000;">0.0</div>
<div class="a" style="left:1659px;top:1007px;width:16px;height:28px;background:#f0f0f0;border-left:1px solid #ccc"></div>
<svg style="left:1662px;top:1011px;" width="10" height="6" viewBox="0 0 10 6"><path d="M1 5L5 1L9 5Z" fill="#111"/></svg>
<svg style="left:1662px;top:1025px;" width="10" height="6" viewBox="0 0 10 6"><path d="M1 1L5 5L9 1Z" fill="#111"/></svg>
<div class="a" style="left:1659px;top:1020px;width:16px;height:1px;background:#ccc"></div>
<div class="cb k" style="left:1685px;top:1015px;border-color:#555"></div>
<div class="t" style="left:1701px;top:1016px;font-size:11px;color:#000;">Render</div>
<svg style="left:1753px;top:1013px;" width="16" height="16" viewBox="0 0 16 16"><circle cx="8" cy="8" r="7" fill="#555" stroke="#222"/><path d="M1 8H15M8 1V15" stroke="#ddd" stroke-width="1"/><ellipse cx="8" cy="8" rx="3" ry="7" fill="none" stroke="#ddd"/></svg>
<div class="t" style="left:1771px;top:1016px;font-size:10.2px;color:#000;">EPSG:4269 (OTF)</div>
<svg style="left:1882px;top:1012px;" width="20" height="17" viewBox="0 0 20 17"><ellipse cx="10" cy="7.5" rx="9" ry="6.5" fill="#555"/><path d="M4 12L2 16L8 13Z" fill="#555"/></svg>
<div class="a" style="left:0px;top:1040px;width:1920px;height:40px;background:#03060b"></div>
<svg style="left:15px;top:1050px;" width="21" height="21" viewBox="0 0 21 21"><path d="M0 3L8.5 1.8V9.5H0Z M9.5 1.6L21 0V9.5H9.5Z M0 10.5H8.5V18.2L0 17Z M9.5 10.5H21V20L9.5 18.4Z" fill="#fff"/></svg>
<div class="a" style="left:48px;top:1040px;width:344px;height:40px;background:#333333"></div>
<svg style="left:57px;top:1050px;" width="20" height="20" viewBox="0 0 20 20"><circle cx="10" cy="10" r="8.5" fill="none" stroke="#fff" stroke-width="2"/></svg>
<div class="t" style="left:84px;top:1055px;font-size:14.6px;color:#cfcfcf;">Ask me anything</div>
<svg style="left:364px;top:1050px;" width="12" height="20" viewBox="0 0 12 20"><rect x="3" y="1" width="6" height="11" rx="3" fill="none" stroke="#aaa" stroke-width="1.2"/><path d="M1 9C1 13 11 13 11 9M6 13V18M3 18H9" fill="none" stroke="#aaa" stroke-width="1.2"/></svg>
<svg style="left:405px;top:1050px;" width="24" height="20" viewBox="0 0 24 20"><rect x="4" y="3" width="16" height="14" fill="none" stroke="#fff" stroke-width="1.5"/><path d="M1 5V15M23 5V15" stroke="#fff" stroke-width="1.5"/></svg>
<svg style="left:454px;top:1048px;" width="24" height="24" viewBox="0 0 24 24"><rect x="1" y="3" width="22" height="18" fill="#1e88d8"/><rect x="3" y="6" width="8" height="7" fill="#fff"/><path d="M13 7H21M13 10H21M13 13H21M3 16H21" stroke="#fff" stroke-width="1.2"/></svg>
<svg style="left:504px;top:1048px;" width="24" height="24" viewBox="0 0 24 24"><path d="M12 2C5 2 1 8 1 13C1 20 7 23 13 22C17 22 20 20 22 18V14C19 17 16 18 13 18C9 18 6 16 6 13H22V11C22 5 18 2 12 2Z M6.5 10C7 7 9 6 12 6C15 6 17 7 17 10Z" fill="#1e88e0"/></svg>
<div class="a" style="left:545px;top:1078px;width:40px;height:2px;background:#8cc8f6"></div>
<svg style="left:553px;top:1048px;" width="24" height="24" viewBox="0 0 24 24"><path d="M1 5H9L11 7H23V21H1Z" fill="#f2c84a"/><rect x="1" y="9" width="22" height="12" fill="#f8d86a"/><rect x="8" y="13" width="8" height="6" fill="#3a8ad8"/></svg>
<svg style="left:601px;top:1048px;" width="24" height="24" viewBox="0 0 24 24"><path d="M3 2H17L21 6V22H3Z" fill="#5aa8e8"/><circle cx="12" cy="13" r="6" fill="#f08020"/><path d="M10 10L15 13L10 16Z" fill="#fff"/></svg>
<svg style="left:650px;top:1048px;" width="24" height="24" viewBox="0 0 24 24"><path d="M3 3H21V21H3Z" fill="#b8336a"/><circle cx="10" cy="10" r="4" fill="none" stroke="#fff" stroke-width="2"/><path d="M13 13L19 19M17 17L15 19" stroke="#fff" stroke-width="2"/></svg>
<svg style="left:699px;top:1048px;" width="24" height="24" viewBox="0 0 24 24"><rect x="2" y="2" width="20" height="20" fill="#1f7a3e"/><rect x="10" y="5" width="12" height="14" fill="#fff"/><path d="M4 7L10 17M10 7L4 17" stroke="#fff" stroke-width="2"/><path d="M12 8H20M12 11H20M12 14H20" stroke="#1f7a3e"/></svg>
<svg style="left:748px;top:1048px;" width="24" height="24" viewBox="0 0 24 24"><path d="M8 7C8 3 16 3 16 7" fill="none" stroke="#fff" stroke-width="1.5"/><rect x="3" y="7" width="18" height="15" fill="#fff"/><path d="M11 10H7V14H11Z M17 10H13V14H17Z M11 15H7V19H11Z M17 15H13V19H17Z" fill="#111"/></svg>
<div class="a" style="left:789px;top:1078px;width:40px;height:2px;background:#8cc8f6"></div>
<svg style="left:797px;top:1048px;" width="24" height="24" viewBox="0 0 24 24"><rect x="2" y="2" width="20" height="20" fill="#2b5fb4"/><rect x="10" y="5" width="12" height="14" fill="#fff"/><path d="M3 7L5 17L7 10L9 17L11 7" fill="none" stroke="#fff" stroke-width="1.5"/></svg>
<div class="a" style="left:838px;top:1078px;width:40px;height:2px;background:#8cc8f6"></div>
<svg style="left:846px;top:1048px;" width="24" height="24" viewBox="0 0 24 24"><rect x="2" y="4" width="20" height="16" fill="#f2c84a"/><circle cx="12" cy="13" r="6" fill="#fff" stroke="#e8a020" stroke-width="1.5"/><path d="M12 9V13H15" stroke="#e8a020" stroke-width="1.5" fill="none"/></svg>
<svg style="left:895px;top:1048px;" width="24" height="24" viewBox="0 0 24 24"><rect x="2" y="2" width="20" height="20" fill="#d04a2a"/><rect x="7" y="6" width="14" height="12" fill="#fff"/><circle cx="12" cy="12" r="3.5" fill="#d04a2a"/></svg>
<svg style="left:944px;top:1048px;" width="24" height="24" viewBox="0 0 24 24"><circle cx="12" cy="12" r="11" fill="#db4437"/><path d="M12 12L22 8A11 11 0 0 1 8 22Z" fill="#f4c20d"/><path d="M12 12L8 22A11 11 0 0 1 2 6Z" fill="#0f9d58"/><circle cx="12" cy="12" r="5" fill="#fff"/><circle cx="12" cy="12" r="4" fill="#4285f4"/></svg>
<div class="a" style="left:982px;top:1040px;width:48px;height:40px;background:#36383c"></div>
<div class="a" style="left:982px;top:1078px;width:48px;height:2px;background:#8cc8f6"></div>
<svg style="left:993px;top:1048px;" width="24" height="24" viewBox="0 0 24 24"><text x="3" y="20" font-family="Liberation Serif" font-weight="bold" font-size="20" fill="#ecee70">Q</text><path d="M5 19L17 4" stroke="#18901a" stroke-width="2.4"/><path d="M14 3L18 1.5L17 6Z" fill="#18901a"/></svg>
<div class="a" style="left:1034px;top:1078px;width:40px;height:2px;background:#8cc8f6"></div>
<svg style="left:1042px;top:1048px;" width="24" height="24" viewBox="0 0 24 24"><ellipse cx="11" cy="7" rx="8" ry="5.5" fill="#e6e6ee" stroke="#d82020" stroke-width="1.2"/><path d="M8 4L16 16M10 4L13 16" stroke="#777" stroke-width="1.3"/><ellipse cx="14" cy="19" rx="2.2" ry="3.5" fill="none" stroke="#28a0e0" stroke-width="1.4" transform="rotate(-20 14 19)"/><ellipse cx="19" cy="15" rx="2.2" ry="3.5" fill="none" stroke="#28a0e0" stroke-width="1.4" transform="rotate(-50 19 15)"/></svg>
<svg style="left:1589px;top:1050px;" width="20" height="20" viewBox="0 0 20 20"><rect x="4" y="3" width="8" height="14" rx="1" fill="none" stroke="#fff" stroke-width="1.2"/><rect x="5" y="0" width="6" height="4" fill="#fff"/></svg>
<svg style="left:1613px;top:1050px;" width="20" height="20" viewBox="0 0 20 20"><path d="M3 15C0 15 0 10 3 10C3 6 8 5 10 8C11 5 16 6 16 10C19 10 19 15 16 15Z" fill="#bbb"/></svg>
<svg style="left:1637px;top:1050px;" width="20" height="20" viewBox="0 0 20 20"><circle cx="9" cy="10" r="7" fill="none" stroke="#fff" stroke-width="1.5"/><circle cx="9" cy="10" r="4" fill="none" stroke="#fff" stroke-width="1.5"/><circle cx="9" cy="10" r="1.5" fill="#fff"/></svg>
<svg style="left:1661px;top:1050px;" width="20" height="20" viewBox="0 0 20 20"><path d="M1 9H17M9 1V17M4 4L14 14" stroke="#fff" stroke-width="1.6"/></svg>
<svg style="left:1685px;top:1050px;" width="20" height="20" viewBox="0 0 20 20"><circle cx="9" cy="11" r="7" fill="#e8c020"/><path d="M5 11L8 14L14 6" stroke="#2a9a2a" stroke-width="2.2" fill="none"/></svg>
<svg style="left:1709px;top:1050px;" width="20" height="20" viewBox="0 0 20 20"><rect x="2" y="2" width="14" height="16" fill="#d8201a"/><path d="M5 14C8 10 10 6 9 4C8 6 10 11 14 13" fill="none" stroke="#fff"/></svg>
<svg style="left:1733px;top:1050px;" width="20" height="20" viewBox="0 0 20 20"><rect x="1" y="4" width="16" height="11" fill="#f0c030"/><path d="M1 4L9 10L17 4" fill="none" stroke="#a07010"/></svg>
<svg style="left:1757px;top:1050px;" width="20" height="20" viewBox="0 0 20 20"><rect x="2" y="3" width="14" height="14" rx="3" fill="#f2b840"/><circle cx="9" cy="10" r="4" fill="#fff"/></svg>
<svg style="left:1781px;top:1050px;" width="20" height="20" viewBox="0 0 20 20"><path d="M1 7H5L10 2V18L5 13H1Z" fill="none" stroke="#fff" stroke-width="1.3"/><path d="M13 6C15 8 15 12 13 14M15 4C18 7 18 13 15 16" fill="none" stroke="#fff" stroke-width="1.2"/></svg>
<div class="t" style="left:1811px;top:1046px;font-size:12px;color:#fff;">11:24 AM</div>
<div class="t" style="left:1809px;top:1064px;font-size:12px;color:#fff;">12/9/2016</div>
<svg style="left:1878px;top:1050px;" width="22" height="20" viewBox="0 0 22 20"><path d="M1 1H20V14H8L3 19V14H1Z" fill="none" stroke="#fff" stroke-width="1.4"/></svg>
<div class="a" style="left:469px;top:400px;width:581px;height:116px;box-shadow:0 1px 6px rgba(0,0,0,0.22)"></div>
<div class="a" style="left:467px;top:398px;width:582px;height:117px;background:#f0f0f0;border:1px solid #2b7fd4"></div>
<div class="a" style="left:468px;top:399px;width:580px;height:30px;background:#fff"></div>
<svg style="left:476px;top:405px;" width="17" height="17" viewBox="0 0 17 17"><rect x="0" y="0" width="17" height="17" fill="#2c74b8"/><text x="1" y="8" font-size="5.5" fill="#fff" font-family="Liberation Sans">GUPS</text><rect x="1" y="12" width="15" height="1.5" fill="#fff"/></svg>
<div class="t" style="left:497px;top:408px;font-size:12px;color:#000;">Modify Area Feature</div>
<svg style="left:1027px;top:407px;" width="13" height="13" viewBox="0 0 13 13"><path d="M1 1L12 12M12 1L1 12" stroke="#111" stroke-width="0.9"/></svg>
<div class="t" style="left:482px;top:439px;font-size:10.5px;color:#000;">Select Replacement Geography for TBG</div>
<div class="a" style="left:1000px;top:470px;width:28px;height:28px;background:#e6e6e6;border:1px solid #222;border-radius:3px"></div>
<div class="a" style="left:679px;top:436px;width:347px;height:80px;box-shadow:2px 2px 3px rgba(0,0,0,0.28)"></div>
<div class="a" style="left:677px;top:434px;width:347px;height:80px;background:#fcfcfc;border:1px solid #b8b8b8"></div>
<div class="a" style="left:679px;top:455px;width:342px;height:18px;background:linear-gradient(#3d95f2,#2a76d6);border-radius:2px"></div>
<div class="t" style="left:684px;top:440px;font-size:10.7px;color:#000;">3935T00100A</div>
<div class="t" style="left:684px;top:459px;font-size:10.7px;color:#fff;">3935T00100B</div>
<div class="t" style="left:684px;top:478px;font-size:10.7px;color:#000;">3935T00200A</div>
<div class="t" style="left:684px;top:497px;font-size:10.7px;color:#000;">3935T00200B</div></body></html>
